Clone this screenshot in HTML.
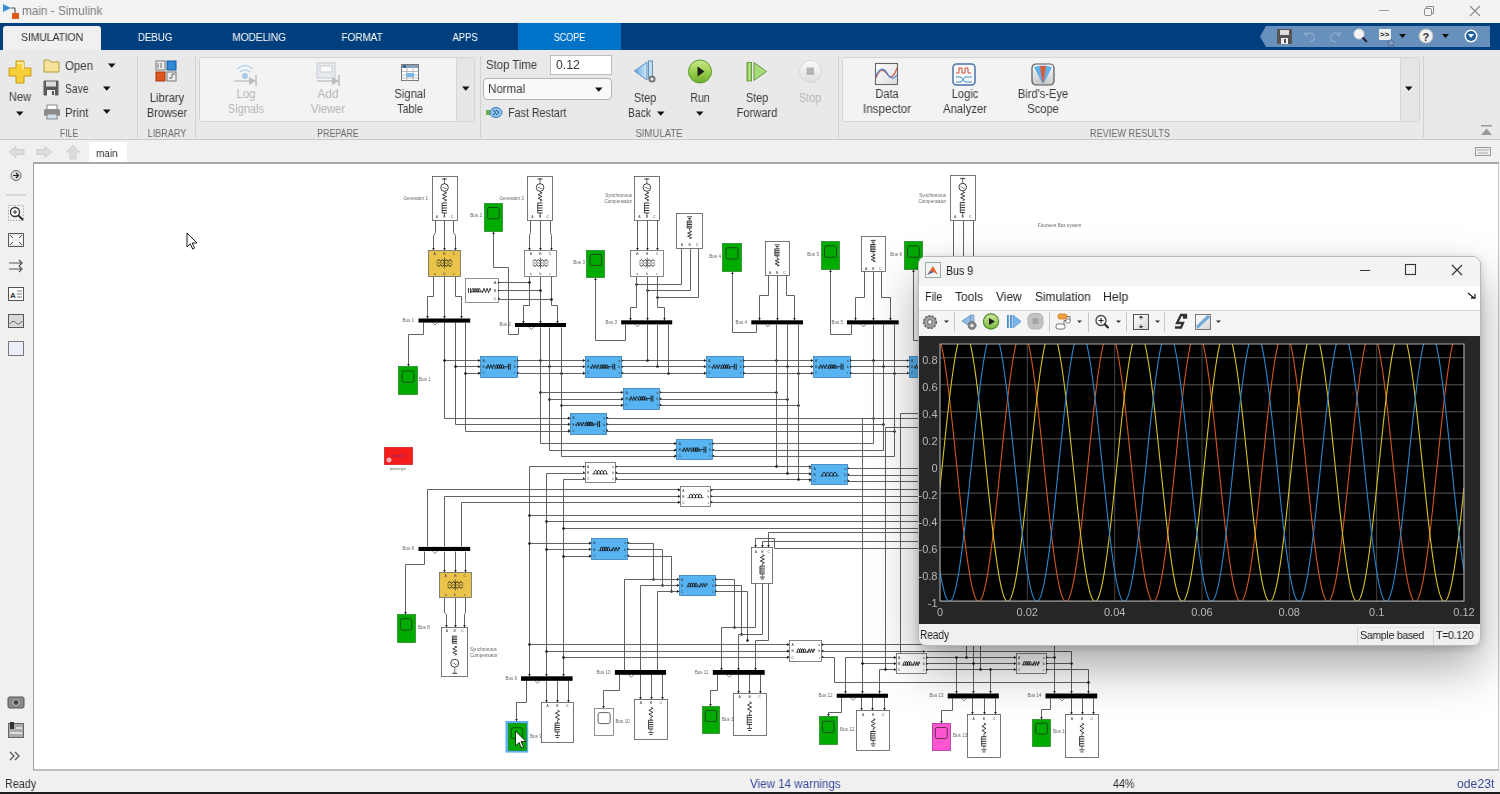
<!DOCTYPE html>
<html><head><meta charset="utf-8"><style>
*{margin:0;padding:0;box-sizing:border-box}
html,body{width:1500px;height:794px;overflow:hidden;background:#f0f0f0;font-family:"Liberation Sans", sans-serif}
.a{position:absolute}
.t{position:absolute;white-space:nowrap;font-family:"Liberation Sans", sans-serif;color:#3a3a3a;font-size:12px;line-height:14px}
.c{text-align:center}
.g{color:#6a6a6a;font-size:11px}
.dis{color:#b4b4b4}
.tab{position:absolute;top:27px;height:23px;color:#fff;font-size:11px;letter-spacing:-0.2px;line-height:20px;text-align:center}
svg{position:absolute;overflow:visible}
.t,.tab{will-change:transform}
svg.dg{will-change:transform}
</style></head><body>
<!-- title bar -->
<div class="a" style="left:0;top:0;width:1500px;height:22px;background:#f3f3f3"></div>
<svg style="left:2px;top:2px" width="18" height="18" viewBox="0 0 18 18">
<path d="M1,2 L9,6 L1,10 Z" fill="#3b8fd8"/><path d="M9,6 L13,6 L13,11" fill="none" stroke="#444" stroke-width="1"/>
<rect x="10" y="11" width="7" height="6" fill="#e05a1a"/></svg>
<div class="t" style="left:22px;top:4px;font-size:12px;color:#7a7a7a;transform:scaleX(0.980);transform-origin:left">main - Simulink</div>
<div class="a" style="left:1379px;top:10px;width:10px;height:1px;background:#9a9a9a"></div>
<svg style="left:1423px;top:5px" width="12" height="12"><rect x="1.5" y="3.5" width="7" height="7" rx="1.2" fill="none" stroke="#8a8a8a"/><path d="M3.5,3.5 V1.5 H10.5 V8.5 H8.5" fill="none" stroke="#8a8a8a"/></svg>
<svg style="left:1469px;top:5px" width="12" height="12"><path d="M1,1 L11,11 M11,1 L1,11" stroke="#8a8a8a" stroke-width="1.1"/></svg>
<!-- tab bar -->
<div class="a" style="left:0;top:23px;width:1500px;height:27px;background:#003f7e"></div>
<div class="a" style="left:3px;top:26px;width:98px;height:24px;background:#f0f0f0;border-radius:3px 3px 0 0"></div>
<div class="tab" style="left:3px;width:98px;color:#333;transform:scaleX(0.963);transform-origin:center">SIMULATION</div>
<div class="tab" style="left:120px;width:70px;transform:scaleX(0.903);transform-origin:center">DEBUG</div>
<div class="tab" style="left:222px;width:74px;transform:scaleX(0.940);transform-origin:center">MODELING</div>
<div class="tab" style="left:330px;width:64px;transform:scaleX(0.923);transform-origin:center">FORMAT</div>
<div class="tab" style="left:436px;width:58px;transform:scaleX(0.874);transform-origin:center">APPS</div>
<div class="a" style="left:518px;top:23px;width:103px;height:27px;background:#0073c8"></div>
<div class="tab" style="left:518px;width:103px;transform:scaleX(0.845);transform-origin:center">SCOPE</div>
<!-- quick access -->
<svg style="left:1261px;top:26px" width="234" height="22">
<path d="M5,0 H229 V21 H5 L-1,10.5 Z" fill="#6890bc"/>
<g transform="translate(16,3)"><rect x="0" y="0" width="15" height="15" rx="1" fill="#555"/><rect x="3" y="1" width="9" height="5" fill="#ddd"/><rect x="4" y="9" width="7" height="6" fill="#eee"/><rect x="7" y="10" width="2" height="4" fill="#555"/></g>
<path d="M44,9 q5,-4 9,0 q2,6 -5,7" fill="none" stroke="#85a8cc" stroke-width="1.5"/><path d="M42,6 L45,11 L48,7z" fill="#85a8cc"/>
<path d="M79,9 q-5,-4 -9,0 q-2,6 5,7" fill="none" stroke="#85a8cc" stroke-width="1.5"/><path d="M81,6 L78,11 L75,7z" fill="#85a8cc"/>
<circle cx="98" cy="8" r="5" fill="#f4f4f4" stroke="#d8d8d8"/><path d="M101.5,11.5 L106,16" stroke="#223" stroke-width="2"/>
<rect x="118" y="3" width="12" height="11" fill="#f0f0f0"/><text x="119" y="11" font-size="8" font-weight="bold" fill="#222" font-family='"Liberation Sans", sans-serif'>&gt;&gt;</text><path d="M130,13 l1.2,2.5 2.6,0.3 -2,1.8 0.6,2.6 -2.4,-1.4 -2.4,1.4 0.6,-2.6 -2,-1.8 2.6,-0.3z" fill="#7fa8d0" stroke="#446" stroke-width="0.5"/>
<path d="M138,8 h7 l-3.5,4z" fill="#111"/>
<circle cx="165" cy="10" r="7" fill="#f2f2f2" stroke="#bbb"/><text x="161.5" y="14.5" font-size="11" font-weight="bold" fill="#333" font-family='"Liberation Sans", sans-serif'>?</text>
<path d="M181,8 h7 l-3.5,4z" fill="#111"/>
<circle cx="210" cy="10" r="6.5" fill="#fff"/><circle cx="210" cy="10" r="5" fill="#1f5d9c"/><path d="M207,8 h6 l-3,4z" fill="#fff"/>
</svg>
<!-- ribbon -->
<div class="a" style="left:0;top:50px;width:1500px;height:90px;background:#e9e9e9"></div>
<div class="a" style="left:0;top:139px;width:1500px;height:1px;background:#c9c9c9"></div>
<div class="a" style="left:137px;top:56px;width:1px;height:82px;background:#d2d2d2"></div>
<div class="a" style="left:195px;top:56px;width:1px;height:82px;background:#d2d2d2"></div>
<div class="a" style="left:480px;top:56px;width:1px;height:82px;background:#d2d2d2"></div>
<div class="a" style="left:838px;top:56px;width:1px;height:82px;background:#d2d2d2"></div>
<div class="a" style="left:1423px;top:56px;width:1px;height:82px;background:#d2d2d2"></div>
<div class="a" style="left:199px;top:57px;width:276px;height:65px;background:#f3f3f3;border:1px solid #d4d4d4;border-radius:3px"></div>
<div class="a" style="left:456px;top:58px;width:18px;height:63px;background:#e6e6e6;border-left:1px solid #d6d6d6"></div>
<div class="a" style="left:842px;top:57px;width:578px;height:65px;background:#f3f3f3;border:1px solid #d4d4d4;border-radius:3px"></div>
<div class="a" style="left:1400px;top:58px;width:19px;height:63px;background:#e6e6e6;border-left:1px solid #d6d6d6"></div>
<svg style="left:461px;top:86px" width="10" height="6"><path d="M1,0.5 h7.5 l-3.75,4.2z" fill="#111"/></svg>
<svg style="left:1404px;top:86px" width="10" height="6"><path d="M1,0.5 h7.5 l-3.75,4.2z" fill="#111"/></svg>
<!-- FILE -->
<svg style="left:8px;top:60px" width="24" height="24"><path d="M8,1 h8 v7 h7 v8 h-7 v7 h-8 v-7 h-7 v-8 h7z" fill="#f7cf3a" stroke="#c89b1c" stroke-width="1"/><path d="M9,3 h6 v6" fill="none" stroke="#fff3b0" stroke-width="1.5"/></svg>
<div class="t c" style="left:4px;top:90px;width:32px;transform:scaleX(0.933);transform-origin:center">New</div>
<svg style="left:15px;top:111px" width="10" height="6"><path d="M1,0.5 h7.5 l-3.75,4.2z" fill="#111"/></svg>
<svg style="left:43px;top:59px" width="18" height="14"><path d="M1,1 h5 l2,2 h8 v10 h-15z" fill="#f5e29a" stroke="#b99a3a"/></svg>
<div class="t" style="left:65px;top:59px;transform:scaleX(0.952);transform-origin:left">Open</div>
<svg style="left:107px;top:63px" width="10" height="6"><path d="M1,0.5 h7.5 l-3.75,4.2z" fill="#111"/></svg>
<svg style="left:43px;top:80px" width="17" height="17"><rect x="0.5" y="0.5" width="15" height="15" rx="1" fill="#5a5a5a"/><rect x="3" y="1.5" width="10" height="5" fill="#ddd"/><rect x="4" y="10" width="8" height="6" fill="#eee"/><rect x="9" y="11" width="2" height="4" fill="#555"/></svg>
<div class="t" style="left:65px;top:82px;transform:scaleX(0.858);transform-origin:left">Save</div>
<svg style="left:102px;top:86px" width="10" height="6"><path d="M1,0.5 h7.5 l-3.75,4.2z" fill="#111"/></svg>
<svg style="left:43px;top:104px" width="18" height="16"><rect x="4" y="1" width="10" height="5" fill="#fff" stroke="#888"/><rect x="1" y="5" width="16" height="7" rx="1.5" fill="#8c8c8c"/><rect x="4" y="10" width="10" height="5" fill="#cfe0f0" stroke="#888"/></svg>
<div class="t" style="left:65px;top:105.5px;transform:scaleX(0.951);transform-origin:left">Print</div>
<svg style="left:102px;top:109px" width="10" height="6"><path d="M1,0.5 h7.5 l-3.75,4.2z" fill="#111"/></svg>
<div class="t g c" style="left:40px;top:126px;width:58px;transform:scaleX(0.784);transform-origin:center">FILE</div>
<!-- LIBRARY -->
<svg style="left:155px;top:60px" width="24" height="24"><rect x="1" y="1" width="9" height="9" fill="#eee" stroke="#777"/><rect x="12" y="1" width="9" height="9" fill="#2c8ad8" stroke="#1a5a9a"/><rect x="1" y="12" width="9" height="9" fill="#e0561c" stroke="#a33a10"/><rect x="12" y="12" width="9" height="9" fill="#eee" stroke="#777"/><path d="M3,8 V3 M6,8 V3 M14,18 h3 v-4 h3" stroke="#666" fill="none"/></svg>
<div class="t c" style="left:140px;top:91px;width:54px;transform:scaleX(0.946);transform-origin:center">Library</div>
<div class="t c" style="left:140px;top:106px;width:54px;transform:scaleX(0.916);transform-origin:center">Browser</div>
<div class="t g c" style="left:140px;top:126px;width:54px;transform:scaleX(0.829);transform-origin:center">LIBRARY</div>
<!-- PREPARE -->
<svg style="left:233px;top:62px" width="26" height="24"><path d="M4,7 q8,-7 16,0" fill="none" stroke="#b8d4ec" stroke-width="1.5"/><path d="M7,10 q5,-4 10,0" fill="none" stroke="#b8d4ec" stroke-width="1.5"/><circle cx="12" cy="14" r="3" fill="#a9c8e6"/><path d="M1,19 H20" stroke="#c4c4c4" stroke-width="1.5"/><path d="M16,15 L23,19 L16,23z" fill="#bdbdbd"/><path d="M23,13 V24" stroke="#bdbdbd" stroke-width="1.5"/></svg>
<div class="t c dis" style="left:216px;top:87px;width:60px;transform:scaleX(0.945);transform-origin:center">Log</div>
<div class="t c dis" style="left:216px;top:102px;width:60px;transform:scaleX(0.916);transform-origin:center">Signals</div>
<svg style="left:316px;top:62px" width="26" height="24"><rect x="1" y="1" width="18" height="15" fill="#e4eaf0" stroke="#c8ccd0"/><rect x="4" y="4" width="12" height="6" fill="#fafafa" stroke="#ccc"/><path d="M1,19 H20" stroke="#c4c4c4" stroke-width="1.5"/><path d="M16,15 L23,19 L16,23z" fill="#bdbdbd"/><path d="M23,13 V24" stroke="#bdbdbd" stroke-width="1.5"/></svg>
<div class="t c dis" style="left:298px;top:87px;width:60px;transform:scaleX(0.977);transform-origin:center">Add</div>
<div class="t c dis" style="left:298px;top:102px;width:60px;transform:scaleX(0.937);transform-origin:center">Viewer</div>
<svg style="left:401px;top:64px" width="19" height="18"><rect x="0.5" y="0.5" width="17" height="16" fill="#fff" stroke="#777"/><rect x="1" y="1" width="16" height="3" fill="#8aa0b8"/><rect x="2" y="1.5" width="3" height="2" fill="#1a4a8a"/><path d="M1,7.5 H17 M1,11 H17 M1,14 H17 M6,4 V17 M12,4 V17" stroke="#aaa" stroke-width="0.8"/><rect x="5" y="9" width="8" height="4" fill="#7ab8ec"/></svg>
<div class="t c" style="left:380px;top:87px;width:60px;transform:scaleX(0.937);transform-origin:center">Signal</div>
<div class="t c" style="left:380px;top:102px;width:60px;transform:scaleX(0.892);transform-origin:center">Table</div>
<div class="t g c" style="left:300px;top:126px;width:76px;transform:scaleX(0.803);transform-origin:center">PREPARE</div>
<!-- SIMULATE -->
<div class="t" style="left:486px;top:58px;font-size:12px;transform:scaleX(0.948);transform-origin:left">Stop Time</div>
<div class="a" style="left:550px;top:55px;width:62px;height:20px;background:#fff;border:1px solid #bdbdbd"></div>
<div class="t" style="left:556px;top:58px;transform:scaleX(1.021);transform-origin:left">0.12</div>
<div class="a" style="left:483px;top:78px;width:129px;height:22px;background:#fafafa;border:1px solid #b4b4b4;border-radius:4px"></div>
<div class="t" style="left:488px;top:82px;transform:scaleX(0.961);transform-origin:left">Normal</div>
<svg style="left:594px;top:87px" width="10" height="6"><path d="M1,0.5 h7.5 l-3.75,4.2z" fill="#111"/></svg>
<svg style="left:485px;top:106px" width="18" height="13"><rect x="1" y="4" width="6" height="5" fill="#6ab04c"/><ellipse cx="11" cy="6.5" rx="6" ry="5" fill="#8ec3ec" stroke="#3a7ab8"/><path d="M8,4 l3,2.5 l-3,2.5 M11,4 l3,2.5 l-3,2.5" fill="none" stroke="#1a4a8a"/></svg>
<div class="t" style="left:508px;top:106px;transform:scaleX(0.894);transform-origin:left">Fast Restart</div>
<svg style="left:633px;top:60px" width="26" height="24"><defs><linearGradient id="gb" x1="0" y1="0" x2="1" y2="0"><stop offset="0" stop-color="#6aa8dc"/><stop offset="1" stop-color="#cfe6f8"/></linearGradient></defs><path d="M1.5,11 L14,2 V20z" fill="url(#gb)" stroke="#4a86c0" stroke-width="0.9"/><rect x="15.5" y="1" width="4" height="17" fill="#c4def4" stroke="#5a8ab0" stroke-width="0.9"/><circle cx="19" cy="19" r="3.6" fill="#777"/><circle cx="19" cy="19" r="1.5" fill="#eee"/></svg>
<div class="t c" style="left:620px;top:91px;width:50px;transform:scaleX(0.903);transform-origin:center">Step</div>
<div class="t" style="left:628px;top:106px;transform:scaleX(0.858);transform-origin:left">Back</div>
<svg style="left:656px;top:111px" width="10" height="6"><path d="M1,0.5 h7.5 l-3.75,4.2z" fill="#111"/></svg>
<svg style="left:687px;top:59px" width="26" height="26"><defs><linearGradient id="gr" x1="0" y1="0" x2="0" y2="1"><stop offset="0" stop-color="#cbe98a"/><stop offset="0.5" stop-color="#9ccf4e"/><stop offset="1" stop-color="#6aae2a"/></linearGradient></defs><circle cx="13" cy="12.5" r="11.5" fill="url(#gr)" stroke="#5f9a34"/><path d="M10.5,7.5 L17.5,12.5 L10.5,17.5z" fill="#1c1c1c"/></svg>
<div class="t c" style="left:675px;top:91px;width:50px;transform:scaleX(0.873);transform-origin:center">Run</div>
<svg style="left:695px;top:111px" width="10" height="6"><path d="M1,0.5 h7.5 l-3.75,4.2z" fill="#111"/></svg>
<svg style="left:745px;top:61px" width="24" height="22"><defs><linearGradient id="gs" x1="0" y1="0" x2="1" y2="0"><stop offset="0" stop-color="#6fae3c"/><stop offset="0.5" stop-color="#bfe58f"/><stop offset="1" stop-color="#7fbf48"/></linearGradient></defs><rect x="2" y="1.5" width="4.5" height="18.5" fill="url(#gs)" stroke="#5a8f34" stroke-width="0.8"/><path d="M9,1.5 L21.5,10.5 L9,19.5z" fill="#a8dc78" stroke="#5a8f34" stroke-width="0.9"/></svg>
<div class="t c" style="left:727px;top:91px;width:60px;transform:scaleX(0.903);transform-origin:center">Step</div>
<div class="t c" style="left:727px;top:106px;width:60px;transform:scaleX(0.927);transform-origin:center">Forward</div>
<svg style="left:798px;top:59px" width="26" height="26"><defs><linearGradient id="gt" x1="0" y1="0" x2="0" y2="1"><stop offset="0" stop-color="#fbfbfb"/><stop offset="1" stop-color="#dedede"/></linearGradient></defs><circle cx="12.5" cy="12.5" r="11" fill="url(#gt)" stroke="#d6d6d6"/><rect x="8.5" y="8.5" width="7.5" height="7.5" fill="#b4b4b4"/></svg>
<div class="t c dis" style="left:785px;top:91px;width:50px;transform:scaleX(0.915);transform-origin:center">Stop</div>
<div class="t g c" style="left:620px;top:126px;width:78px;transform:scaleX(0.869);transform-origin:center">SIMULATE</div>
<!-- REVIEW -->
<svg style="left:875px;top:63px" width="24" height="23"><defs><linearGradient id="gd" x1="0" y1="0" x2="1" y2="1"><stop offset="0" stop-color="#fff"/><stop offset="1" stop-color="#dcdcdc"/></linearGradient></defs><rect x="0.5" y="0.5" width="22" height="21" fill="url(#gd)" stroke="#666" stroke-width="1.1"/><path d="M1,15 q5,-13 11,-4 q5,8 10,-6" fill="none" stroke="#d0584a" stroke-width="1.2"/><path d="M1,13 q5,-12 11,-3 q5,9 10,2" fill="none" stroke="#3d86cf" stroke-width="1.2"/></svg>
<div class="t c" style="left:852px;top:87px;width:70px;transform:scaleX(0.906);transform-origin:center">Data</div>
<div class="t c" style="left:852px;top:102px;width:70px;transform:scaleX(0.974);transform-origin:center">Inspector</div>
<svg style="left:952px;top:63px" width="25" height="23"><rect x="1" y="1" width="22" height="21" rx="3.5" fill="#f8f8f8" stroke="#4a72a8" stroke-width="1.5"/><path d="M4,10 h3 v-5 h3 v5 h3 v-5 h3 v5 h3" fill="none" stroke="#d04a3a" stroke-width="1"/><path d="M4,14 h5 l4,5 h7 M4,19 h5 l4,-5 h7" fill="none" stroke="#3a8ad0" stroke-width="1"/></svg>
<div class="t c" style="left:928px;top:87px;width:74px;transform:scaleX(0.934);transform-origin:center">Logic</div>
<div class="t c" style="left:928px;top:102px;width:74px;transform:scaleX(0.942);transform-origin:center">Analyzer</div>
<svg style="left:1031px;top:63px" width="24" height="23"><defs><linearGradient id="ge" x1="0" y1="0" x2="0" y2="1"><stop offset="0" stop-color="#fafafa"/><stop offset="1" stop-color="#c8c8c8"/></linearGradient></defs><rect x="1" y="1" width="22" height="21" rx="4" fill="url(#ge)" stroke="#555" stroke-width="1.2"/><path d="M3,4 Q12,1 21,4 L13,20 L11,20z" fill="#5fb0ea"/><path d="M9,3 L15,3 L12.6,19 L11.4,19z" fill="#d85a3a"/></svg>
<div class="t c" style="left:1003px;top:87px;width:80px;transform:scaleX(0.924);transform-origin:center">Bird's-Eye</div>
<div class="t c" style="left:1003px;top:102px;width:80px;transform:scaleX(0.926);transform-origin:center">Scope</div>
<div class="t g c" style="left:1070px;top:126px;width:120px;transform:scaleX(0.829);transform-origin:center">REVIEW RESULTS</div>
<svg style="left:1481px;top:125px" width="12" height="11"><rect x="0" y="0" width="11" height="1.5" fill="#999"/><path d="M0,10 L5.5,3.5 L11,10z" fill="#999"/></svg>
<!-- breadcrumb -->
<svg style="left:8px;top:146px" width="18" height="14"><path d="M1,6 L8,0.5 V3.5 H16 V8.5 H8 V11.5z" fill="#dcdcdc" stroke="#cfcfcf"/></svg>
<svg style="left:36px;top:146px" width="18" height="14"><path d="M16,6 L9,0.5 V3.5 H1 V8.5 H9 V11.5z" fill="#dcdcdc" stroke="#cfcfcf"/></svg>
<svg style="left:66px;top:144px" width="15" height="16"><path d="M7,1 L13.5,8 H10 V15 H4 V8 H0.5z" fill="#dcdcdc" stroke="#cfcfcf"/></svg>
<div class="a" style="left:89px;top:142px;width:38px;height:20px;background:#fff"></div>
<div class="t" style="left:96px;top:146px;font-size:11.5px;color:#333;transform:scaleX(0.867);transform-origin:left">main</div>
<svg style="left:1475px;top:147px" width="17" height="10"><rect x="0.5" y="0.5" width="15" height="8" fill="#eee" stroke="#999"/><path d="M3,2 V4 M5,2 V4 M7,2 V4 M9,2 V4 M11,2 V4 M13,2 V4 M3,6 H13" stroke="#999" stroke-width="0.8"/></svg>
<!-- canvas -->
<div class="a" style="left:33px;top:162px;width:1466px;height:609px;background:#fff;border-top:2px solid #a8a8a8;border-left:1px solid #a0a0a0;border-right:1px solid #c8c8c8;border-bottom:2px solid #c0c0c0"></div>
<!-- palette -->
<svg style="left:0;top:162px" width="33" height="608">
<circle cx="16" cy="13.5" r="5" fill="#ddd" stroke="#666"/><path d="M13,13.5 h5 M16,11 l2.5,2.5 l-2.5,2.5" fill="none" stroke="#222" stroke-width="1.2"/>
<path d="M6,33 H26" stroke="#bbb"/>
<rect x="8.5" y="43.5" width="15" height="15" fill="none" stroke="#aaa" stroke-dasharray="1.5 1.5"/><circle cx="15" cy="50" r="4.5" fill="#fff" stroke="#333" stroke-width="1.3"/><path d="M18,53 L23,58" stroke="#333" stroke-width="2"/><path d="M13,50 h4 M15,48 v4" stroke="#333"/>
<rect x="8.5" y="71.5" width="15" height="13" fill="#f4f4f4" stroke="#555"/><path d="M10,73 l3,3 M22,73 l-3,3 M10,83 l3,-3 M22,83 l-3,-3" stroke="#444"/>
<path d="M9,101 H22 M19,98 l3,3 l-3,3 M9,107 H22 M19,104 l3,3 l-3,3" fill="none" stroke="#555" stroke-width="1.2"/>
<rect x="8.5" y="125.5" width="15" height="13" fill="#fff" stroke="#555"/><text x="10" y="136" font-size="8" font-weight="bold" fill="#333" font-family='"Liberation Sans", sans-serif'>A</text><path d="M17,129 h5 M17,132 h5 M17,135 h5" stroke="#555" stroke-width="0.8"/>
<rect x="8.5" y="152.5" width="15" height="13" fill="#d8d8d8" stroke="#555"/><path d="M10,162 q3,-5 6,-1 q3,3 6,-2" fill="none" stroke="#666"/>
<rect x="8.5" y="179.5" width="15" height="14" fill="#eceef8" stroke="#777"/>
<rect x="8" y="535" width="16" height="11" rx="1.5" fill="#888" stroke="#555"/><circle cx="16" cy="540.5" r="3" fill="#444" stroke="#ccc"/>
<rect x="8.5" y="561.5" width="15" height="14" fill="#aaa" stroke="#666"/><rect x="10" y="560" width="4" height="7" fill="#333"/><path d="M16,566 h6 M10,571 h12" stroke="#eee" stroke-width="1.5"/>
<path d="M10,590 l4,4 l-4,4 M15,590 l4,4 l-4,4" fill="none" stroke="#555" stroke-width="1.3"/>
</svg>
<!-- status bar -->
<div class="a" style="left:0;top:771px;width:1500px;height:21px;background:#f0f0f0"></div>
<div class="t" style="left:5px;top:777px;font-size:12px;color:#333;transform:scaleX(0.899);transform-origin:left">Ready</div>
<div class="t" style="left:750px;top:777px;font-size:12px;color:#3a4a9a;transform:scaleX(0.966);transform-origin:left">View 14 warnings</div>
<div class="t" style="left:1113px;top:777px;font-size:12px;color:#333;transform:scaleX(0.892);transform-origin:left">44%</div>
<div class="t" style="left:1457px;top:777px;font-size:12px;color:#3a4a9a;transform:scaleX(1.019);transform-origin:left">ode23t</div>
<div class="a" style="left:0;top:792px;width:1500px;height:2px;background:#1c1c1c"></div>
<!-- diagram -->
<svg class="dg" style="left:0;top:0" width="1500" height="794" viewBox="0 0 1500 794">
<clipPath id="cv"><rect x="35" y="164" width="1462" height="605"/></clipPath>
<g clip-path="url(#cv)">
<polyline points="435.5,220.5 435.5,232.5 433.5,235.5 433.5,250.5" fill="none" stroke="#5a5a5a" stroke-width="0.95"/>
<path d="M433.5,250.5 L432.2,247.9 L434.8,247.9Z" fill="#222"/>
<polyline points="444.5,220.5 444.5,250.5" fill="none" stroke="#5a5a5a" stroke-width="0.95"/>
<path d="M444.5,250.5 L443.2,247.9 L445.8,247.9Z" fill="#222"/>
<polyline points="453.5,220.5 453.5,232.5 455.5,235.5 455.5,250.5" fill="none" stroke="#5a5a5a" stroke-width="0.95"/>
<path d="M455.5,250.5 L454.2,247.9 L456.8,247.9Z" fill="#222"/>
<polyline points="433.5,276.5 433.5,296.5 427.5,296.5 427.5,318.5" fill="none" stroke="#5a5a5a" stroke-width="0.95"/>
<path d="M427.5,318.5 L426.2,315.9 L428.8,315.9Z" fill="#222"/>
<polyline points="444.5,276.5 444.5,318.5" fill="none" stroke="#5a5a5a" stroke-width="0.95"/>
<path d="M444.5,318.5 L443.2,315.9 L445.8,315.9Z" fill="#222"/>
<polyline points="455.5,276.5 455.5,296.5 461.5,296.5 461.5,318.5" fill="none" stroke="#5a5a5a" stroke-width="0.95"/>
<path d="M461.5,318.5 L460.2,315.9 L462.8,315.9Z" fill="#222"/>
<polyline points="518.5,327.5 518.5,334.5 508.5,334.5 508.5,267.5 493.5,267.5 493.5,231.5" fill="none" stroke="#5a5a5a" stroke-width="0.95"/>
<path d="M493.5,231.5 L494.8,234.1 L492.2,234.1Z" fill="#222"/>
<polyline points="530.5,220.5 530.5,232.5 529.5,235.5 529.5,250.5" fill="none" stroke="#5a5a5a" stroke-width="0.95"/>
<path d="M529.5,250.5 L528.2,247.9 L530.8,247.9Z" fill="#222"/>
<polyline points="540.5,220.5 540.5,250.5" fill="none" stroke="#5a5a5a" stroke-width="0.95"/>
<path d="M540.5,250.5 L539.2,247.9 L541.8,247.9Z" fill="#222"/>
<polyline points="550.5,220.5 550.5,232.5 551.5,235.5 551.5,250.5" fill="none" stroke="#5a5a5a" stroke-width="0.95"/>
<path d="M551.5,250.5 L550.2,247.9 L552.8,247.9Z" fill="#222"/>
<polyline points="529.5,276.5 529.5,305.5 523.5,305.5 523.5,323.5" fill="none" stroke="#5a5a5a" stroke-width="0.95"/>
<path d="M523.5,323.5 L522.2,320.9 L524.8,320.9Z" fill="#222"/>
<polyline points="540.5,276.5 540.5,323.5" fill="none" stroke="#5a5a5a" stroke-width="0.95"/>
<path d="M540.5,323.5 L539.2,320.9 L541.8,320.9Z" fill="#222"/>
<polyline points="551.5,276.5 551.5,305.5 557.5,305.5 557.5,323.5" fill="none" stroke="#5a5a5a" stroke-width="0.95"/>
<path d="M557.5,323.5 L556.2,320.9 L558.8,320.9Z" fill="#222"/>
<polyline points="498.5,282.5 529.5,282.5" fill="none" stroke="#5a5a5a" stroke-width="0.95"/>
<circle cx="529.5" cy="282.5" r="1.3" fill="#111"/>
<polyline points="498.5,290.5 540.5,290.5" fill="none" stroke="#5a5a5a" stroke-width="0.95"/>
<circle cx="540.5" cy="290.5" r="1.3" fill="#111"/>
<polyline points="498.5,299.5 551.5,299.5" fill="none" stroke="#5a5a5a" stroke-width="0.95"/>
<circle cx="551.5" cy="299.5" r="1.3" fill="#111"/>
<polyline points="637.5,220.5 637.5,250.5" fill="none" stroke="#5a5a5a" stroke-width="0.95"/>
<path d="M637.5,250.5 L636.2,247.9 L638.8,247.9Z" fill="#222"/>
<polyline points="647.5,220.5 647.5,250.5" fill="none" stroke="#5a5a5a" stroke-width="0.95"/>
<path d="M647.5,250.5 L646.2,247.9 L648.8,247.9Z" fill="#222"/>
<polyline points="657.5,220.5 657.5,250.5" fill="none" stroke="#5a5a5a" stroke-width="0.95"/>
<path d="M657.5,250.5 L656.2,247.9 L658.8,247.9Z" fill="#222"/>
<polyline points="681.5,248.5 681.5,284.5 636.5,284.5" fill="none" stroke="#5a5a5a" stroke-width="0.95"/>
<circle cx="636.5" cy="284.5" r="1.3" fill="#111"/>
<polyline points="690.5,248.5 690.5,290.5 647.5,290.5" fill="none" stroke="#5a5a5a" stroke-width="0.95"/>
<circle cx="647.5" cy="290.5" r="1.3" fill="#111"/>
<polyline points="698.5,248.5 698.5,297.5 657.5,297.5" fill="none" stroke="#5a5a5a" stroke-width="0.95"/>
<circle cx="657.5" cy="297.5" r="1.3" fill="#111"/>
<polyline points="636.5,276.5 636.5,307.5 630.5,307.5 630.5,320.5" fill="none" stroke="#5a5a5a" stroke-width="0.95"/>
<path d="M630.5,320.5 L629.2,317.9 L631.8,317.9Z" fill="#222"/>
<polyline points="647.5,276.5 647.5,320.5" fill="none" stroke="#5a5a5a" stroke-width="0.95"/>
<path d="M647.5,320.5 L646.2,317.9 L648.8,317.9Z" fill="#222"/>
<polyline points="657.5,276.5 657.5,307.5 664.5,307.5 664.5,320.5" fill="none" stroke="#5a5a5a" stroke-width="0.95"/>
<path d="M664.5,320.5 L663.2,317.9 L665.8,317.9Z" fill="#222"/>
<polyline points="625.5,324.5 625.5,340.5 595.5,340.5 595.5,277.5" fill="none" stroke="#5a5a5a" stroke-width="0.95"/>
<path d="M595.5,277.5 L596.8,280.1 L594.2,280.1Z" fill="#222"/>
<polyline points="756.5,324.5 756.5,332.5 732.5,332.5 732.5,271.5" fill="none" stroke="#5a5a5a" stroke-width="0.95"/>
<path d="M732.5,271.5 L733.8,274.1 L731.2,274.1Z" fill="#222"/>
<polyline points="768.5,275.5 768.5,295.5 759.5,295.5 759.5,320.5" fill="none" stroke="#5a5a5a" stroke-width="0.95"/>
<path d="M759.5,320.5 L758.2,317.9 L760.8,317.9Z" fill="#222"/>
<polyline points="777.5,275.5 777.5,320.5" fill="none" stroke="#5a5a5a" stroke-width="0.95"/>
<path d="M777.5,320.5 L776.2,317.9 L778.8,317.9Z" fill="#222"/>
<polyline points="786.5,275.5 786.5,295.5 794.5,295.5 794.5,320.5" fill="none" stroke="#5a5a5a" stroke-width="0.95"/>
<path d="M794.5,320.5 L793.2,317.9 L795.8,317.9Z" fill="#222"/>
<polyline points="851.5,324.5 851.5,334.5 830.5,334.5 830.5,269.5" fill="none" stroke="#5a5a5a" stroke-width="0.95"/>
<path d="M830.5,269.5 L831.8,272.1 L829.2,272.1Z" fill="#222"/>
<polyline points="864.5,271.5 864.5,297.5 855.5,297.5 855.5,320.5" fill="none" stroke="#5a5a5a" stroke-width="0.95"/>
<path d="M855.5,320.5 L854.2,317.9 L856.8,317.9Z" fill="#222"/>
<polyline points="873.5,271.5 873.5,320.5" fill="none" stroke="#5a5a5a" stroke-width="0.95"/>
<path d="M873.5,320.5 L872.2,317.9 L874.8,317.9Z" fill="#222"/>
<polyline points="881.5,271.5 881.5,297.5 890.5,297.5 890.5,320.5" fill="none" stroke="#5a5a5a" stroke-width="0.95"/>
<path d="M890.5,320.5 L889.2,317.9 L891.8,317.9Z" fill="#222"/>
<polyline points="925.5,340.5 913.5,340.5 913.5,269.5" fill="none" stroke="#5a5a5a" stroke-width="0.95"/>
<path d="M913.5,269.5 L914.8,272.1 L912.2,272.1Z" fill="#222"/>
<polyline points="953.5,220.5 953.5,258.5" fill="none" stroke="#5a5a5a" stroke-width="0.95"/>
<path d="M953.5,258.5 L952.2,255.9 L954.8,255.9Z" fill="#222"/>
<polyline points="963.5,220.5 963.5,258.5" fill="none" stroke="#5a5a5a" stroke-width="0.95"/>
<path d="M963.5,258.5 L962.2,255.9 L964.8,255.9Z" fill="#222"/>
<polyline points="973.5,220.5 973.5,258.5" fill="none" stroke="#5a5a5a" stroke-width="0.95"/>
<path d="M973.5,258.5 L972.2,255.9 L974.8,255.9Z" fill="#222"/>
<polyline points="423.5,322.5 423.5,334.5 408.5,334.5 408.5,366.5" fill="none" stroke="#5a5a5a" stroke-width="0.95"/>
<path d="M408.5,366.5 L407.2,363.9 L409.8,363.9Z" fill="#222"/>
<polyline points="444.5,322.5 444.5,418.5 570.5,418.5" fill="none" stroke="#5a5a5a" stroke-width="0.95"/>
<path d="M570.5,418.5 L567.9,419.8 L567.9,417.2Z" fill="#222"/>
<polyline points="444.5,360.5 480.5,360.5" fill="none" stroke="#5a5a5a" stroke-width="0.95"/>
<path d="M480.5,360.5 L477.9,361.8 L477.9,359.2Z" fill="#222"/>
<circle cx="444.5" cy="360.5" r="1.3" fill="#111"/>
<polyline points="455.5,322.5 455.5,424.5 570.5,424.5" fill="none" stroke="#5a5a5a" stroke-width="0.95"/>
<path d="M570.5,424.5 L567.9,425.8 L567.9,423.2Z" fill="#222"/>
<polyline points="455.5,366.5 480.5,366.5" fill="none" stroke="#5a5a5a" stroke-width="0.95"/>
<path d="M480.5,366.5 L477.9,367.8 L477.9,365.2Z" fill="#222"/>
<circle cx="455.5" cy="366.5" r="1.3" fill="#111"/>
<polyline points="465.5,322.5 465.5,431.5 570.5,431.5" fill="none" stroke="#5a5a5a" stroke-width="0.95"/>
<path d="M570.5,431.5 L567.9,432.8 L567.9,430.2Z" fill="#222"/>
<polyline points="465.5,373.5 480.5,373.5" fill="none" stroke="#5a5a5a" stroke-width="0.95"/>
<path d="M480.5,373.5 L477.9,374.8 L477.9,372.2Z" fill="#222"/>
<circle cx="465.5" cy="373.5" r="1.3" fill="#111"/>
<polyline points="517.5,360.5 585.5,360.5" fill="none" stroke="#5a5a5a" stroke-width="0.95"/>
<path d="M585.5,360.5 L582.9,361.8 L582.9,359.2Z" fill="#222"/>
<circle cx="540.5" cy="360.5" r="1.3" fill="#111"/>
<polyline points="621.5,360.5 706.5,360.5" fill="none" stroke="#5a5a5a" stroke-width="0.95"/>
<path d="M706.5,360.5 L703.9,361.8 L703.9,359.2Z" fill="#222"/>
<circle cx="647.5" cy="360.5" r="1.3" fill="#111"/>
<polyline points="743.5,360.5 813.5,360.5" fill="none" stroke="#5a5a5a" stroke-width="0.95"/>
<path d="M813.5,360.5 L810.9,361.8 L810.9,359.2Z" fill="#222"/>
<circle cx="776.5" cy="360.5" r="1.3" fill="#111"/>
<polyline points="850.5,360.5 925.5,360.5" fill="none" stroke="#5a5a5a" stroke-width="0.95"/>
<path d="M925.5,360.5 L922.9,361.8 L922.9,359.2Z" fill="#222"/>
<circle cx="873.5" cy="360.5" r="1.3" fill="#111"/>
<polyline points="517.5,366.5 585.5,366.5" fill="none" stroke="#5a5a5a" stroke-width="0.95"/>
<path d="M585.5,366.5 L582.9,367.8 L582.9,365.2Z" fill="#222"/>
<circle cx="549.5" cy="366.5" r="1.3" fill="#111"/>
<polyline points="621.5,366.5 706.5,366.5" fill="none" stroke="#5a5a5a" stroke-width="0.95"/>
<path d="M706.5,366.5 L703.9,367.8 L703.9,365.2Z" fill="#222"/>
<circle cx="657.5" cy="366.5" r="1.3" fill="#111"/>
<polyline points="743.5,366.5 813.5,366.5" fill="none" stroke="#5a5a5a" stroke-width="0.95"/>
<path d="M813.5,366.5 L810.9,367.8 L810.9,365.2Z" fill="#222"/>
<circle cx="787.5" cy="366.5" r="1.3" fill="#111"/>
<polyline points="850.5,366.5 925.5,366.5" fill="none" stroke="#5a5a5a" stroke-width="0.95"/>
<path d="M925.5,366.5 L922.9,367.8 L922.9,365.2Z" fill="#222"/>
<circle cx="883.5" cy="366.5" r="1.3" fill="#111"/>
<polyline points="517.5,373.5 585.5,373.5" fill="none" stroke="#5a5a5a" stroke-width="0.95"/>
<path d="M585.5,373.5 L582.9,374.8 L582.9,372.2Z" fill="#222"/>
<circle cx="561.5" cy="373.5" r="1.3" fill="#111"/>
<polyline points="621.5,373.5 706.5,373.5" fill="none" stroke="#5a5a5a" stroke-width="0.95"/>
<path d="M706.5,373.5 L703.9,374.8 L703.9,372.2Z" fill="#222"/>
<circle cx="668.5" cy="373.5" r="1.3" fill="#111"/>
<polyline points="743.5,373.5 813.5,373.5" fill="none" stroke="#5a5a5a" stroke-width="0.95"/>
<path d="M813.5,373.5 L810.9,374.8 L810.9,372.2Z" fill="#222"/>
<circle cx="798.5" cy="373.5" r="1.3" fill="#111"/>
<polyline points="850.5,373.5 925.5,373.5" fill="none" stroke="#5a5a5a" stroke-width="0.95"/>
<path d="M925.5,373.5 L922.9,374.8 L922.9,372.2Z" fill="#222"/>
<circle cx="894.5" cy="373.5" r="1.3" fill="#111"/>
<polyline points="540.5,327.5 540.5,443.5 676.5,443.5" fill="none" stroke="#5a5a5a" stroke-width="0.95"/>
<path d="M676.5,443.5 L673.9,444.8 L673.9,442.2Z" fill="#222"/>
<circle cx="540.5" cy="392.5" r="1.3" fill="#111"/>
<polyline points="540.5,392.5 623.5,392.5" fill="none" stroke="#5a5a5a" stroke-width="0.95"/>
<path d="M623.5,392.5 L620.9,393.8 L620.9,391.2Z" fill="#222"/>
<polyline points="647.5,324.5 647.5,360.5" fill="none" stroke="#5a5a5a" stroke-width="0.95"/>
<polyline points="659.5,392.5 776.5,392.5" fill="none" stroke="#5a5a5a" stroke-width="0.95"/>
<circle cx="776.5" cy="392.5" r="1.3" fill="#111"/>
<polyline points="776.5,324.5 776.5,466.5 811.5,466.5" fill="none" stroke="#5a5a5a" stroke-width="0.95"/>
<path d="M811.5,466.5 L808.9,467.8 L808.9,465.2Z" fill="#222"/>
<polyline points="606.5,418.5 873.5,418.5" fill="none" stroke="#5a5a5a" stroke-width="0.95"/>
<circle cx="873.5" cy="418.5" r="1.3" fill="#111"/>
<polyline points="873.5,324.5 873.5,443.5 712.5,443.5" fill="none" stroke="#5a5a5a" stroke-width="0.95"/>
<polyline points="615.5,466.5 776.5,466.5" fill="none" stroke="#5a5a5a" stroke-width="0.95"/>
<circle cx="776.5" cy="466.5" r="1.3" fill="#111"/>
<polyline points="847.5,468.5 925.5,468.5" fill="none" stroke="#5a5a5a" stroke-width="0.95"/>
<path d="M925.5,468.5 L922.9,469.8 L922.9,467.2Z" fill="#222"/>
<polyline points="549.5,327.5 549.5,450.5 676.5,450.5" fill="none" stroke="#5a5a5a" stroke-width="0.95"/>
<path d="M676.5,450.5 L673.9,451.8 L673.9,449.2Z" fill="#222"/>
<circle cx="549.5" cy="399.5" r="1.3" fill="#111"/>
<polyline points="549.5,399.5 623.5,399.5" fill="none" stroke="#5a5a5a" stroke-width="0.95"/>
<path d="M623.5,399.5 L620.9,400.8 L620.9,398.2Z" fill="#222"/>
<polyline points="657.5,324.5 657.5,366.5" fill="none" stroke="#5a5a5a" stroke-width="0.95"/>
<polyline points="659.5,399.5 787.5,399.5" fill="none" stroke="#5a5a5a" stroke-width="0.95"/>
<circle cx="787.5" cy="399.5" r="1.3" fill="#111"/>
<polyline points="787.5,324.5 787.5,473.5 811.5,473.5" fill="none" stroke="#5a5a5a" stroke-width="0.95"/>
<path d="M811.5,473.5 L808.9,474.8 L808.9,472.2Z" fill="#222"/>
<polyline points="606.5,424.5 883.5,424.5" fill="none" stroke="#5a5a5a" stroke-width="0.95"/>
<circle cx="883.5" cy="424.5" r="1.3" fill="#111"/>
<polyline points="883.5,324.5 883.5,450.5 712.5,450.5" fill="none" stroke="#5a5a5a" stroke-width="0.95"/>
<polyline points="615.5,473.5 787.5,473.5" fill="none" stroke="#5a5a5a" stroke-width="0.95"/>
<circle cx="787.5" cy="473.5" r="1.3" fill="#111"/>
<polyline points="847.5,475.5 925.5,475.5" fill="none" stroke="#5a5a5a" stroke-width="0.95"/>
<path d="M925.5,475.5 L922.9,476.8 L922.9,474.2Z" fill="#222"/>
<polyline points="561.5,327.5 561.5,456.5 676.5,456.5" fill="none" stroke="#5a5a5a" stroke-width="0.95"/>
<path d="M676.5,456.5 L673.9,457.8 L673.9,455.2Z" fill="#222"/>
<circle cx="561.5" cy="405.5" r="1.3" fill="#111"/>
<polyline points="561.5,405.5 623.5,405.5" fill="none" stroke="#5a5a5a" stroke-width="0.95"/>
<path d="M623.5,405.5 L620.9,406.8 L620.9,404.2Z" fill="#222"/>
<polyline points="668.5,324.5 668.5,373.5" fill="none" stroke="#5a5a5a" stroke-width="0.95"/>
<polyline points="659.5,405.5 798.5,405.5" fill="none" stroke="#5a5a5a" stroke-width="0.95"/>
<circle cx="798.5" cy="405.5" r="1.3" fill="#111"/>
<polyline points="798.5,324.5 798.5,479.5 811.5,479.5" fill="none" stroke="#5a5a5a" stroke-width="0.95"/>
<path d="M811.5,479.5 L808.9,480.8 L808.9,478.2Z" fill="#222"/>
<polyline points="606.5,431.5 894.5,431.5" fill="none" stroke="#5a5a5a" stroke-width="0.95"/>
<circle cx="894.5" cy="431.5" r="1.3" fill="#111"/>
<polyline points="894.5,324.5 894.5,456.5 712.5,456.5" fill="none" stroke="#5a5a5a" stroke-width="0.95"/>
<polyline points="615.5,479.5 798.5,479.5" fill="none" stroke="#5a5a5a" stroke-width="0.95"/>
<circle cx="798.5" cy="479.5" r="1.3" fill="#111"/>
<polyline points="847.5,481.5 925.5,481.5" fill="none" stroke="#5a5a5a" stroke-width="0.95"/>
<path d="M925.5,481.5 L922.9,482.8 L922.9,480.2Z" fill="#222"/>
<polyline points="585.5,466.5 529.5,466.5 529.5,676.5" fill="none" stroke="#5a5a5a" stroke-width="0.95"/>
<path d="M529.5,676.5 L528.2,673.9 L530.8,673.9Z" fill="#222"/>
<polyline points="585.5,473.5 546.5,473.5 546.5,676.5" fill="none" stroke="#5a5a5a" stroke-width="0.95"/>
<path d="M546.5,676.5 L545.2,673.9 L547.8,673.9Z" fill="#222"/>
<polyline points="585.5,479.5 563.5,479.5 563.5,676.5" fill="none" stroke="#5a5a5a" stroke-width="0.95"/>
<path d="M563.5,676.5 L562.2,673.9 L564.8,673.9Z" fill="#222"/>
<polyline points="427.5,546.5 427.5,489.5 680.5,489.5" fill="none" stroke="#5a5a5a" stroke-width="0.95"/>
<path d="M680.5,489.5 L677.9,490.8 L677.9,488.2Z" fill="#222"/>
<polyline points="710.5,489.5 925.5,489.5" fill="none" stroke="#5a5a5a" stroke-width="0.95"/>
<path d="M925.5,489.5 L922.9,490.8 L922.9,488.2Z" fill="#222"/>
<polyline points="444.5,546.5 444.5,496.5 680.5,496.5" fill="none" stroke="#5a5a5a" stroke-width="0.95"/>
<path d="M680.5,496.5 L677.9,497.8 L677.9,495.2Z" fill="#222"/>
<polyline points="710.5,496.5 925.5,496.5" fill="none" stroke="#5a5a5a" stroke-width="0.95"/>
<path d="M925.5,496.5 L922.9,497.8 L922.9,495.2Z" fill="#222"/>
<polyline points="461.5,546.5 461.5,502.5 680.5,502.5" fill="none" stroke="#5a5a5a" stroke-width="0.95"/>
<path d="M680.5,502.5 L677.9,503.8 L677.9,501.2Z" fill="#222"/>
<polyline points="710.5,502.5 925.5,502.5" fill="none" stroke="#5a5a5a" stroke-width="0.95"/>
<path d="M925.5,502.5 L922.9,503.8 L922.9,501.2Z" fill="#222"/>
<polyline points="529.5,515.5 925.5,515.5" fill="none" stroke="#5a5a5a" stroke-width="0.95"/>
<path d="M925.5,515.5 L922.9,516.8 L922.9,514.2Z" fill="#222"/>
<circle cx="529.5" cy="515.5" r="1.3" fill="#111"/>
<polyline points="546.5,521.5 925.5,521.5" fill="none" stroke="#5a5a5a" stroke-width="0.95"/>
<path d="M925.5,521.5 L922.9,522.8 L922.9,520.2Z" fill="#222"/>
<circle cx="546.5" cy="521.5" r="1.3" fill="#111"/>
<polyline points="563.5,528.5 925.5,528.5" fill="none" stroke="#5a5a5a" stroke-width="0.95"/>
<path d="M925.5,528.5 L922.9,529.8 L922.9,527.2Z" fill="#222"/>
<circle cx="563.5" cy="528.5" r="1.3" fill="#111"/>
<polyline points="529.5,543.5 591.5,543.5" fill="none" stroke="#5a5a5a" stroke-width="0.95"/>
<path d="M591.5,543.5 L588.9,544.8 L588.9,542.2Z" fill="#222"/>
<circle cx="529.5" cy="543.5" r="1.3" fill="#111"/>
<polyline points="546.5,549.5 591.5,549.5" fill="none" stroke="#5a5a5a" stroke-width="0.95"/>
<path d="M591.5,549.5 L588.9,550.8 L588.9,548.2Z" fill="#222"/>
<circle cx="546.5" cy="549.5" r="1.3" fill="#111"/>
<polyline points="563.5,556.5 591.5,556.5" fill="none" stroke="#5a5a5a" stroke-width="0.95"/>
<path d="M591.5,556.5 L588.9,557.8 L588.9,555.2Z" fill="#222"/>
<circle cx="563.5" cy="556.5" r="1.3" fill="#111"/>
<polyline points="627.5,543.5 653.5,543.5 653.5,579.5" fill="none" stroke="#5a5a5a" stroke-width="0.95"/>
<circle cx="653.5" cy="579.5" r="1.3" fill="#111"/>
<polyline points="627.5,549.5 662.5,549.5 662.5,585.5" fill="none" stroke="#5a5a5a" stroke-width="0.95"/>
<circle cx="662.5" cy="585.5" r="1.3" fill="#111"/>
<polyline points="627.5,556.5 671.5,556.5 671.5,591.5" fill="none" stroke="#5a5a5a" stroke-width="0.95"/>
<circle cx="671.5" cy="591.5" r="1.3" fill="#111"/>
<polyline points="624.5,670.5 624.5,579.5 679.5,579.5" fill="none" stroke="#5a5a5a" stroke-width="0.95"/>
<path d="M679.5,579.5 L676.9,580.8 L676.9,578.2Z" fill="#222"/>
<polyline points="640.5,670.5 640.5,585.5 679.5,585.5" fill="none" stroke="#5a5a5a" stroke-width="0.95"/>
<path d="M679.5,585.5 L676.9,586.8 L676.9,584.2Z" fill="#222"/>
<polyline points="657.5,670.5 657.5,591.5 679.5,591.5" fill="none" stroke="#5a5a5a" stroke-width="0.95"/>
<path d="M679.5,591.5 L676.9,592.8 L676.9,590.2Z" fill="#222"/>
<polyline points="715.5,579.5 734.5,579.5 734.5,627.5" fill="none" stroke="#5a5a5a" stroke-width="0.95"/>
<circle cx="734.5" cy="627.5" r="1.3" fill="#111"/>
<polyline points="755.5,583.5 755.5,627.5 721.5,627.5 721.5,670.5" fill="none" stroke="#5a5a5a" stroke-width="0.95"/>
<path d="M721.5,670.5 L720.2,667.9 L722.8,667.9Z" fill="#222"/>
<polyline points="715.5,585.5 741.5,585.5 741.5,634.5" fill="none" stroke="#5a5a5a" stroke-width="0.95"/>
<circle cx="741.5" cy="634.5" r="1.3" fill="#111"/>
<polyline points="762.5,583.5 762.5,634.5 738.5,634.5 738.5,670.5" fill="none" stroke="#5a5a5a" stroke-width="0.95"/>
<path d="M738.5,670.5 L737.2,667.9 L739.8,667.9Z" fill="#222"/>
<polyline points="715.5,591.5 747.5,591.5 747.5,640.5" fill="none" stroke="#5a5a5a" stroke-width="0.95"/>
<circle cx="747.5" cy="640.5" r="1.3" fill="#111"/>
<polyline points="768.5,583.5 768.5,640.5 755.5,640.5 755.5,670.5" fill="none" stroke="#5a5a5a" stroke-width="0.95"/>
<path d="M755.5,670.5 L754.2,667.9 L756.8,667.9Z" fill="#222"/>
<polyline points="925.5,548.5 774.5,548.5 774.5,538.5 755.5,538.5 755.5,547.5" fill="none" stroke="#5a5a5a" stroke-width="0.95"/>
<path d="M755.5,547.5 L754.2,544.9 L756.8,544.9Z" fill="#222"/>
<polyline points="925.5,541.5 762.5,541.5 762.5,547.5" fill="none" stroke="#5a5a5a" stroke-width="0.95"/>
<path d="M762.5,547.5 L761.2,544.9 L763.8,544.9Z" fill="#222"/>
<polyline points="925.5,532.5 768.5,532.5 768.5,547.5" fill="none" stroke="#5a5a5a" stroke-width="0.95"/>
<path d="M768.5,547.5 L767.2,544.9 L769.8,544.9Z" fill="#222"/>
<polyline points="925.5,418.5 862.5,418.5 862.5,693.5" fill="none" stroke="#5a5a5a" stroke-width="0.95"/>
<path d="M862.5,693.5 L861.2,690.9 L863.8,690.9Z" fill="#222"/>
<polyline points="925.5,427.5 885.5,427.5 885.5,669.5" fill="none" stroke="#5a5a5a" stroke-width="0.95"/>
<polyline points="879.5,669.5 896.5,669.5" fill="none" stroke="#5a5a5a" stroke-width="0.95"/>
<path d="M896.5,669.5 L893.9,670.8 L893.9,668.2Z" fill="#222"/>
<polyline points="925.5,413.5 900.5,413.5 900.5,657.5" fill="none" stroke="#5a5a5a" stroke-width="0.95"/>
<polyline points="529.5,644.5 789.5,644.5" fill="none" stroke="#5a5a5a" stroke-width="0.95"/>
<path d="M789.5,644.5 L786.9,645.8 L786.9,643.2Z" fill="#222"/>
<circle cx="529.5" cy="644.5" r="1.3" fill="#111"/>
<polyline points="546.5,651.5 789.5,651.5" fill="none" stroke="#5a5a5a" stroke-width="0.95"/>
<path d="M789.5,651.5 L786.9,652.8 L786.9,650.2Z" fill="#222"/>
<circle cx="546.5" cy="651.5" r="1.3" fill="#111"/>
<polyline points="563.5,657.5 789.5,657.5" fill="none" stroke="#5a5a5a" stroke-width="0.95"/>
<path d="M789.5,657.5 L786.9,658.8 L786.9,656.2Z" fill="#222"/>
<circle cx="563.5" cy="657.5" r="1.3" fill="#111"/>
<polyline points="821.5,644.5 925.5,644.5" fill="none" stroke="#5a5a5a" stroke-width="0.95"/>
<path d="M925.5,644.5 L922.9,645.8 L922.9,643.2Z" fill="#222"/>
<polyline points="821.5,651.5 925.5,651.5" fill="none" stroke="#5a5a5a" stroke-width="0.95"/>
<path d="M925.5,651.5 L922.9,652.8 L922.9,650.2Z" fill="#222"/>
<polyline points="821.5,657.5 834.5,657.5 834.5,682.5 1088.5,682.5 1088.5,693.5" fill="none" stroke="#5a5a5a" stroke-width="0.95"/>
<path d="M1088.5,693.5 L1087.2,690.9 L1089.8,690.9Z" fill="#222"/>
<polyline points="845.5,657.5 896.5,657.5" fill="none" stroke="#5a5a5a" stroke-width="0.95"/>
<path d="M896.5,657.5 L893.9,658.8 L893.9,656.2Z" fill="#222"/>
<polyline points="862.5,663.5 896.5,663.5" fill="none" stroke="#5a5a5a" stroke-width="0.95"/>
<path d="M896.5,663.5 L893.9,664.8 L893.9,662.2Z" fill="#222"/>
<polyline points="845.5,657.5 845.5,693.5" fill="none" stroke="#5a5a5a" stroke-width="0.95"/>
<path d="M845.5,693.5 L844.2,690.9 L846.8,690.9Z" fill="#222"/>
<polyline points="879.5,669.5 879.5,693.5" fill="none" stroke="#5a5a5a" stroke-width="0.95"/>
<path d="M879.5,693.5 L878.2,690.9 L880.8,690.9Z" fill="#222"/>
<circle cx="862.5" cy="663.5" r="1.3" fill="#111"/>
<circle cx="885.5" cy="669.5" r="1.3" fill="#111"/>
<polyline points="900.5,657.5 896.5,657.5" fill="none" stroke="#5a5a5a" stroke-width="0.95"/>
<path d="M896.5,657.5 L899.1,656.2 L899.1,658.8Z" fill="#222"/>
<polyline points="841.5,697.5 841.5,712.5 828.5,712.5 828.5,716.5" fill="none" stroke="#5a5a5a" stroke-width="0.95"/>
<path d="M828.5,716.5 L827.2,713.9 L829.8,713.9Z" fill="#222"/>
<polyline points="861.5,697.5 861.5,710.5" fill="none" stroke="#5a5a5a" stroke-width="0.95"/>
<path d="M861.5,710.5 L860.2,707.9 L862.8,707.9Z" fill="#222"/>
<polyline points="872.5,697.5 872.5,710.5" fill="none" stroke="#5a5a5a" stroke-width="0.95"/>
<path d="M872.5,710.5 L871.2,707.9 L873.8,707.9Z" fill="#222"/>
<polyline points="884.5,697.5 884.5,710.5" fill="none" stroke="#5a5a5a" stroke-width="0.95"/>
<path d="M884.5,710.5 L883.2,707.9 L885.8,707.9Z" fill="#222"/>
<polyline points="619.5,674.5 619.5,690.5 603.5,690.5 603.5,708.5" fill="none" stroke="#5a5a5a" stroke-width="0.95"/>
<path d="M603.5,708.5 L602.2,705.9 L604.8,705.9Z" fill="#222"/>
<polyline points="640.5,674.5 640.5,699.5" fill="none" stroke="#5a5a5a" stroke-width="0.95"/>
<path d="M640.5,699.5 L639.2,696.9 L641.8,696.9Z" fill="#222"/>
<polyline points="651.5,674.5 651.5,699.5" fill="none" stroke="#5a5a5a" stroke-width="0.95"/>
<path d="M651.5,699.5 L650.2,696.9 L652.8,696.9Z" fill="#222"/>
<polyline points="662.5,674.5 662.5,699.5" fill="none" stroke="#5a5a5a" stroke-width="0.95"/>
<path d="M662.5,699.5 L661.2,696.9 L663.8,696.9Z" fill="#222"/>
<polyline points="717.5,674.5 717.5,690.5 710.5,690.5 710.5,706.5" fill="none" stroke="#5a5a5a" stroke-width="0.95"/>
<path d="M710.5,706.5 L709.2,703.9 L711.8,703.9Z" fill="#222"/>
<polyline points="738.5,674.5 738.5,693.5" fill="none" stroke="#5a5a5a" stroke-width="0.95"/>
<path d="M738.5,693.5 L737.2,690.9 L739.8,690.9Z" fill="#222"/>
<polyline points="749.5,674.5 749.5,693.5" fill="none" stroke="#5a5a5a" stroke-width="0.95"/>
<path d="M749.5,693.5 L748.2,690.9 L750.8,690.9Z" fill="#222"/>
<polyline points="760.5,674.5 760.5,693.5" fill="none" stroke="#5a5a5a" stroke-width="0.95"/>
<path d="M760.5,693.5 L759.2,690.9 L761.8,690.9Z" fill="#222"/>
<polyline points="526.5,680.5 526.5,702.5 516.5,702.5 516.5,721.5" fill="none" stroke="#5a5a5a" stroke-width="0.95"/>
<path d="M516.5,721.5 L515.2,718.9 L517.8,718.9Z" fill="#222"/>
<polyline points="546.5,680.5 546.5,702.5" fill="none" stroke="#5a5a5a" stroke-width="0.95"/>
<path d="M546.5,702.5 L545.2,699.9 L547.8,699.9Z" fill="#222"/>
<polyline points="557.5,680.5 557.5,702.5" fill="none" stroke="#5a5a5a" stroke-width="0.95"/>
<path d="M557.5,702.5 L556.2,699.9 L558.8,699.9Z" fill="#222"/>
<polyline points="568.5,680.5 568.5,702.5" fill="none" stroke="#5a5a5a" stroke-width="0.95"/>
<path d="M568.5,702.5 L567.2,699.9 L569.8,699.9Z" fill="#222"/>
<polyline points="424.5,551.5 424.5,564.5 405.5,564.5 405.5,614.5" fill="none" stroke="#5a5a5a" stroke-width="0.95"/>
<path d="M405.5,614.5 L404.2,611.9 L406.8,611.9Z" fill="#222"/>
<polyline points="444.5,551.5 444.5,572.5" fill="none" stroke="#5a5a5a" stroke-width="0.95"/>
<path d="M444.5,572.5 L443.2,569.9 L445.8,569.9Z" fill="#222"/>
<polyline points="455.5,551.5 455.5,572.5" fill="none" stroke="#5a5a5a" stroke-width="0.95"/>
<path d="M455.5,572.5 L454.2,569.9 L456.8,569.9Z" fill="#222"/>
<polyline points="465.5,551.5 465.5,572.5" fill="none" stroke="#5a5a5a" stroke-width="0.95"/>
<path d="M465.5,572.5 L464.2,569.9 L466.8,569.9Z" fill="#222"/>
<polyline points="444.5,597.5 444.5,612.5 446.5,614.5 446.5,627.5" fill="none" stroke="#5a5a5a" stroke-width="0.95"/>
<path d="M446.5,627.5 L445.2,624.9 L447.8,624.9Z" fill="#222"/>
<polyline points="455.5,597.5 455.5,627.5" fill="none" stroke="#5a5a5a" stroke-width="0.95"/>
<path d="M455.5,627.5 L454.2,624.9 L456.8,624.9Z" fill="#222"/>
<polyline points="465.5,597.5 465.5,612.5 464.5,614.5 464.5,627.5" fill="none" stroke="#5a5a5a" stroke-width="0.95"/>
<path d="M464.5,627.5 L463.2,624.9 L465.8,624.9Z" fill="#222"/>
<polyline points="926.5,651.5 1071.5,651.5 1071.5,693.5" fill="none" stroke="#5a5a5a" stroke-width="0.95"/>
<path d="M1071.5,693.5 L1070.2,690.9 L1072.8,690.9Z" fill="#222"/>
<polyline points="926.5,657.5 1016.5,657.5" fill="none" stroke="#5a5a5a" stroke-width="0.95"/>
<path d="M1016.5,657.5 L1013.9,658.8 L1013.9,656.2Z" fill="#222"/>
<polyline points="926.5,663.5 1016.5,663.5" fill="none" stroke="#5a5a5a" stroke-width="0.95"/>
<path d="M1016.5,663.5 L1013.9,664.8 L1013.9,662.2Z" fill="#222"/>
<polyline points="926.5,669.5 1016.5,669.5" fill="none" stroke="#5a5a5a" stroke-width="0.95"/>
<path d="M1016.5,669.5 L1013.9,670.8 L1013.9,668.2Z" fill="#222"/>
<polyline points="956.5,657.5 956.5,693.5" fill="none" stroke="#5a5a5a" stroke-width="0.95"/>
<path d="M956.5,693.5 L955.2,690.9 L957.8,690.9Z" fill="#222"/>
<circle cx="956.5" cy="657.5" r="1.3" fill="#111"/>
<polyline points="973.5,645.5 973.5,693.5" fill="none" stroke="#5a5a5a" stroke-width="0.95"/>
<path d="M973.5,693.5 L972.2,690.9 L974.8,690.9Z" fill="#222"/>
<circle cx="973.5" cy="663.5" r="1.3" fill="#111"/>
<polyline points="990.5,669.5 990.5,693.5" fill="none" stroke="#5a5a5a" stroke-width="0.95"/>
<path d="M990.5,693.5 L989.2,690.9 L991.8,690.9Z" fill="#222"/>
<circle cx="990.5" cy="669.5" r="1.3" fill="#111"/>
<polyline points="966.5,645.5 966.5,657.5" fill="none" stroke="#5a5a5a" stroke-width="0.95"/>
<circle cx="966.5" cy="657.5" r="1.3" fill="#111"/>
<polyline points="980.5,645.5 980.5,669.5" fill="none" stroke="#5a5a5a" stroke-width="0.95"/>
<circle cx="980.5" cy="669.5" r="1.3" fill="#111"/>
<polyline points="1046.5,657.5 1054.5,657.5" fill="none" stroke="#5a5a5a" stroke-width="0.95"/>
<polyline points="1046.5,663.5 1071.5,663.5" fill="none" stroke="#5a5a5a" stroke-width="0.95"/>
<polyline points="1046.5,669.5 1088.5,669.5 1088.5,682.5" fill="none" stroke="#5a5a5a" stroke-width="0.95"/>
<polyline points="1054.5,645.5 1054.5,693.5" fill="none" stroke="#5a5a5a" stroke-width="0.95"/>
<path d="M1054.5,693.5 L1053.2,690.9 L1055.8,690.9Z" fill="#222"/>
<circle cx="1054.5" cy="657.5" r="1.3" fill="#111"/>
<circle cx="1071.5" cy="663.5" r="1.3" fill="#111"/>
<circle cx="1088.5" cy="682.5" r="1.3" fill="#111"/>
<polyline points="952.5,698.5 952.5,710.5 941.5,710.5 941.5,723.5" fill="none" stroke="#5a5a5a" stroke-width="0.95"/>
<path d="M941.5,723.5 L940.2,720.9 L942.8,720.9Z" fill="#222"/>
<polyline points="972.5,698.5 972.5,714.5" fill="none" stroke="#5a5a5a" stroke-width="0.95"/>
<path d="M972.5,714.5 L971.2,711.9 L973.8,711.9Z" fill="#222"/>
<polyline points="984.5,698.5 984.5,714.5" fill="none" stroke="#5a5a5a" stroke-width="0.95"/>
<path d="M984.5,714.5 L983.2,711.9 L985.8,711.9Z" fill="#222"/>
<polyline points="995.5,698.5 995.5,714.5" fill="none" stroke="#5a5a5a" stroke-width="0.95"/>
<path d="M995.5,714.5 L994.2,711.9 L996.8,711.9Z" fill="#222"/>
<polyline points="1050.5,698.5 1050.5,709.5 1041.5,709.5 1041.5,719.5" fill="none" stroke="#5a5a5a" stroke-width="0.95"/>
<path d="M1041.5,719.5 L1040.2,716.9 L1042.8,716.9Z" fill="#222"/>
<polyline points="1071.5,698.5 1071.5,714.5" fill="none" stroke="#5a5a5a" stroke-width="0.95"/>
<path d="M1071.5,714.5 L1070.2,711.9 L1072.8,711.9Z" fill="#222"/>
<polyline points="1082.5,698.5 1082.5,714.5" fill="none" stroke="#5a5a5a" stroke-width="0.95"/>
<path d="M1082.5,714.5 L1081.2,711.9 L1083.8,711.9Z" fill="#222"/>
<polyline points="1093.5,698.5 1093.5,714.5" fill="none" stroke="#5a5a5a" stroke-width="0.95"/>
<path d="M1093.5,714.5 L1092.2,711.9 L1094.8,711.9Z" fill="#222"/>
<rect x="432.5" y="176.5" width="25.0" height="44.0" fill="#fff" stroke="#555" stroke-width="0.8"/>
<line x1="442.0" y1="179" x2="447.0" y2="179" stroke="#111" stroke-width="0.8"/>
<polyline points="444.5,178 444.5,184" fill="none" stroke="#111" stroke-width="0.6"/>
<circle cx="444.5" cy="187.5" r="3.8" fill="none" stroke="#111" stroke-width="0.8"/>
<path d="M442.5,188 q1,-2 2,0 q1,2 2,0" fill="none" stroke="#111" stroke-width="0.6"/>
<polyline points="444.5,192 446.5,192.9 442.5,194.7 446.5,196.5 442.5,198.3 446.5,200.1 444.5,201" fill="none" stroke="#111" stroke-width="0.8"/>
<line x1="442.1" y1="203.0" x2="446.9" y2="203.0" stroke="#111" stroke-width="0.85"/>
<line x1="442.1" y1="205.5" x2="446.9" y2="205.5" stroke="#111" stroke-width="0.85"/>
<line x1="442.1" y1="208.0" x2="446.9" y2="208.0" stroke="#111" stroke-width="0.85"/>
<line x1="442.1" y1="210.5" x2="446.9" y2="210.5" stroke="#111" stroke-width="0.85"/>
<line x1="442.1" y1="213.0" x2="446.9" y2="213.0" stroke="#111" stroke-width="0.85"/>
<line x1="442.1" y1="203.0" x2="442.1" y2="213.0" stroke="#111" stroke-width="0.7"/>
<polyline points="444.5,213 444.5,216" fill="none" stroke="#111" stroke-width="0.6"/>
<text x="437.0" y="218" font-size="3.5" text-anchor="middle" fill="#444" font-family='"Liberation Sans", sans-serif'>A</text>
<text x="444.5" y="218" font-size="3.5" text-anchor="middle" fill="#444" font-family='"Liberation Sans", sans-serif'>B</text>
<text x="452.0" y="218" font-size="3.5" text-anchor="middle" fill="#444" font-family='"Liberation Sans", sans-serif'>C</text>
<text x="428" y="200" font-size="4.6" text-anchor="end" fill="#666" font-family='"Liberation Sans", sans-serif'>Generator 1</text>
<rect x="428.5" y="250.5" width="32.0" height="26.0" fill="#e9c34a" stroke="#6a6a6a" stroke-width="0.8"/>
<text x="434.74" y="254.5" font-size="3.5" text-anchor="middle" fill="#444" font-family='"Liberation Sans", sans-serif'>A</text>
<text x="444.4" y="254.5" font-size="3.5" text-anchor="middle" fill="#444" font-family='"Liberation Sans", sans-serif'>B</text>
<text x="454.06" y="254.5" font-size="3.5" text-anchor="middle" fill="#444" font-family='"Liberation Sans", sans-serif'>C</text>
<text x="434.74" y="274.5" font-size="3.5" text-anchor="middle" fill="#444" font-family='"Liberation Sans", sans-serif'>a</text>
<text x="444.4" y="274.5" font-size="3.5" text-anchor="middle" fill="#444" font-family='"Liberation Sans", sans-serif'>b</text>
<text x="454.06" y="274.5" font-size="3.5" text-anchor="middle" fill="#444" font-family='"Liberation Sans", sans-serif'>c</text>
<path d="M436.9,261.5 q1.9,-3.5 3.75,0 q1.9,-3.5 3.75,0 q1.9,-3.5 3.75,0 q1.9,-3.5 3.75,0" fill="none" stroke="#111" stroke-width="0.8"/>
<path d="M436.9,264.5 q1.9,3.5 3.75,0 q1.9,3.5 3.75,0 q1.9,3.5 3.75,0 q1.9,3.5 3.75,0" fill="none" stroke="#111" stroke-width="0.8"/>
<line x1="436.4" y1="263.0" x2="452.4" y2="263.0" stroke="#111" stroke-width="0.5"/>
<line x1="444.4" y1="257.5" x2="444.4" y2="268.5" stroke="#111" stroke-width="0.6"/>
<rect x="418.5" y="318.5" width="51.7" height="4.1" fill="#000"/>
<path d="M432.544,322.6 L435.044,325.1 L437.544,322.6" fill="none" stroke="#333" stroke-width="0.6"/>
<text x="414" y="322" font-size="4.5" text-anchor="end" fill="#666" font-family='"Liberation Sans", sans-serif'>Bus 1</text>
<rect x="484.5" y="203.5" width="18.0" height="28.0" fill="#00ab00" stroke="#2a8a2a" stroke-width="0.8"/>
<rect x="487.6" y="207.5" width="11.6" height="11.3" rx="1.8" fill="none" stroke="#222" stroke-width="0.7"/>
<text x="482" y="217" font-size="4.6" text-anchor="end" fill="#666" font-family='"Liberation Sans", sans-serif'>Bus 2</text>
<rect x="527.5" y="176.5" width="25.0" height="44.0" fill="#fff" stroke="#555" stroke-width="0.8"/>
<line x1="537.5999999999999" y1="179" x2="542.5999999999999" y2="179" stroke="#111" stroke-width="0.8"/>
<polyline points="540.0999999999999,178 540.0999999999999,184" fill="none" stroke="#111" stroke-width="0.6"/>
<circle cx="540.0999999999999" cy="187.5" r="3.8" fill="none" stroke="#111" stroke-width="0.8"/>
<path d="M538.0999999999999,188 q1,-2 2,0 q1,2 2,0" fill="none" stroke="#111" stroke-width="0.6"/>
<polyline points="540.0999999999999,192 542.0999999999999,192.9 538.0999999999999,194.7 542.0999999999999,196.5 538.0999999999999,198.3 542.0999999999999,200.1 540.0999999999999,201" fill="none" stroke="#111" stroke-width="0.8"/>
<line x1="537.6999999999999" y1="203.0" x2="542.4999999999999" y2="203.0" stroke="#111" stroke-width="0.85"/>
<line x1="537.6999999999999" y1="205.5" x2="542.4999999999999" y2="205.5" stroke="#111" stroke-width="0.85"/>
<line x1="537.6999999999999" y1="208.0" x2="542.4999999999999" y2="208.0" stroke="#111" stroke-width="0.85"/>
<line x1="537.6999999999999" y1="210.5" x2="542.4999999999999" y2="210.5" stroke="#111" stroke-width="0.85"/>
<line x1="537.6999999999999" y1="213.0" x2="542.4999999999999" y2="213.0" stroke="#111" stroke-width="0.85"/>
<line x1="537.6999999999999" y1="203.0" x2="537.6999999999999" y2="213.0" stroke="#111" stroke-width="0.7"/>
<polyline points="540.0999999999999,213 540.0999999999999,216" fill="none" stroke="#111" stroke-width="0.6"/>
<text x="532.48" y="218" font-size="3.5" text-anchor="middle" fill="#444" font-family='"Liberation Sans", sans-serif'>A</text>
<text x="540.0999999999999" y="218" font-size="3.5" text-anchor="middle" fill="#444" font-family='"Liberation Sans", sans-serif'>B</text>
<text x="547.7199999999999" y="218" font-size="3.5" text-anchor="middle" fill="#444" font-family='"Liberation Sans", sans-serif'>C</text>
<text x="524" y="200" font-size="4.6" text-anchor="end" fill="#666" font-family='"Liberation Sans", sans-serif'>Generator 2</text>
<rect x="524.5" y="250.5" width="32.0" height="26.0" fill="#fff" stroke="#6a6a6a" stroke-width="0.8"/>
<text x="530.8" y="254.5" font-size="3.5" text-anchor="middle" fill="#444" font-family='"Liberation Sans", sans-serif'>A</text>
<text x="540.4" y="254.5" font-size="3.5" text-anchor="middle" fill="#444" font-family='"Liberation Sans", sans-serif'>B</text>
<text x="550.0" y="254.5" font-size="3.5" text-anchor="middle" fill="#444" font-family='"Liberation Sans", sans-serif'>C</text>
<text x="530.8" y="274.5" font-size="3.5" text-anchor="middle" fill="#444" font-family='"Liberation Sans", sans-serif'>a</text>
<text x="540.4" y="274.5" font-size="3.5" text-anchor="middle" fill="#444" font-family='"Liberation Sans", sans-serif'>b</text>
<text x="550.0" y="274.5" font-size="3.5" text-anchor="middle" fill="#444" font-family='"Liberation Sans", sans-serif'>c</text>
<path d="M532.9,261.5 q1.9,-3.5 3.75,0 q1.9,-3.5 3.75,0 q1.9,-3.5 3.75,0 q1.9,-3.5 3.75,0" fill="none" stroke="#111" stroke-width="0.8"/>
<path d="M532.9,264.5 q1.9,3.5 3.75,0 q1.9,3.5 3.75,0 q1.9,3.5 3.75,0 q1.9,3.5 3.75,0" fill="none" stroke="#111" stroke-width="0.8"/>
<line x1="532.4" y1="263.0" x2="548.4" y2="263.0" stroke="#111" stroke-width="0.5"/>
<line x1="540.4" y1="257.5" x2="540.4" y2="268.5" stroke="#111" stroke-width="0.6"/>
<rect x="465.5" y="278.5" width="33.0" height="24.0" fill="#fff" stroke="#888" stroke-width="0.9"/>
<line x1="468.5" y1="288.0" x2="468.5" y2="293.0" stroke="#111" stroke-width="0.8"/>
<line x1="470.5" y1="288.0" x2="470.5" y2="293.0" stroke="#111" stroke-width="0.8"/>
<path d="M472.0,292.0 C471.4,287.3 474.6,287.3 474.0,292.0 C473.4,287.3 476.7,287.3 476.1,292.0 C475.5,287.3 478.7,287.3 478.1,292.0 C477.5,287.3 480.7,287.3 480.1,292.0" fill="none" stroke="#111" stroke-width="0.9"/>
<line x1="470.0" y1="292.0" x2="482.1" y2="292.0" stroke="#111" stroke-width="0.6"/>
<polyline points="481.75,290.5 482.5083333333333,292.7 484.025,288.3 485.5416666666667,292.7 487.05833333333334,288.3 488.57500000000005,292.7 490.0916666666667,288.3 490.85,290.5" fill="none" stroke="#111" stroke-width="0.8"/>
<text x="496.5" y="284.014" font-size="4" text-anchor="end" fill="#333" font-family='"Liberation Sans", sans-serif'>A</text>
<path d="M498,281.2 L500,282.5 L498,283.8Z" fill="#222"/>
<text x="496.5" y="292.0" font-size="4" text-anchor="end" fill="#333" font-family='"Liberation Sans", sans-serif'>B</text>
<path d="M498,289.2 L500,290.5 L498,291.8Z" fill="#222"/>
<text x="496.5" y="299.986" font-size="4" text-anchor="end" fill="#333" font-family='"Liberation Sans", sans-serif'>C</text>
<path d="M498,297.2 L500,298.5 L498,299.8Z" fill="#222"/>
<rect x="515" y="323" width="51.0" height="4.0" fill="#000"/>
<path d="M528.82,327 L531.32,329.5 L533.82,327" fill="none" stroke="#333" stroke-width="0.6"/>
<text x="511" y="326" font-size="4.5" text-anchor="end" fill="#666" font-family='"Liberation Sans", sans-serif'>Bus 2</text>
<rect x="634.5" y="176.5" width="25.0" height="44.0" fill="#fff" stroke="#555" stroke-width="0.8"/>
<line x1="644.3499999999999" y1="179" x2="649.3499999999999" y2="179" stroke="#111" stroke-width="0.8"/>
<polyline points="646.8499999999999,178 646.8499999999999,184" fill="none" stroke="#111" stroke-width="0.6"/>
<circle cx="646.8499999999999" cy="187.5" r="3.8" fill="none" stroke="#111" stroke-width="0.8"/>
<path d="M644.8499999999999,188 q1,-2 2,0 q1,2 2,0" fill="none" stroke="#111" stroke-width="0.6"/>
<polyline points="646.8499999999999,192 648.8499999999999,192.9 644.8499999999999,194.7 648.8499999999999,196.5 644.8499999999999,198.3 648.8499999999999,200.1 646.8499999999999,201" fill="none" stroke="#111" stroke-width="0.8"/>
<line x1="644.4499999999999" y1="203.0" x2="649.2499999999999" y2="203.0" stroke="#111" stroke-width="0.85"/>
<line x1="644.4499999999999" y1="205.5" x2="649.2499999999999" y2="205.5" stroke="#111" stroke-width="0.85"/>
<line x1="644.4499999999999" y1="208.0" x2="649.2499999999999" y2="208.0" stroke="#111" stroke-width="0.85"/>
<line x1="644.4499999999999" y1="210.5" x2="649.2499999999999" y2="210.5" stroke="#111" stroke-width="0.85"/>
<line x1="644.4499999999999" y1="213.0" x2="649.2499999999999" y2="213.0" stroke="#111" stroke-width="0.85"/>
<line x1="644.4499999999999" y1="203.0" x2="644.4499999999999" y2="213.0" stroke="#111" stroke-width="0.7"/>
<polyline points="646.8499999999999,213 646.8499999999999,216" fill="none" stroke="#111" stroke-width="0.6"/>
<text x="639.38" y="218" font-size="3.5" text-anchor="middle" fill="#444" font-family='"Liberation Sans", sans-serif'>A</text>
<text x="646.8499999999999" y="218" font-size="3.5" text-anchor="middle" fill="#444" font-family='"Liberation Sans", sans-serif'>B</text>
<text x="654.3199999999999" y="218" font-size="3.5" text-anchor="middle" fill="#444" font-family='"Liberation Sans", sans-serif'>C</text>
<text x="632" y="197" font-size="4.6" text-anchor="end" fill="#666" font-family='"Liberation Sans", sans-serif'>Synchronous</text>
<text x="632" y="202.5" font-size="4.6" text-anchor="end" fill="#666" font-family='"Liberation Sans", sans-serif'>Compensator</text>
<rect x="676.5" y="213.5" width="26.0" height="35.0" fill="#fff" stroke="#555" stroke-width="0.8"/>
<line x1="687.0999999999999" y1="216.8" x2="692.0999999999999" y2="216.8" stroke="#111" stroke-width="0.8"/>
<line x1="688.0999999999999" y1="218.6" x2="691.0999999999999" y2="218.6" stroke="#111" stroke-width="0.8"/>
<polyline points="689.5999999999999,218.565 689.5999999999999,221.02200000000002" fill="none" stroke="#111" stroke-width="0.6"/>
<line x1="687.1999999999999" y1="221.0" x2="691.9999999999999" y2="221.0" stroke="#111" stroke-width="0.85"/>
<line x1="687.1999999999999" y1="222.8" x2="691.9999999999999" y2="222.8" stroke="#111" stroke-width="0.85"/>
<line x1="687.1999999999999" y1="224.5" x2="691.9999999999999" y2="224.5" stroke="#111" stroke-width="0.85"/>
<line x1="687.1999999999999" y1="226.3" x2="691.9999999999999" y2="226.3" stroke="#111" stroke-width="0.85"/>
<line x1="687.1999999999999" y1="228.0" x2="691.9999999999999" y2="228.0" stroke="#111" stroke-width="0.85"/>
<line x1="687.1999999999999" y1="221.0" x2="687.1999999999999" y2="228.0" stroke="#111" stroke-width="0.7"/>
<polyline points="689.5999999999999,228.042 689.5999999999999,230.85000000000002" fill="none" stroke="#111" stroke-width="0.6"/>
<polyline points="689.5999999999999,230.85000000000002 691.5999999999999,231.62220000000002 687.5999999999999,233.16660000000002 691.5999999999999,234.711 687.5999999999999,236.2554 691.5999999999999,237.7998 689.5999999999999,238.572" fill="none" stroke="#111" stroke-width="0.8"/>
<text x="681.92" y="246.4" font-size="3.5" text-anchor="middle" fill="#444" font-family='"Liberation Sans", sans-serif'>A</text>
<text x="689.5999999999999" y="246.4" font-size="3.5" text-anchor="middle" fill="#444" font-family='"Liberation Sans", sans-serif'>B</text>
<text x="697.28" y="246.4" font-size="3.5" text-anchor="middle" fill="#444" font-family='"Liberation Sans", sans-serif'>C</text>
<rect x="630.5" y="250.5" width="33.0" height="26.0" fill="#fff" stroke="#6a6a6a" stroke-width="0.8"/>
<text x="637.2800000000001" y="254.5" font-size="3.5" text-anchor="middle" fill="#444" font-family='"Liberation Sans", sans-serif'>A</text>
<text x="647.1500000000001" y="254.5" font-size="3.5" text-anchor="middle" fill="#444" font-family='"Liberation Sans", sans-serif'>B</text>
<text x="657.02" y="254.5" font-size="3.5" text-anchor="middle" fill="#444" font-family='"Liberation Sans", sans-serif'>C</text>
<text x="637.2800000000001" y="274.5" font-size="3.5" text-anchor="middle" fill="#444" font-family='"Liberation Sans", sans-serif'>a</text>
<text x="647.1500000000001" y="274.5" font-size="3.5" text-anchor="middle" fill="#444" font-family='"Liberation Sans", sans-serif'>b</text>
<text x="657.02" y="274.5" font-size="3.5" text-anchor="middle" fill="#444" font-family='"Liberation Sans", sans-serif'>c</text>
<path d="M639.7,261.5 q1.9,-3.5 3.75,0 q1.9,-3.5 3.75,0 q1.9,-3.5 3.75,0 q1.9,-3.5 3.75,0" fill="none" stroke="#111" stroke-width="0.8"/>
<path d="M639.7,264.5 q1.9,3.5 3.75,0 q1.9,3.5 3.75,0 q1.9,3.5 3.75,0 q1.9,3.5 3.75,0" fill="none" stroke="#111" stroke-width="0.8"/>
<line x1="639.1500000000001" y1="263.0" x2="655.1500000000001" y2="263.0" stroke="#111" stroke-width="0.5"/>
<line x1="647.1500000000001" y1="257.5" x2="647.1500000000001" y2="268.5" stroke="#111" stroke-width="0.6"/>
<rect x="586.5" y="250.5" width="18.0" height="27.0" fill="#00ab00" stroke="#2a8a2a" stroke-width="0.8"/>
<rect x="590.1" y="254.4" width="11.6" height="11.1" rx="1.8" fill="none" stroke="#222" stroke-width="0.7"/>
<text x="585" y="264" font-size="4.6" text-anchor="end" fill="#666" font-family='"Liberation Sans", sans-serif'>Bus 3</text>
<rect x="621.2" y="320.3" width="51.0" height="4.1" fill="#000"/>
<path d="M635.0200000000001,324.4 L637.5200000000001,326.9 L640.0200000000001,324.4" fill="none" stroke="#333" stroke-width="0.6"/>
<text x="617" y="323.5" font-size="4.5" text-anchor="end" fill="#666" font-family='"Liberation Sans", sans-serif'>Bus 3</text>
<rect x="722.5" y="243.5" width="19.0" height="28.0" fill="#00ab00" stroke="#2a8a2a" stroke-width="0.8"/>
<rect x="726.1" y="247.7" width="11.9" height="11.4" rx="1.8" fill="none" stroke="#222" stroke-width="0.7"/>
<text x="721" y="258" font-size="4.6" text-anchor="end" fill="#666" font-family='"Liberation Sans", sans-serif'>Bus 4</text>
<rect x="765.5" y="241.5" width="24.0" height="34.0" fill="#fff" stroke="#555" stroke-width="0.8"/>
<line x1="774.7" y1="244.8" x2="779.7" y2="244.8" stroke="#111" stroke-width="0.8"/>
<line x1="775.7" y1="246.5" x2="778.7" y2="246.5" stroke="#111" stroke-width="0.8"/>
<polyline points="777.2,246.54500000000002 777.2,248.946" fill="none" stroke="#111" stroke-width="0.6"/>
<line x1="774.8000000000001" y1="248.9" x2="779.6" y2="248.9" stroke="#111" stroke-width="0.85"/>
<line x1="774.8000000000001" y1="250.7" x2="779.6" y2="250.7" stroke="#111" stroke-width="0.85"/>
<line x1="774.8000000000001" y1="252.4" x2="779.6" y2="252.4" stroke="#111" stroke-width="0.85"/>
<line x1="774.8000000000001" y1="254.1" x2="779.6" y2="254.1" stroke="#111" stroke-width="0.85"/>
<line x1="774.8000000000001" y1="255.8" x2="779.6" y2="255.8" stroke="#111" stroke-width="0.85"/>
<line x1="774.8000000000001" y1="248.9" x2="774.8000000000001" y2="255.8" stroke="#111" stroke-width="0.7"/>
<polyline points="777.2,255.80599999999998 777.2,258.55" fill="none" stroke="#111" stroke-width="0.6"/>
<polyline points="777.2,258.55 779.2,259.3046 775.2,260.8138 779.2,262.323 775.2,263.8322 779.2,265.3414 777.2,266.096" fill="none" stroke="#111" stroke-width="0.8"/>
<text x="769.88" y="273.7" font-size="3.5" text-anchor="middle" fill="#444" font-family='"Liberation Sans", sans-serif'>A</text>
<text x="777.2" y="273.7" font-size="3.5" text-anchor="middle" fill="#444" font-family='"Liberation Sans", sans-serif'>B</text>
<text x="784.52" y="273.7" font-size="3.5" text-anchor="middle" fill="#444" font-family='"Liberation Sans", sans-serif'>C</text>
<rect x="751.3" y="320.3" width="51.7" height="4.1" fill="#000"/>
<path d="M765.3439999999999,324.4 L767.8439999999999,326.9 L770.3439999999999,324.4" fill="none" stroke="#333" stroke-width="0.6"/>
<text x="747" y="323.5" font-size="4.5" text-anchor="end" fill="#666" font-family='"Liberation Sans", sans-serif'>Bus 4</text>
<rect x="821.5" y="241.5" width="18.0" height="28.0" fill="#00ab00" stroke="#2a8a2a" stroke-width="0.8"/>
<rect x="824.5" y="245.9" width="11.9" height="11.4" rx="1.8" fill="none" stroke="#222" stroke-width="0.7"/>
<text x="819" y="256" font-size="4.6" text-anchor="end" fill="#666" font-family='"Liberation Sans", sans-serif'>Bus 5</text>
<rect x="861.5" y="236.5" width="24.0" height="35.0" fill="#fff" stroke="#555" stroke-width="0.8"/>
<line x1="870.7" y1="240.4" x2="875.7" y2="240.4" stroke="#111" stroke-width="0.8"/>
<line x1="871.7" y1="242.1" x2="874.7" y2="242.1" stroke="#111" stroke-width="0.8"/>
<polyline points="873.2,242.10500000000002 873.2,244.53400000000002" fill="none" stroke="#111" stroke-width="0.6"/>
<line x1="870.8000000000001" y1="244.5" x2="875.6" y2="244.5" stroke="#111" stroke-width="0.85"/>
<line x1="870.8000000000001" y1="246.3" x2="875.6" y2="246.3" stroke="#111" stroke-width="0.85"/>
<line x1="870.8000000000001" y1="248.0" x2="875.6" y2="248.0" stroke="#111" stroke-width="0.85"/>
<line x1="870.8000000000001" y1="249.7" x2="875.6" y2="249.7" stroke="#111" stroke-width="0.85"/>
<line x1="870.8000000000001" y1="251.5" x2="875.6" y2="251.5" stroke="#111" stroke-width="0.85"/>
<line x1="870.8000000000001" y1="244.5" x2="870.8000000000001" y2="251.5" stroke="#111" stroke-width="0.7"/>
<polyline points="873.2,251.47400000000002 873.2,254.25" fill="none" stroke="#111" stroke-width="0.6"/>
<polyline points="873.2,254.25 875.2,255.0134 871.2,256.5402 875.2,258.067 871.2,259.5938 875.2,261.1206 873.2,261.884" fill="none" stroke="#111" stroke-width="0.8"/>
<text x="866.06" y="269.6" font-size="3.5" text-anchor="middle" fill="#444" font-family='"Liberation Sans", sans-serif'>A</text>
<text x="873.2" y="269.6" font-size="3.5" text-anchor="middle" fill="#444" font-family='"Liberation Sans", sans-serif'>B</text>
<text x="880.34" y="269.6" font-size="3.5" text-anchor="middle" fill="#444" font-family='"Liberation Sans", sans-serif'>C</text>
<rect x="847" y="320.3" width="51.7" height="4.1" fill="#000"/>
<path d="M861.044,324.4 L863.544,326.9 L866.044,324.4" fill="none" stroke="#333" stroke-width="0.6"/>
<text x="843" y="323.5" font-size="4.5" text-anchor="end" fill="#666" font-family='"Liberation Sans", sans-serif'>Bus 5</text>
<rect x="904.5" y="241.5" width="18.0" height="28.0" fill="#00ab00" stroke="#2a8a2a" stroke-width="0.8"/>
<rect x="907.7" y="245.9" width="11.6" height="11.4" rx="1.8" fill="none" stroke="#222" stroke-width="0.7"/>
<text x="902" y="256" font-size="4.6" text-anchor="end" fill="#666" font-family='"Liberation Sans", sans-serif'>Bus 6</text>
<rect x="950.5" y="175.5" width="25.0" height="45.0" fill="#fff" stroke="#555" stroke-width="0.8"/>
<line x1="960.2" y1="178.6" x2="965.2" y2="178.6" stroke="#111" stroke-width="0.8"/>
<polyline points="962.7,177.6 962.7,183.6" fill="none" stroke="#111" stroke-width="0.6"/>
<circle cx="962.7" cy="187.1" r="3.8" fill="none" stroke="#111" stroke-width="0.8"/>
<path d="M960.7,187.6 q1,-2 2,0 q1,2 2,0" fill="none" stroke="#111" stroke-width="0.6"/>
<polyline points="962.7,191.6 964.7,192.5 960.7,194.29999999999998 964.7,196.1 960.7,197.9 964.7,199.7 962.7,200.6" fill="none" stroke="#111" stroke-width="0.8"/>
<line x1="960.3000000000001" y1="202.6" x2="965.1" y2="202.6" stroke="#111" stroke-width="0.85"/>
<line x1="960.3000000000001" y1="205.1" x2="965.1" y2="205.1" stroke="#111" stroke-width="0.85"/>
<line x1="960.3000000000001" y1="207.6" x2="965.1" y2="207.6" stroke="#111" stroke-width="0.85"/>
<line x1="960.3000000000001" y1="210.1" x2="965.1" y2="210.1" stroke="#111" stroke-width="0.85"/>
<line x1="960.3000000000001" y1="212.6" x2="965.1" y2="212.6" stroke="#111" stroke-width="0.85"/>
<line x1="960.3000000000001" y1="202.6" x2="960.3000000000001" y2="212.6" stroke="#111" stroke-width="0.7"/>
<polyline points="962.7,212.6 962.7,216.4" fill="none" stroke="#111" stroke-width="0.6"/>
<text x="955.14" y="218.4" font-size="3.5" text-anchor="middle" fill="#444" font-family='"Liberation Sans", sans-serif'>A</text>
<text x="962.7" y="218.4" font-size="3.5" text-anchor="middle" fill="#444" font-family='"Liberation Sans", sans-serif'>B</text>
<text x="970.26" y="218.4" font-size="3.5" text-anchor="middle" fill="#444" font-family='"Liberation Sans", sans-serif'>C</text>
<text x="946" y="197" font-size="4.6" text-anchor="end" fill="#666" font-family='"Liberation Sans", sans-serif'>Synchronous</text>
<text x="946" y="202.5" font-size="4.6" text-anchor="end" fill="#666" font-family='"Liberation Sans", sans-serif'>Compensator</text>
<text x="1038" y="227" font-size="4.6" text-anchor="start" fill="#666" font-family='"Liberation Sans", sans-serif'>Fourteen Bus system</text>
<rect x="398.5" y="366.5" width="19.0" height="28.0" fill="#00ab00" stroke="#2a8a2a" stroke-width="0.8"/>
<rect x="402.1" y="371.0" width="11.9" height="11.2" rx="1.8" fill="none" stroke="#222" stroke-width="0.7"/>
<text x="419" y="381" font-size="4.6" text-anchor="start" fill="#666" font-family='"Liberation Sans", sans-serif'>Bus 1</text>
<rect x="480.5" y="356.5" width="37.0" height="21.0" fill="#58b4f0" stroke="#3a7fb8" stroke-width="0.8"/>
<polyline points="486.005,366.70000000000005 486.70841666666666,368.70000000000005 488.11525,364.70000000000005 489.52208333333334,368.70000000000005 490.9289166666667,364.70000000000005 492.33575,368.70000000000005 493.74258333333336,364.70000000000005 494.446,366.70000000000005" fill="none" stroke="#111" stroke-width="0.8"/>
<path d="M495.9,368.20000000000005 C495.3,363.50000000000006 498.3,363.50000000000006 497.7,368.20000000000005 C497.1,363.50000000000006 500.2,363.50000000000006 499.6,368.20000000000005 C499.0,363.50000000000006 502.0,363.50000000000006 501.4,368.20000000000005 C500.8,363.50000000000006 503.9,363.50000000000006 503.3,368.20000000000005" fill="none" stroke="#111" stroke-width="0.9"/>
<line x1="493.9" y1="368.20000000000005" x2="505.3" y2="368.20000000000005" stroke="#111" stroke-width="0.6"/>
<polyline points="503.254,366.70000000000005 508.02500000000003,366.70000000000005" fill="none" stroke="#111" stroke-width="0.8"/>
<line x1="508.4" y1="363.70000000000005" x2="508.4" y2="369.70000000000005" stroke="#111" stroke-width="0.9"/>
<line x1="510.2" y1="363.70000000000005" x2="510.2" y2="369.70000000000005" stroke="#111" stroke-width="0.9"/>
<text x="482.5" y="361.96000000000004" font-size="3.3" text-anchor="start" fill="#333" font-family='"Liberation Sans", sans-serif'>A</text>
<text x="515.7" y="361.96000000000004" font-size="3.3" text-anchor="end" fill="#333" font-family='"Liberation Sans", sans-serif'>a</text>
<path d="M478.5,359.2 L480.5,360.5 L478.5,361.8Z" fill="#222"/>
<path d="M517.2,359.2 L519.2,360.5 L517.2,361.8Z" fill="#222"/>
<text x="482.5" y="368.20000000000005" font-size="3.3" text-anchor="start" fill="#333" font-family='"Liberation Sans", sans-serif'>B</text>
<text x="515.7" y="368.20000000000005" font-size="3.3" text-anchor="end" fill="#333" font-family='"Liberation Sans", sans-serif'>b</text>
<path d="M478.5,365.4 L480.5,366.7 L478.5,368.0Z" fill="#222"/>
<path d="M517.2,365.4 L519.2,366.7 L517.2,368.0Z" fill="#222"/>
<text x="482.5" y="374.44" font-size="3.3" text-anchor="start" fill="#333" font-family='"Liberation Sans", sans-serif'>C</text>
<text x="515.7" y="374.44" font-size="3.3" text-anchor="end" fill="#333" font-family='"Liberation Sans", sans-serif'>c</text>
<path d="M478.5,371.6 L480.5,372.9 L478.5,374.2Z" fill="#222"/>
<path d="M517.2,371.6 L519.2,372.9 L517.2,374.2Z" fill="#222"/>
<rect x="585.5" y="356.5" width="36.0" height="21.0" fill="#58b4f0" stroke="#3a7fb8" stroke-width="0.8"/>
<polyline points="590.505,366.70000000000005 591.2084166666666,368.70000000000005 592.6152500000001,364.70000000000005 594.0220833333333,368.70000000000005 595.4289166666667,364.70000000000005 596.83575,368.70000000000005 598.2425833333334,364.70000000000005 598.946,366.70000000000005" fill="none" stroke="#111" stroke-width="0.8"/>
<path d="M600.4,368.20000000000005 C599.8,363.50000000000006 602.8,363.50000000000006 602.2,368.20000000000005 C601.6,363.50000000000006 604.7,363.50000000000006 604.1,368.20000000000005 C603.5,363.50000000000006 606.5,363.50000000000006 605.9,368.20000000000005 C605.3,363.50000000000006 608.4,363.50000000000006 607.8,368.20000000000005" fill="none" stroke="#111" stroke-width="0.9"/>
<line x1="598.4" y1="368.20000000000005" x2="609.8" y2="368.20000000000005" stroke="#111" stroke-width="0.6"/>
<polyline points="607.754,366.70000000000005 612.5250000000001,366.70000000000005" fill="none" stroke="#111" stroke-width="0.8"/>
<line x1="612.9" y1="363.70000000000005" x2="612.9" y2="369.70000000000005" stroke="#111" stroke-width="0.9"/>
<line x1="614.7" y1="363.70000000000005" x2="614.7" y2="369.70000000000005" stroke="#111" stroke-width="0.9"/>
<text x="587" y="361.96000000000004" font-size="3.3" text-anchor="start" fill="#333" font-family='"Liberation Sans", sans-serif'>A</text>
<text x="620.2" y="361.96000000000004" font-size="3.3" text-anchor="end" fill="#333" font-family='"Liberation Sans", sans-serif'>a</text>
<path d="M583,359.2 L585,360.5 L583,361.8Z" fill="#222"/>
<path d="M621.7,359.2 L623.7,360.5 L621.7,361.8Z" fill="#222"/>
<text x="587" y="368.20000000000005" font-size="3.3" text-anchor="start" fill="#333" font-family='"Liberation Sans", sans-serif'>B</text>
<text x="620.2" y="368.20000000000005" font-size="3.3" text-anchor="end" fill="#333" font-family='"Liberation Sans", sans-serif'>b</text>
<path d="M583,365.4 L585,366.7 L583,368.0Z" fill="#222"/>
<path d="M621.7,365.4 L623.7,366.7 L621.7,368.0Z" fill="#222"/>
<text x="587" y="374.44" font-size="3.3" text-anchor="start" fill="#333" font-family='"Liberation Sans", sans-serif'>C</text>
<text x="620.2" y="374.44" font-size="3.3" text-anchor="end" fill="#333" font-family='"Liberation Sans", sans-serif'>c</text>
<path d="M583,371.6 L585,372.9 L583,374.2Z" fill="#222"/>
<path d="M621.7,371.6 L623.7,372.9 L621.7,374.2Z" fill="#222"/>
<rect x="706.5" y="356.5" width="37.0" height="21.0" fill="#58b4f0" stroke="#3a7fb8" stroke-width="0.8"/>
<polyline points="711.8349999999999,366.70000000000005 712.54225,368.70000000000005 713.9567499999999,364.70000000000005 715.3712499999999,368.70000000000005 716.78575,364.70000000000005 718.20025,368.70000000000005 719.61475,364.70000000000005 720.322,366.70000000000005" fill="none" stroke="#111" stroke-width="0.8"/>
<path d="M721.8,368.20000000000005 C721.2,363.50000000000006 724.2,363.50000000000006 723.6,368.20000000000005 C723.0,363.50000000000006 726.1,363.50000000000006 725.5,368.20000000000005 C724.9,363.50000000000006 727.9,363.50000000000006 727.3,368.20000000000005 C726.7,363.50000000000006 729.8,363.50000000000006 729.2,368.20000000000005" fill="none" stroke="#111" stroke-width="0.9"/>
<line x1="719.8" y1="368.20000000000005" x2="731.2" y2="368.20000000000005" stroke="#111" stroke-width="0.6"/>
<polyline points="729.178,366.70000000000005 733.975,366.70000000000005" fill="none" stroke="#111" stroke-width="0.8"/>
<line x1="734.3" y1="363.70000000000005" x2="734.3" y2="369.70000000000005" stroke="#111" stroke-width="0.9"/>
<line x1="736.2" y1="363.70000000000005" x2="736.2" y2="369.70000000000005" stroke="#111" stroke-width="0.9"/>
<text x="708.3" y="361.96000000000004" font-size="3.3" text-anchor="start" fill="#333" font-family='"Liberation Sans", sans-serif'>A</text>
<text x="741.7" y="361.96000000000004" font-size="3.3" text-anchor="end" fill="#333" font-family='"Liberation Sans", sans-serif'>a</text>
<path d="M704.3,359.2 L706.3,360.5 L704.3,361.8Z" fill="#222"/>
<path d="M743.2,359.2 L745.2,360.5 L743.2,361.8Z" fill="#222"/>
<text x="708.3" y="368.20000000000005" font-size="3.3" text-anchor="start" fill="#333" font-family='"Liberation Sans", sans-serif'>B</text>
<text x="741.7" y="368.20000000000005" font-size="3.3" text-anchor="end" fill="#333" font-family='"Liberation Sans", sans-serif'>b</text>
<path d="M704.3,365.4 L706.3,366.7 L704.3,368.0Z" fill="#222"/>
<path d="M743.2,365.4 L745.2,366.7 L743.2,368.0Z" fill="#222"/>
<text x="708.3" y="374.44" font-size="3.3" text-anchor="start" fill="#333" font-family='"Liberation Sans", sans-serif'>C</text>
<text x="741.7" y="374.44" font-size="3.3" text-anchor="end" fill="#333" font-family='"Liberation Sans", sans-serif'>c</text>
<path d="M704.3,371.6 L706.3,372.9 L704.3,374.2Z" fill="#222"/>
<path d="M743.2,371.6 L745.2,372.9 L743.2,374.2Z" fill="#222"/>
<rect x="813.5" y="356.5" width="37.0" height="21.0" fill="#58b4f0" stroke="#3a7fb8" stroke-width="0.8"/>
<polyline points="818.55,366.70000000000005 819.2591666666666,368.70000000000005 820.6775,364.70000000000005 822.0958333333333,368.70000000000005 823.5141666666666,364.70000000000005 824.9324999999999,368.70000000000005 826.3508333333333,364.70000000000005 827.06,366.70000000000005" fill="none" stroke="#111" stroke-width="0.8"/>
<path d="M828.5,368.20000000000005 C827.9,363.50000000000006 831.0,363.50000000000006 830.4,368.20000000000005 C829.8,363.50000000000006 832.8,363.50000000000006 832.2,368.20000000000005 C831.6,363.50000000000006 834.7,363.50000000000006 834.1,368.20000000000005 C833.5,363.50000000000006 836.5,363.50000000000006 835.9,368.20000000000005" fill="none" stroke="#111" stroke-width="0.9"/>
<line x1="826.5" y1="368.20000000000005" x2="837.9" y2="368.20000000000005" stroke="#111" stroke-width="0.6"/>
<polyline points="835.94,366.70000000000005 840.75,366.70000000000005" fill="none" stroke="#111" stroke-width="0.8"/>
<line x1="841.1" y1="363.70000000000005" x2="841.1" y2="369.70000000000005" stroke="#111" stroke-width="0.9"/>
<line x1="843.0" y1="363.70000000000005" x2="843.0" y2="369.70000000000005" stroke="#111" stroke-width="0.9"/>
<text x="815" y="361.96000000000004" font-size="3.3" text-anchor="start" fill="#333" font-family='"Liberation Sans", sans-serif'>A</text>
<text x="848.5" y="361.96000000000004" font-size="3.3" text-anchor="end" fill="#333" font-family='"Liberation Sans", sans-serif'>a</text>
<path d="M811,359.2 L813,360.5 L811,361.8Z" fill="#222"/>
<path d="M850,359.2 L852,360.5 L850,361.8Z" fill="#222"/>
<text x="815" y="368.20000000000005" font-size="3.3" text-anchor="start" fill="#333" font-family='"Liberation Sans", sans-serif'>B</text>
<text x="848.5" y="368.20000000000005" font-size="3.3" text-anchor="end" fill="#333" font-family='"Liberation Sans", sans-serif'>b</text>
<path d="M811,365.4 L813,366.7 L811,368.0Z" fill="#222"/>
<path d="M850,365.4 L852,366.7 L850,368.0Z" fill="#222"/>
<text x="815" y="374.44" font-size="3.3" text-anchor="start" fill="#333" font-family='"Liberation Sans", sans-serif'>C</text>
<text x="848.5" y="374.44" font-size="3.3" text-anchor="end" fill="#333" font-family='"Liberation Sans", sans-serif'>c</text>
<path d="M811,371.6 L813,372.9 L811,374.2Z" fill="#222"/>
<path d="M850,371.6 L852,372.9 L850,374.2Z" fill="#222"/>
<rect x="909.5" y="356.5" width="36.0" height="21.0" fill="#58b4f0" stroke="#3a7fb8" stroke-width="0.8"/>
<polyline points="914.4,366.70000000000005 915.0899999999999,368.70000000000005 916.47,364.70000000000005 917.8499999999999,368.70000000000005 919.23,364.70000000000005 920.6099999999999,368.70000000000005 921.99,364.70000000000005 922.68,366.70000000000005" fill="none" stroke="#111" stroke-width="0.8"/>
<path d="M924.1,368.20000000000005 C923.5,363.50000000000006 926.5,363.50000000000006 925.9,368.20000000000005 C925.3,363.50000000000006 928.3,363.50000000000006 927.7,368.20000000000005 C927.1,363.50000000000006 930.1,363.50000000000006 929.5,368.20000000000005 C928.9,363.50000000000006 931.9,363.50000000000006 931.3,368.20000000000005" fill="none" stroke="#111" stroke-width="0.9"/>
<line x1="922.1" y1="368.20000000000005" x2="933.3" y2="368.20000000000005" stroke="#111" stroke-width="0.6"/>
<polyline points="931.32,366.70000000000005 936.0,366.70000000000005" fill="none" stroke="#111" stroke-width="0.8"/>
<line x1="936.4" y1="363.70000000000005" x2="936.4" y2="369.70000000000005" stroke="#111" stroke-width="0.9"/>
<line x1="938.2" y1="363.70000000000005" x2="938.2" y2="369.70000000000005" stroke="#111" stroke-width="0.9"/>
<text x="911" y="361.96000000000004" font-size="3.3" text-anchor="start" fill="#333" font-family='"Liberation Sans", sans-serif'>A</text>
<text x="943.5" y="361.96000000000004" font-size="3.3" text-anchor="end" fill="#333" font-family='"Liberation Sans", sans-serif'>a</text>
<path d="M907,359.2 L909,360.5 L907,361.8Z" fill="#222"/>
<path d="M945,359.2 L947,360.5 L945,361.8Z" fill="#222"/>
<text x="911" y="368.20000000000005" font-size="3.3" text-anchor="start" fill="#333" font-family='"Liberation Sans", sans-serif'>B</text>
<text x="943.5" y="368.20000000000005" font-size="3.3" text-anchor="end" fill="#333" font-family='"Liberation Sans", sans-serif'>b</text>
<path d="M907,365.4 L909,366.7 L907,368.0Z" fill="#222"/>
<path d="M945,365.4 L947,366.7 L945,368.0Z" fill="#222"/>
<text x="911" y="374.44" font-size="3.3" text-anchor="start" fill="#333" font-family='"Liberation Sans", sans-serif'>C</text>
<text x="943.5" y="374.44" font-size="3.3" text-anchor="end" fill="#333" font-family='"Liberation Sans", sans-serif'>c</text>
<path d="M907,371.6 L909,372.9 L907,374.2Z" fill="#222"/>
<path d="M945,371.6 L947,372.9 L945,374.2Z" fill="#222"/>
<rect x="623.5" y="388.5" width="36.0" height="21.0" fill="#58b4f0" stroke="#3a7fb8" stroke-width="0.8"/>
<polyline points="628.9449999999999,398.55 629.6407499999999,400.55 631.03225,396.55 632.4237499999999,400.55 633.81525,396.55 635.2067499999999,400.55 636.59825,396.55 637.294,398.55" fill="none" stroke="#111" stroke-width="0.8"/>
<path d="M638.7,400.05 C638.1,395.35 641.2,395.35 640.6,400.05 C640.0,395.35 643.0,395.35 642.4,400.05 C641.8,395.35 644.8,395.35 644.2,400.05 C643.6,395.35 646.6,395.35 646.0,400.05" fill="none" stroke="#111" stroke-width="0.9"/>
<line x1="636.7" y1="400.05" x2="648.0" y2="400.05" stroke="#111" stroke-width="0.6"/>
<polyline points="646.006,398.55 650.7249999999999,398.55" fill="none" stroke="#111" stroke-width="0.8"/>
<line x1="651.1" y1="395.55" x2="651.1" y2="401.55" stroke="#111" stroke-width="0.9"/>
<line x1="652.9" y1="395.55" x2="652.9" y2="401.55" stroke="#111" stroke-width="0.9"/>
<text x="625.5" y="393.72" font-size="3.3" text-anchor="start" fill="#333" font-family='"Liberation Sans", sans-serif'>A</text>
<text x="658.3" y="393.72" font-size="3.3" text-anchor="end" fill="#333" font-family='"Liberation Sans", sans-serif'>a</text>
<path d="M621.5,390.9 L623.5,392.2 L621.5,393.5Z" fill="#222"/>
<path d="M659.8,390.9 L661.8,392.2 L659.8,393.5Z" fill="#222"/>
<text x="625.5" y="400.05" font-size="3.3" text-anchor="start" fill="#333" font-family='"Liberation Sans", sans-serif'>B</text>
<text x="658.3" y="400.05" font-size="3.3" text-anchor="end" fill="#333" font-family='"Liberation Sans", sans-serif'>b</text>
<path d="M621.5,397.2 L623.5,398.6 L621.5,399.9Z" fill="#222"/>
<path d="M659.8,397.2 L661.8,398.6 L659.8,399.9Z" fill="#222"/>
<text x="625.5" y="406.38" font-size="3.3" text-anchor="start" fill="#333" font-family='"Liberation Sans", sans-serif'>C</text>
<text x="658.3" y="406.38" font-size="3.3" text-anchor="end" fill="#333" font-family='"Liberation Sans", sans-serif'>c</text>
<path d="M621.5,403.6 L623.5,404.9 L621.5,406.2Z" fill="#222"/>
<path d="M659.8,403.6 L661.8,404.9 L659.8,406.2Z" fill="#222"/>
<rect x="570.5" y="413.5" width="36.0" height="21.0" fill="#58b4f0" stroke="#3a7fb8" stroke-width="0.8"/>
<polyline points="575.645,424.1 576.34075,426.1 577.73225,422.1 579.12375,426.1 580.51525,422.1 581.90675,426.1 583.29825,422.1 583.994,424.1" fill="none" stroke="#111" stroke-width="0.8"/>
<path d="M585.4,425.6 C584.8,420.90000000000003 587.9,420.90000000000003 587.3,425.6 C586.7,420.90000000000003 589.7,420.90000000000003 589.1,425.6 C588.5,420.90000000000003 591.5,420.90000000000003 590.9,425.6 C590.3,420.90000000000003 593.3,420.90000000000003 592.7,425.6" fill="none" stroke="#111" stroke-width="0.9"/>
<line x1="583.4" y1="425.6" x2="594.7" y2="425.6" stroke="#111" stroke-width="0.6"/>
<polyline points="592.706,424.1 597.425,424.1" fill="none" stroke="#111" stroke-width="0.8"/>
<line x1="597.8" y1="421.1" x2="597.8" y2="427.1" stroke="#111" stroke-width="0.9"/>
<line x1="599.6" y1="421.1" x2="599.6" y2="427.1" stroke="#111" stroke-width="0.9"/>
<text x="572.2" y="419.36" font-size="3.3" text-anchor="start" fill="#333" font-family='"Liberation Sans", sans-serif'>A</text>
<text x="605.0" y="419.36" font-size="3.3" text-anchor="end" fill="#333" font-family='"Liberation Sans", sans-serif'>a</text>
<path d="M568.2,416.6 L570.2,417.9 L568.2,419.2Z" fill="#222"/>
<path d="M606.5,416.6 L608.5,417.9 L606.5,419.2Z" fill="#222"/>
<text x="572.2" y="425.6" font-size="3.3" text-anchor="start" fill="#333" font-family='"Liberation Sans", sans-serif'>B</text>
<text x="605.0" y="425.6" font-size="3.3" text-anchor="end" fill="#333" font-family='"Liberation Sans", sans-serif'>b</text>
<path d="M568.2,422.8 L570.2,424.1 L568.2,425.4Z" fill="#222"/>
<path d="M606.5,422.8 L608.5,424.1 L606.5,425.4Z" fill="#222"/>
<text x="572.2" y="431.84" font-size="3.3" text-anchor="start" fill="#333" font-family='"Liberation Sans", sans-serif'>C</text>
<text x="605.0" y="431.84" font-size="3.3" text-anchor="end" fill="#333" font-family='"Liberation Sans", sans-serif'>c</text>
<path d="M568.2,429.0 L570.2,430.3 L568.2,431.6Z" fill="#222"/>
<path d="M606.5,429.0 L608.5,430.3 L606.5,431.6Z" fill="#222"/>
<rect x="676.5" y="439.5" width="36.0" height="20.0" fill="#58b4f0" stroke="#3a7fb8" stroke-width="0.8"/>
<polyline points="682.17,449.7 682.8561666666666,451.7 684.2284999999999,447.7 685.6008333333333,451.7 686.9731666666667,447.7 688.3455,451.7 689.7178333333334,447.7 690.404,449.7" fill="none" stroke="#111" stroke-width="0.8"/>
<path d="M691.8,451.2 C691.2,446.5 694.2,446.5 693.6,451.2 C693.0,446.5 696.0,446.5 695.4,451.2 C694.8,446.5 697.8,446.5 697.2,451.2 C696.6,446.5 699.6,446.5 699.0,451.2" fill="none" stroke="#111" stroke-width="0.9"/>
<line x1="689.8" y1="451.2" x2="701.0" y2="451.2" stroke="#111" stroke-width="0.6"/>
<polyline points="698.996,449.7 703.65,449.7" fill="none" stroke="#111" stroke-width="0.8"/>
<line x1="704.0" y1="446.7" x2="704.0" y2="452.7" stroke="#111" stroke-width="0.9"/>
<line x1="705.8" y1="446.7" x2="705.8" y2="452.7" stroke="#111" stroke-width="0.9"/>
<text x="678.8" y="445.08" font-size="3.3" text-anchor="start" fill="#333" font-family='"Liberation Sans", sans-serif'>A</text>
<text x="711.1" y="445.08" font-size="3.3" text-anchor="end" fill="#333" font-family='"Liberation Sans", sans-serif'>a</text>
<path d="M674.8,442.3 L676.8,443.6 L674.8,444.9Z" fill="#222"/>
<path d="M712.6,442.3 L714.6,443.6 L712.6,444.9Z" fill="#222"/>
<text x="678.8" y="451.2" font-size="3.3" text-anchor="start" fill="#333" font-family='"Liberation Sans", sans-serif'>B</text>
<text x="711.1" y="451.2" font-size="3.3" text-anchor="end" fill="#333" font-family='"Liberation Sans", sans-serif'>b</text>
<path d="M674.8,448.4 L676.8,449.7 L674.8,451.0Z" fill="#222"/>
<path d="M712.6,448.4 L714.6,449.7 L712.6,451.0Z" fill="#222"/>
<text x="678.8" y="457.32" font-size="3.3" text-anchor="start" fill="#333" font-family='"Liberation Sans", sans-serif'>C</text>
<text x="711.1" y="457.32" font-size="3.3" text-anchor="end" fill="#333" font-family='"Liberation Sans", sans-serif'>c</text>
<path d="M674.8,454.5 L676.8,455.8 L674.8,457.1Z" fill="#222"/>
<path d="M712.6,454.5 L714.6,455.8 L712.6,457.1Z" fill="#222"/>
<rect x="811.5" y="464.5" width="36.0" height="20.0" fill="#58b4f0" stroke="#3a7fb8" stroke-width="0.8"/>
<path d="M822.3,475.95 C821.7,471.25 826.5,471.25 825.9,475.95 C825.3,471.25 830.1,471.25 829.5,475.95 C828.9,471.25 833.8,471.25 833.2,475.95 C832.6,471.25 837.4,471.25 836.8,475.95" fill="none" stroke="#111" stroke-width="0.9"/>
<line x1="820.3" y1="475.95" x2="838.8" y2="475.95" stroke="#111" stroke-width="0.6"/>
<text x="813.4" y="469.68" font-size="3.3" text-anchor="start" fill="#333" font-family='"Liberation Sans", sans-serif'>A</text>
<text x="846.2" y="469.68" font-size="3.3" text-anchor="end" fill="#333" font-family='"Liberation Sans", sans-serif'>a</text>
<path d="M809.4,466.9 L811.4,468.2 L809.4,469.5Z" fill="#222"/>
<path d="M847.7,466.9 L849.7,468.2 L847.7,469.5Z" fill="#222"/>
<text x="813.4" y="475.95" font-size="3.3" text-anchor="start" fill="#333" font-family='"Liberation Sans", sans-serif'>B</text>
<text x="846.2" y="475.95" font-size="3.3" text-anchor="end" fill="#333" font-family='"Liberation Sans", sans-serif'>b</text>
<path d="M809.4,473.1 L811.4,474.4 L809.4,475.8Z" fill="#222"/>
<path d="M847.7,473.1 L849.7,474.4 L847.7,475.8Z" fill="#222"/>
<text x="813.4" y="482.21999999999997" font-size="3.3" text-anchor="start" fill="#333" font-family='"Liberation Sans", sans-serif'>C</text>
<text x="846.2" y="482.21999999999997" font-size="3.3" text-anchor="end" fill="#333" font-family='"Liberation Sans", sans-serif'>c</text>
<path d="M809.4,479.4 L811.4,480.7 L809.4,482.0Z" fill="#222"/>
<path d="M847.7,479.4 L849.7,480.7 L847.7,482.0Z" fill="#222"/>
<rect x="585.5" y="462.5" width="30.0" height="20.0" fill="#fff" stroke="#666" stroke-width="0.8"/>
<path d="M594.2,474.0 C593.6,469.3 597.8,469.3 597.2,474.0 C596.6,469.3 600.9,469.3 600.3,474.0 C599.7,469.3 604.0,469.3 603.4,474.0 C602.8,469.3 607.0,469.3 606.4,474.0" fill="none" stroke="#111" stroke-width="0.9"/>
<line x1="592.2" y1="474.0" x2="608.4" y2="474.0" stroke="#111" stroke-width="0.6"/>
<text x="587" y="468.24" font-size="3.3" text-anchor="start" fill="#333" font-family='"Liberation Sans", sans-serif'>A</text>
<text x="614.1" y="468.24" font-size="3.3" text-anchor="end" fill="#333" font-family='"Liberation Sans", sans-serif'>a</text>
<path d="M583,465.4 L585,466.7 L583,468.0Z" fill="#222"/>
<path d="M615.6,465.4 L617.6,466.7 L615.6,468.0Z" fill="#222"/>
<text x="587" y="474.0" font-size="3.3" text-anchor="start" fill="#333" font-family='"Liberation Sans", sans-serif'>B</text>
<text x="614.1" y="474.0" font-size="3.3" text-anchor="end" fill="#333" font-family='"Liberation Sans", sans-serif'>b</text>
<path d="M583,471.2 L585,472.5 L583,473.8Z" fill="#222"/>
<path d="M615.6,471.2 L617.6,472.5 L615.6,473.8Z" fill="#222"/>
<text x="587" y="479.76" font-size="3.3" text-anchor="start" fill="#333" font-family='"Liberation Sans", sans-serif'>C</text>
<text x="614.1" y="479.76" font-size="3.3" text-anchor="end" fill="#333" font-family='"Liberation Sans", sans-serif'>c</text>
<path d="M583,477.0 L585,478.3 L583,479.6Z" fill="#222"/>
<path d="M615.6,477.0 L617.6,478.3 L615.6,479.6Z" fill="#222"/>
<rect x="680.5" y="486.5" width="30.0" height="20.0" fill="#fff" stroke="#666" stroke-width="0.8"/>
<path d="M689.4,497.70000000000005 C688.8,493.00000000000006 693.0,493.00000000000006 692.4,497.70000000000005 C691.8,493.00000000000006 696.1,493.00000000000006 695.5,497.70000000000005 C694.9,493.00000000000006 699.2,493.00000000000006 698.6,497.70000000000005 C698.0,493.00000000000006 702.2,493.00000000000006 701.6,497.70000000000005" fill="none" stroke="#111" stroke-width="0.9"/>
<line x1="687.4" y1="497.70000000000005" x2="703.6" y2="497.70000000000005" stroke="#111" stroke-width="0.6"/>
<text x="682.2" y="491.76" font-size="3.3" text-anchor="start" fill="#333" font-family='"Liberation Sans", sans-serif'>A</text>
<text x="709.3" y="491.76" font-size="3.3" text-anchor="end" fill="#333" font-family='"Liberation Sans", sans-serif'>a</text>
<path d="M678.2,489.0 L680.2,490.3 L678.2,491.6Z" fill="#222"/>
<path d="M710.8,489.0 L712.8,490.3 L710.8,491.6Z" fill="#222"/>
<text x="682.2" y="497.70000000000005" font-size="3.3" text-anchor="start" fill="#333" font-family='"Liberation Sans", sans-serif'>B</text>
<text x="709.3" y="497.70000000000005" font-size="3.3" text-anchor="end" fill="#333" font-family='"Liberation Sans", sans-serif'>b</text>
<path d="M678.2,494.9 L680.2,496.2 L678.2,497.5Z" fill="#222"/>
<path d="M710.8,494.9 L712.8,496.2 L710.8,497.5Z" fill="#222"/>
<text x="682.2" y="503.64000000000004" font-size="3.3" text-anchor="start" fill="#333" font-family='"Liberation Sans", sans-serif'>C</text>
<text x="709.3" y="503.64000000000004" font-size="3.3" text-anchor="end" fill="#333" font-family='"Liberation Sans", sans-serif'>c</text>
<path d="M678.2,500.8 L680.2,502.1 L678.2,503.4Z" fill="#222"/>
<path d="M710.8,500.8 L712.8,502.1 L710.8,503.4Z" fill="#222"/>
<rect x="384.5" y="447.5" width="28.0" height="17.0" fill="#f51c1c" stroke="#c22" stroke-width="0.8"/>
<circle cx="389" cy="460" r="2.5" fill="#f4b0b0"/>
<text x="391" y="457" font-size="3.2" text-anchor="start" fill="#7a2a8a" font-family='"Liberation Sans", sans-serif'>Simulation</text>
<text x="530" y="737.5" font-size="4.6" text-anchor="start" fill="#666" font-family='"Liberation Sans", sans-serif'>Bus 9</text>
<text x="398" y="469.5" font-size="4" text-anchor="middle" fill="#666" font-family='"Liberation Sans", sans-serif'>powergui</text>
<rect x="418.5" y="546.9" width="51.7" height="4.1" fill="#000"/>
<path d="M432.544,551 L435.044,553.5 L437.544,551" fill="none" stroke="#333" stroke-width="0.6"/>
<text x="414" y="550" font-size="4.5" text-anchor="end" fill="#666" font-family='"Liberation Sans", sans-serif'>Bus 8</text>
<rect x="397.5" y="614.5" width="18.0" height="28.0" fill="#00ab00" stroke="#2a8a2a" stroke-width="0.8"/>
<rect x="400.3" y="618.7" width="11.6" height="11.4" rx="1.8" fill="none" stroke="#222" stroke-width="0.7"/>
<text x="418" y="629" font-size="4.6" text-anchor="start" fill="#666" font-family='"Liberation Sans", sans-serif'>Bus 8</text>
<rect x="439.5" y="572.5" width="32.0" height="25.0" fill="#e9c34a" stroke="#6a6a6a" stroke-width="0.8"/>
<text x="445.76" y="577.0" font-size="3.5" text-anchor="middle" fill="#444" font-family='"Liberation Sans", sans-serif'>A</text>
<text x="455.29999999999995" y="577.0" font-size="3.5" text-anchor="middle" fill="#444" font-family='"Liberation Sans", sans-serif'>B</text>
<text x="464.84" y="577.0" font-size="3.5" text-anchor="middle" fill="#444" font-family='"Liberation Sans", sans-serif'>C</text>
<text x="445.76" y="596.0" font-size="3.5" text-anchor="middle" fill="#444" font-family='"Liberation Sans", sans-serif'>a</text>
<text x="455.29999999999995" y="596.0" font-size="3.5" text-anchor="middle" fill="#444" font-family='"Liberation Sans", sans-serif'>b</text>
<text x="464.84" y="596.0" font-size="3.5" text-anchor="middle" fill="#444" font-family='"Liberation Sans", sans-serif'>c</text>
<path d="M447.8,583.5 q1.9,-3.5 3.75,0 q1.9,-3.5 3.75,0 q1.9,-3.5 3.75,0 q1.9,-3.5 3.75,0" fill="none" stroke="#111" stroke-width="0.8"/>
<path d="M447.8,586.5 q1.9,3.5 3.75,0 q1.9,3.5 3.75,0 q1.9,3.5 3.75,0 q1.9,3.5 3.75,0" fill="none" stroke="#111" stroke-width="0.8"/>
<line x1="447.29999999999995" y1="585.0" x2="463.29999999999995" y2="585.0" stroke="#111" stroke-width="0.5"/>
<line x1="455.29999999999995" y1="579.5" x2="455.29999999999995" y2="590.5" stroke="#111" stroke-width="0.6"/>
<rect x="441.5" y="627.5" width="26.0" height="49.0" fill="#fff" stroke="#555" stroke-width="0.8"/>
<text x="446.92" y="632.2" font-size="3.5" text-anchor="middle" fill="#444" font-family='"Liberation Sans", sans-serif'>A</text>
<text x="454.75" y="632.2" font-size="3.5" text-anchor="middle" fill="#444" font-family='"Liberation Sans", sans-serif'>B</text>
<text x="462.58" y="632.2" font-size="3.5" text-anchor="middle" fill="#444" font-family='"Liberation Sans", sans-serif'>C</text>
<line x1="452.35" y1="636.2" x2="457.15" y2="636.2" stroke="#111" stroke-width="0.85"/>
<line x1="452.35" y1="638.0" x2="457.15" y2="638.0" stroke="#111" stroke-width="0.85"/>
<line x1="452.35" y1="639.7" x2="457.15" y2="639.7" stroke="#111" stroke-width="0.85"/>
<line x1="452.35" y1="641.5" x2="457.15" y2="641.5" stroke="#111" stroke-width="0.85"/>
<line x1="452.35" y1="643.2" x2="457.15" y2="643.2" stroke="#111" stroke-width="0.85"/>
<line x1="452.35" y1="636.2" x2="452.35" y2="643.2" stroke="#111" stroke-width="0.7"/>
<polyline points="454.75,646.2 456.75,647.1 452.75,648.9000000000001 456.75,650.7 452.75,652.5 456.75,654.3000000000001 454.75,655.2" fill="none" stroke="#111" stroke-width="0.8"/>
<circle cx="454.75" cy="663.2" r="4" fill="none" stroke="#111" stroke-width="0.8"/>
<path d="M452.75,663.7 q1,-2 2,0 q1,2 2,0" fill="none" stroke="#111" stroke-width="0.6"/>
<polyline points="454.75,667.2 454.75,673.3" fill="none" stroke="#111" stroke-width="0.6"/>
<line x1="452.25" y1="673.3" x2="457.25" y2="673.3" stroke="#111" stroke-width="0.8"/>
<text x="470" y="651" font-size="4.6" text-anchor="start" fill="#666" font-family='"Liberation Sans", sans-serif'>Synchronous</text>
<text x="470" y="656.5" font-size="4.6" text-anchor="start" fill="#666" font-family='"Liberation Sans", sans-serif'>Compensator</text>
<rect x="591.5" y="538.5" width="36.0" height="21.0" fill="#58b4f0" stroke="#3a7fb8" stroke-width="0.8"/>
<path d="M600.4,550.65 C599.8,545.9499999999999 603.2,545.9499999999999 602.6,550.65 C602.0,545.9499999999999 605.5,545.9499999999999 604.9,550.65 C604.3,545.9499999999999 607.8,545.9499999999999 607.2,550.65 C606.6,545.9499999999999 610.1,545.9499999999999 609.5,550.65" fill="none" stroke="#111" stroke-width="0.9"/>
<line x1="598.4" y1="550.65" x2="611.5" y2="550.65" stroke="#111" stroke-width="0.6"/>
<polyline points="611.265,549.15 611.96075,551.15 613.35225,547.15 614.74375,551.15 616.13525,547.15 617.52675,551.15 618.9182500000001,547.15 619.614,549.15" fill="none" stroke="#111" stroke-width="0.8"/>
<text x="593.3" y="544.26" font-size="3.3" text-anchor="start" fill="#333" font-family='"Liberation Sans", sans-serif'>A</text>
<text x="626.1" y="544.26" font-size="3.3" text-anchor="end" fill="#333" font-family='"Liberation Sans", sans-serif'>a</text>
<path d="M589.3,541.5 L591.3,542.8 L589.3,544.1Z" fill="#222"/>
<path d="M627.6,541.5 L629.6,542.8 L627.6,544.1Z" fill="#222"/>
<text x="593.3" y="550.65" font-size="3.3" text-anchor="start" fill="#333" font-family='"Liberation Sans", sans-serif'>B</text>
<text x="626.1" y="550.65" font-size="3.3" text-anchor="end" fill="#333" font-family='"Liberation Sans", sans-serif'>b</text>
<path d="M589.3,547.9 L591.3,549.1 L589.3,550.4Z" fill="#222"/>
<path d="M627.6,547.9 L629.6,549.1 L627.6,550.4Z" fill="#222"/>
<text x="593.3" y="557.04" font-size="3.3" text-anchor="start" fill="#333" font-family='"Liberation Sans", sans-serif'>C</text>
<text x="626.1" y="557.04" font-size="3.3" text-anchor="end" fill="#333" font-family='"Liberation Sans", sans-serif'>c</text>
<path d="M589.3,554.2 L591.3,555.5 L589.3,556.8Z" fill="#222"/>
<path d="M627.6,554.2 L629.6,555.5 L627.6,556.8Z" fill="#222"/>
<rect x="679.5" y="575.5" width="36.0" height="20.0" fill="#58b4f0" stroke="#3a7fb8" stroke-width="0.8"/>
<path d="M688.1,586.7 C687.5,582.0 690.9,582.0 690.3,586.7 C689.7,582.0 693.2,582.0 692.6,586.7 C692.0,582.0 695.5,582.0 694.9,586.7 C694.3,582.0 697.8,582.0 697.1,586.7" fill="none" stroke="#111" stroke-width="0.9"/>
<line x1="686.1" y1="586.7" x2="699.1" y2="586.7" stroke="#111" stroke-width="0.6"/>
<polyline points="698.9649999999999,585.2 699.6607499999999,587.2 701.05225,583.2 702.4437499999999,587.2 703.83525,583.2 705.2267499999999,587.2 706.61825,583.2 707.314,585.2" fill="none" stroke="#111" stroke-width="0.8"/>
<text x="681" y="580.7" font-size="3.3" text-anchor="start" fill="#333" font-family='"Liberation Sans", sans-serif'>A</text>
<text x="713.8" y="580.7" font-size="3.3" text-anchor="end" fill="#333" font-family='"Liberation Sans", sans-serif'>a</text>
<path d="M677,577.9 L679,579.2 L677,580.5Z" fill="#222"/>
<path d="M715.3,577.9 L717.3,579.2 L715.3,580.5Z" fill="#222"/>
<text x="681" y="586.7" font-size="3.3" text-anchor="start" fill="#333" font-family='"Liberation Sans", sans-serif'>B</text>
<text x="713.8" y="586.7" font-size="3.3" text-anchor="end" fill="#333" font-family='"Liberation Sans", sans-serif'>b</text>
<path d="M677,583.9 L679,585.2 L677,586.5Z" fill="#222"/>
<path d="M715.3,583.9 L717.3,585.2 L715.3,586.5Z" fill="#222"/>
<text x="681" y="592.7" font-size="3.3" text-anchor="start" fill="#333" font-family='"Liberation Sans", sans-serif'>C</text>
<text x="713.8" y="592.7" font-size="3.3" text-anchor="end" fill="#333" font-family='"Liberation Sans", sans-serif'>c</text>
<path d="M677,589.9 L679,591.2 L677,592.5Z" fill="#222"/>
<path d="M715.3,589.9 L717.3,591.2 L715.3,592.5Z" fill="#222"/>
<rect x="751.5" y="547.5" width="21.0" height="36.0" fill="#fff" stroke="#555" stroke-width="0.8"/>
<text x="756.02" y="552.6" font-size="3.5" text-anchor="middle" fill="#444" font-family='"Liberation Sans", sans-serif'>A</text>
<text x="762.3499999999999" y="552.6" font-size="3.5" text-anchor="middle" fill="#444" font-family='"Liberation Sans", sans-serif'>B</text>
<text x="768.68" y="552.6" font-size="3.5" text-anchor="middle" fill="#444" font-family='"Liberation Sans", sans-serif'>C</text>
<polyline points="762.3499999999999,554.72 764.3499999999999,555.61 760.3499999999999,557.39 764.3499999999999,559.1700000000001 760.3499999999999,560.95 764.3499999999999,562.73 762.3499999999999,563.62" fill="none" stroke="#111" stroke-width="0.8"/>
<polyline points="762.3499999999999,563.62 762.3499999999999,566.1120000000001" fill="none" stroke="#111" stroke-width="0.6"/>
<line x1="759.9499999999999" y1="566.1" x2="764.7499999999999" y2="566.1" stroke="#111" stroke-width="0.85"/>
<line x1="759.9499999999999" y1="568.1" x2="764.7499999999999" y2="568.1" stroke="#111" stroke-width="0.85"/>
<line x1="759.9499999999999" y1="570.0" x2="764.7499999999999" y2="570.0" stroke="#111" stroke-width="0.85"/>
<line x1="759.9499999999999" y1="572.0" x2="764.7499999999999" y2="572.0" stroke="#111" stroke-width="0.85"/>
<line x1="759.9499999999999" y1="573.9" x2="764.7499999999999" y2="573.9" stroke="#111" stroke-width="0.85"/>
<line x1="759.9499999999999" y1="566.1" x2="759.9499999999999" y2="573.9" stroke="#111" stroke-width="0.7"/>
<polyline points="762.3499999999999,573.9440000000001 762.3499999999999,576.792" fill="none" stroke="#111" stroke-width="0.6"/>
<line x1="759.8499999999999" y1="577.1" x2="764.8499999999999" y2="577.1" stroke="#111" stroke-width="0.8"/>
<line x1="760.8499999999999" y1="578.9" x2="763.8499999999999" y2="578.9" stroke="#111" stroke-width="0.8"/>
<rect x="521" y="676.3" width="51.6" height="4.5" fill="#000"/>
<path d="M535.0120000000001,680.8 L537.5120000000001,683.3 L540.0120000000001,680.8" fill="none" stroke="#333" stroke-width="0.6"/>
<text x="517" y="680" font-size="4.5" text-anchor="end" fill="#666" font-family='"Liberation Sans", sans-serif'>Bus 9</text>
<rect x="505.5" y="721" width="22.7" height="31.6" fill="#5ab0f0"/>
<rect x="508.5" y="723.5" width="18.0" height="27.0" fill="#00ab00" stroke="#2a8a2a" stroke-width="0.8"/>
<rect x="511.2" y="727.8" width="11.5" height="10.7" rx="1.8" fill="none" stroke="#222" stroke-width="0.7"/>
<rect x="541.5" y="702.5" width="32.0" height="40.0" fill="#fff" stroke="#555" stroke-width="0.8"/>
<text x="547.58" y="707.2" font-size="3.5" text-anchor="middle" fill="#444" font-family='"Liberation Sans", sans-serif'>A</text>
<text x="557.45" y="707.2" font-size="3.5" text-anchor="middle" fill="#444" font-family='"Liberation Sans", sans-serif'>B</text>
<text x="567.3199999999999" y="707.2" font-size="3.5" text-anchor="middle" fill="#444" font-family='"Liberation Sans", sans-serif'>C</text>
<polyline points="557.45,710.24 559.45,711.245 555.45,713.255 559.45,715.265 555.45,717.275 559.45,719.285 557.45,720.29" fill="none" stroke="#111" stroke-width="0.8"/>
<polyline points="557.45,720.29 557.45,723.104" fill="none" stroke="#111" stroke-width="0.6"/>
<line x1="555.0500000000001" y1="723.1" x2="559.85" y2="723.1" stroke="#111" stroke-width="0.85"/>
<line x1="555.0500000000001" y1="725.3" x2="559.85" y2="725.3" stroke="#111" stroke-width="0.85"/>
<line x1="555.0500000000001" y1="727.5" x2="559.85" y2="727.5" stroke="#111" stroke-width="0.85"/>
<line x1="555.0500000000001" y1="729.7" x2="559.85" y2="729.7" stroke="#111" stroke-width="0.85"/>
<line x1="555.0500000000001" y1="731.9" x2="559.85" y2="731.9" stroke="#111" stroke-width="0.85"/>
<line x1="555.0500000000001" y1="723.1" x2="555.0500000000001" y2="731.9" stroke="#111" stroke-width="0.7"/>
<polyline points="557.45,731.948 557.45,735.164" fill="none" stroke="#111" stroke-width="0.6"/>
<line x1="554.95" y1="735.6" x2="559.95" y2="735.6" stroke="#111" stroke-width="0.8"/>
<line x1="555.95" y1="737.6" x2="558.95" y2="737.6" stroke="#111" stroke-width="0.8"/>
<rect x="614.9" y="670" width="51.2" height="4.8" fill="#000"/>
<path d="M628.784,674.8 L631.284,677.3 L633.784,674.8" fill="none" stroke="#333" stroke-width="0.6"/>
<text x="610.5" y="674" font-size="4.5" text-anchor="end" fill="#666" font-family='"Liberation Sans", sans-serif'>Bus 10</text>
<rect x="594.5" y="708.5" width="19.0" height="27.0" fill="#fff" stroke="#777" stroke-width="0.8"/>
<rect x="598.1" y="712.6" width="12.1" height="11.0" rx="1.8" fill="none" stroke="#222" stroke-width="0.7"/>
<text x="615.5" y="722.5" font-size="4.6" text-anchor="start" fill="#666" font-family='"Liberation Sans", sans-serif'>Bus 10</text>
<rect x="634.5" y="699.5" width="33.0" height="40.0" fill="#fff" stroke="#555" stroke-width="0.8"/>
<text x="641.0" y="704.3" font-size="3.5" text-anchor="middle" fill="#444" font-family='"Liberation Sans", sans-serif'>A</text>
<text x="650.9" y="704.3" font-size="3.5" text-anchor="middle" fill="#444" font-family='"Liberation Sans", sans-serif'>B</text>
<text x="660.8" y="704.3" font-size="3.5" text-anchor="middle" fill="#444" font-family='"Liberation Sans", sans-serif'>C</text>
<polyline points="650.9,707.3199999999999 652.9,708.3225 648.9,710.3274999999999 652.9,712.3325 648.9,714.3374999999999 652.9,716.3425 650.9,717.3449999999999" fill="none" stroke="#111" stroke-width="0.8"/>
<polyline points="650.9,717.3449999999999 650.9,720.1519999999999" fill="none" stroke="#111" stroke-width="0.6"/>
<line x1="648.5" y1="720.2" x2="653.3" y2="720.2" stroke="#111" stroke-width="0.85"/>
<line x1="648.5" y1="722.4" x2="653.3" y2="722.4" stroke="#111" stroke-width="0.85"/>
<line x1="648.5" y1="724.6" x2="653.3" y2="724.6" stroke="#111" stroke-width="0.85"/>
<line x1="648.5" y1="726.8" x2="653.3" y2="726.8" stroke="#111" stroke-width="0.85"/>
<line x1="648.5" y1="729.0" x2="653.3" y2="729.0" stroke="#111" stroke-width="0.85"/>
<line x1="648.5" y1="720.2" x2="648.5" y2="729.0" stroke="#111" stroke-width="0.7"/>
<polyline points="650.9,728.9739999999999 650.9,732.182" fill="none" stroke="#111" stroke-width="0.6"/>
<line x1="648.4" y1="732.6" x2="653.4" y2="732.6" stroke="#111" stroke-width="0.8"/>
<line x1="649.4" y1="734.6" x2="652.4" y2="734.6" stroke="#111" stroke-width="0.8"/>
<rect x="712.8" y="670" width="51.9" height="4.8" fill="#000"/>
<path d="M726.908,674.8 L729.408,677.3 L731.908,674.8" fill="none" stroke="#333" stroke-width="0.6"/>
<text x="708.5" y="674" font-size="4.5" text-anchor="end" fill="#666" font-family='"Liberation Sans", sans-serif'>Bus 11</text>
<rect x="702.5" y="706.5" width="17.0" height="27.0" fill="#00ab00" stroke="#2a8a2a" stroke-width="0.8"/>
<rect x="705.2" y="710.4" width="11.5" height="11.1" rx="1.8" fill="none" stroke="#222" stroke-width="0.7"/>
<text x="722" y="720.5" font-size="4.6" text-anchor="start" fill="#666" font-family='"Liberation Sans", sans-serif'>Bus 11</text>
<rect x="733.5" y="693.5" width="33.0" height="42.0" fill="#fff" stroke="#555" stroke-width="0.8"/>
<text x="739.76" y="698.3" font-size="3.5" text-anchor="middle" fill="#444" font-family='"Liberation Sans", sans-serif'>A</text>
<text x="749.6" y="698.3" font-size="3.5" text-anchor="middle" fill="#444" font-family='"Liberation Sans", sans-serif'>B</text>
<text x="759.44" y="698.3" font-size="3.5" text-anchor="middle" fill="#444" font-family='"Liberation Sans", sans-serif'>C</text>
<polyline points="749.6,701.76 751.6,702.8175 747.6,704.9325 751.6,707.0475 747.6,709.1625 751.6,711.2775 749.6,712.335" fill="none" stroke="#111" stroke-width="0.8"/>
<polyline points="749.6,712.335 749.6,715.296" fill="none" stroke="#111" stroke-width="0.6"/>
<line x1="747.2" y1="715.3" x2="752.0" y2="715.3" stroke="#111" stroke-width="0.85"/>
<line x1="747.2" y1="717.6" x2="752.0" y2="717.6" stroke="#111" stroke-width="0.85"/>
<line x1="747.2" y1="719.9" x2="752.0" y2="719.9" stroke="#111" stroke-width="0.85"/>
<line x1="747.2" y1="722.3" x2="752.0" y2="722.3" stroke="#111" stroke-width="0.85"/>
<line x1="747.2" y1="724.6" x2="752.0" y2="724.6" stroke="#111" stroke-width="0.85"/>
<line x1="747.2" y1="715.3" x2="747.2" y2="724.6" stroke="#111" stroke-width="0.7"/>
<polyline points="749.6,724.602 749.6,727.986" fill="none" stroke="#111" stroke-width="0.6"/>
<line x1="747.1" y1="728.4" x2="752.1" y2="728.4" stroke="#111" stroke-width="0.8"/>
<line x1="748.1" y1="730.5" x2="751.1" y2="730.5" stroke="#111" stroke-width="0.8"/>
<rect x="789.5" y="640.5" width="32.0" height="21.0" fill="#fff" stroke="#666" stroke-width="0.8"/>
<path d="M797.5,652.3 C796.9,647.5999999999999 800.2,647.5999999999999 799.6,652.3 C799.0,647.5999999999999 802.2,647.5999999999999 801.6,652.3 C801.0,647.5999999999999 804.2,647.5999999999999 803.6,652.3 C803.0,647.5999999999999 806.2,647.5999999999999 805.6,652.3" fill="none" stroke="#111" stroke-width="0.9"/>
<line x1="795.5" y1="652.3" x2="807.6" y2="652.3" stroke="#111" stroke-width="0.6"/>
<polyline points="807.275,650.8 807.8979166666667,652.8 809.14375,648.8 810.3895833333333,652.8 811.6354166666666,648.8 812.88125,652.8 814.1270833333333,648.8 814.75,650.8" fill="none" stroke="#111" stroke-width="0.8"/>
<text x="791.4" y="646.06" font-size="3.3" text-anchor="start" fill="#333" font-family='"Liberation Sans", sans-serif'>A</text>
<text x="820.4" y="646.06" font-size="3.3" text-anchor="end" fill="#333" font-family='"Liberation Sans", sans-serif'>a</text>
<path d="M787.4,643.3 L789.4,644.6 L787.4,645.9Z" fill="#222"/>
<path d="M821.9,643.3 L823.9,644.6 L821.9,645.9Z" fill="#222"/>
<text x="791.4" y="652.3" font-size="3.3" text-anchor="start" fill="#333" font-family='"Liberation Sans", sans-serif'>B</text>
<text x="820.4" y="652.3" font-size="3.3" text-anchor="end" fill="#333" font-family='"Liberation Sans", sans-serif'>b</text>
<path d="M787.4,649.5 L789.4,650.8 L787.4,652.1Z" fill="#222"/>
<path d="M821.9,649.5 L823.9,650.8 L821.9,652.1Z" fill="#222"/>
<text x="791.4" y="658.5400000000001" font-size="3.3" text-anchor="start" fill="#333" font-family='"Liberation Sans", sans-serif'>C</text>
<text x="820.4" y="658.5400000000001" font-size="3.3" text-anchor="end" fill="#333" font-family='"Liberation Sans", sans-serif'>c</text>
<path d="M787.4,655.7 L789.4,657.0 L787.4,658.3Z" fill="#222"/>
<path d="M821.9,655.7 L823.9,657.0 L821.9,658.3Z" fill="#222"/>
<rect x="896.5" y="653.5" width="30.0" height="20.0" fill="#fff" stroke="#666" stroke-width="0.8"/>
<path d="M903.7,665.2 C903.1,660.5 906.2,660.5 905.6,665.2 C905.0,660.5 908.1,660.5 907.5,665.2 C906.9,660.5 910.0,660.5 909.4,665.2 C908.8,660.5 911.9,660.5 911.2,665.2" fill="none" stroke="#111" stroke-width="0.9"/>
<line x1="901.7" y1="665.2" x2="913.2" y2="665.2" stroke="#111" stroke-width="0.6"/>
<polyline points="912.765,663.7 913.34575,665.7 914.50725,661.7 915.66875,665.7 916.83025,661.7 917.99175,665.7 919.1532500000001,661.7 919.734,663.7" fill="none" stroke="#111" stroke-width="0.8"/>
<text x="898.1" y="659.14" font-size="3.3" text-anchor="start" fill="#333" font-family='"Liberation Sans", sans-serif'>A</text>
<text x="924.9" y="659.14" font-size="3.3" text-anchor="end" fill="#333" font-family='"Liberation Sans", sans-serif'>a</text>
<path d="M894.1,656.3 L896.1,657.6 L894.1,658.9Z" fill="#222"/>
<path d="M926.4,656.3 L928.4,657.6 L926.4,658.9Z" fill="#222"/>
<text x="898.1" y="665.2" font-size="3.3" text-anchor="start" fill="#333" font-family='"Liberation Sans", sans-serif'>B</text>
<text x="924.9" y="665.2" font-size="3.3" text-anchor="end" fill="#333" font-family='"Liberation Sans", sans-serif'>b</text>
<path d="M894.1,662.4 L896.1,663.7 L894.1,665.0Z" fill="#222"/>
<path d="M926.4,662.4 L928.4,663.7 L926.4,665.0Z" fill="#222"/>
<text x="898.1" y="671.26" font-size="3.3" text-anchor="start" fill="#333" font-family='"Liberation Sans", sans-serif'>C</text>
<text x="924.9" y="671.26" font-size="3.3" text-anchor="end" fill="#333" font-family='"Liberation Sans", sans-serif'>c</text>
<path d="M894.1,668.5 L896.1,669.8 L894.1,671.1Z" fill="#222"/>
<path d="M926.4,668.5 L928.4,669.8 L926.4,671.1Z" fill="#222"/>
<rect x="836.7" y="693.7" width="51.3" height="4.1" fill="#000"/>
<path d="M850.616,697.8 L853.116,700.3 L855.616,697.8" fill="none" stroke="#333" stroke-width="0.6"/>
<text x="832.5" y="697" font-size="4.5" text-anchor="end" fill="#666" font-family='"Liberation Sans", sans-serif'>Bus 12</text>
<rect x="819.5" y="716.5" width="18.0" height="28.0" fill="#00ab00" stroke="#2a8a2a" stroke-width="0.8"/>
<rect x="822.4" y="721.3" width="11.6" height="11.1" rx="1.8" fill="none" stroke="#222" stroke-width="0.7"/>
<text x="840" y="731" font-size="4.6" text-anchor="start" fill="#666" font-family='"Liberation Sans", sans-serif'>Bus 12</text>
<rect x="856.5" y="710.5" width="33.0" height="40.0" fill="#fff" stroke="#555" stroke-width="0.8"/>
<text x="863.18" y="715.6" font-size="3.5" text-anchor="middle" fill="#444" font-family='"Liberation Sans", sans-serif'>A</text>
<text x="873.2" y="715.6" font-size="3.5" text-anchor="middle" fill="#444" font-family='"Liberation Sans", sans-serif'>B</text>
<text x="883.22" y="715.6" font-size="3.5" text-anchor="middle" fill="#444" font-family='"Liberation Sans", sans-serif'>C</text>
<polyline points="873.2,718.62 875.2,719.6225 871.2,721.6275 875.2,723.6324999999999 871.2,725.6375 875.2,727.6424999999999 873.2,728.645" fill="none" stroke="#111" stroke-width="0.8"/>
<polyline points="873.2,728.645 873.2,731.452" fill="none" stroke="#111" stroke-width="0.6"/>
<line x1="870.8000000000001" y1="731.5" x2="875.6" y2="731.5" stroke="#111" stroke-width="0.85"/>
<line x1="870.8000000000001" y1="733.7" x2="875.6" y2="733.7" stroke="#111" stroke-width="0.85"/>
<line x1="870.8000000000001" y1="735.9" x2="875.6" y2="735.9" stroke="#111" stroke-width="0.85"/>
<line x1="870.8000000000001" y1="738.1" x2="875.6" y2="738.1" stroke="#111" stroke-width="0.85"/>
<line x1="870.8000000000001" y1="740.3" x2="875.6" y2="740.3" stroke="#111" stroke-width="0.85"/>
<line x1="870.8000000000001" y1="731.5" x2="870.8000000000001" y2="740.3" stroke="#111" stroke-width="0.7"/>
<polyline points="873.2,740.274 873.2,743.4820000000001" fill="none" stroke="#111" stroke-width="0.6"/>
<line x1="870.7" y1="743.9" x2="875.7" y2="743.9" stroke="#111" stroke-width="0.8"/>
<line x1="871.7" y1="745.9" x2="874.7" y2="745.9" stroke="#111" stroke-width="0.8"/>
<rect x="947.7" y="693.5" width="51.1" height="4.9" fill="#000"/>
<path d="M961.552,698.4 L964.052,700.9 L966.552,698.4" fill="none" stroke="#333" stroke-width="0.6"/>
<text x="943.5" y="697" font-size="4.5" text-anchor="end" fill="#666" font-family='"Liberation Sans", sans-serif'>Bus 13</text>
<rect x="932.5" y="723.5" width="18.0" height="27.0" fill="#ff55d0" stroke="#b0309a" stroke-width="0.8"/>
<rect x="935.4" y="727.5" width="11.8" height="11.1" rx="1.8" fill="none" stroke="#222" stroke-width="0.7"/>
<text x="953" y="737" font-size="4.6" text-anchor="start" fill="#666" font-family='"Liberation Sans", sans-serif'>Bus 13</text>
<rect x="967.5" y="714.5" width="33.0" height="43.0" fill="#fff" stroke="#555" stroke-width="0.8"/>
<text x="973.78" y="719.7" font-size="3.5" text-anchor="middle" fill="#444" font-family='"Liberation Sans", sans-serif'>A</text>
<text x="983.95" y="719.7" font-size="3.5" text-anchor="middle" fill="#444" font-family='"Liberation Sans", sans-serif'>B</text>
<text x="994.12" y="719.7" font-size="3.5" text-anchor="middle" fill="#444" font-family='"Liberation Sans", sans-serif'>C</text>
<polyline points="983.95,723.1600000000001 985.95,724.2175000000001 981.95,726.3325000000001 985.95,728.4475 981.95,730.5625 985.95,732.6775 983.95,733.735" fill="none" stroke="#111" stroke-width="0.8"/>
<polyline points="983.95,733.735 983.95,736.696" fill="none" stroke="#111" stroke-width="0.6"/>
<line x1="981.5500000000001" y1="736.7" x2="986.35" y2="736.7" stroke="#111" stroke-width="0.85"/>
<line x1="981.5500000000001" y1="739.0" x2="986.35" y2="739.0" stroke="#111" stroke-width="0.85"/>
<line x1="981.5500000000001" y1="741.3" x2="986.35" y2="741.3" stroke="#111" stroke-width="0.85"/>
<line x1="981.5500000000001" y1="743.7" x2="986.35" y2="743.7" stroke="#111" stroke-width="0.85"/>
<line x1="981.5500000000001" y1="746.0" x2="986.35" y2="746.0" stroke="#111" stroke-width="0.85"/>
<line x1="981.5500000000001" y1="736.7" x2="981.5500000000001" y2="746.0" stroke="#111" stroke-width="0.7"/>
<polyline points="983.95,746.0020000000001 983.95,749.386" fill="none" stroke="#111" stroke-width="0.6"/>
<line x1="981.45" y1="749.8" x2="986.45" y2="749.8" stroke="#111" stroke-width="0.8"/>
<line x1="982.45" y1="751.9" x2="985.45" y2="751.9" stroke="#111" stroke-width="0.8"/>
<rect x="1016.5" y="653.5" width="30.0" height="20.0" fill="#fff" stroke="#666" stroke-width="0.8"/>
<path d="M1023.5,665.0 C1022.9,660.3 1026.0,660.3 1025.4,665.0 C1024.8,660.3 1027.8,660.3 1027.2,665.0 C1026.7,660.3 1029.7,660.3 1029.1,665.0 C1028.5,660.3 1031.6,660.3 1031.0,665.0" fill="none" stroke="#111" stroke-width="0.9"/>
<line x1="1021.5" y1="665.0" x2="1033.0" y2="665.0" stroke="#111" stroke-width="0.6"/>
<polyline points="1032.5,663.5 1033.075,665.5 1034.225,661.5 1035.375,665.5 1036.525,661.5 1037.6750000000002,665.5 1038.825,661.5 1039.4,663.5" fill="none" stroke="#111" stroke-width="0.8"/>
<text x="1018" y="658.88" font-size="3.3" text-anchor="start" fill="#333" font-family='"Liberation Sans", sans-serif'>A</text>
<text x="1044.5" y="658.88" font-size="3.3" text-anchor="end" fill="#333" font-family='"Liberation Sans", sans-serif'>a</text>
<path d="M1014,656.1 L1016,657.4 L1014,658.7Z" fill="#222"/>
<path d="M1046,656.1 L1048,657.4 L1046,658.7Z" fill="#222"/>
<text x="1018" y="665.0" font-size="3.3" text-anchor="start" fill="#333" font-family='"Liberation Sans", sans-serif'>B</text>
<text x="1044.5" y="665.0" font-size="3.3" text-anchor="end" fill="#333" font-family='"Liberation Sans", sans-serif'>b</text>
<path d="M1014,662.2 L1016,663.5 L1014,664.8Z" fill="#222"/>
<path d="M1046,662.2 L1048,663.5 L1046,664.8Z" fill="#222"/>
<text x="1018" y="671.12" font-size="3.3" text-anchor="start" fill="#333" font-family='"Liberation Sans", sans-serif'>C</text>
<text x="1044.5" y="671.12" font-size="3.3" text-anchor="end" fill="#333" font-family='"Liberation Sans", sans-serif'>c</text>
<path d="M1014,668.3 L1016,669.6 L1014,670.9Z" fill="#222"/>
<path d="M1046,668.3 L1048,669.6 L1046,670.9Z" fill="#222"/>
<rect x="1045.5" y="693.5" width="51.7" height="4.9" fill="#000"/>
<path d="M1059.544,698.4 L1062.044,700.9 L1064.544,698.4" fill="none" stroke="#333" stroke-width="0.6"/>
<text x="1041.5" y="697" font-size="4.5" text-anchor="end" fill="#666" font-family='"Liberation Sans", sans-serif'>Bus 14</text>
<rect x="1032.5" y="719.5" width="18.0" height="27.0" fill="#00ab00" stroke="#2a8a2a" stroke-width="0.8"/>
<rect x="1035.6" y="723.3" width="11.8" height="10.8" rx="1.8" fill="none" stroke="#222" stroke-width="0.7"/>
<text x="1053" y="733" font-size="4.6" text-anchor="start" fill="#666" font-family='"Liberation Sans", sans-serif'>Bus 14</text>
<rect x="1065.5" y="714.5" width="33.0" height="43.0" fill="#fff" stroke="#555" stroke-width="0.8"/>
<text x="1072.0" y="719.7" font-size="3.5" text-anchor="middle" fill="#444" font-family='"Liberation Sans", sans-serif'>A</text>
<text x="1081.9" y="719.7" font-size="3.5" text-anchor="middle" fill="#444" font-family='"Liberation Sans", sans-serif'>B</text>
<text x="1091.8000000000002" y="719.7" font-size="3.5" text-anchor="middle" fill="#444" font-family='"Liberation Sans", sans-serif'>C</text>
<polyline points="1081.9,723.1600000000001 1083.9,724.2175000000001 1079.9,726.3325000000001 1083.9,728.4475 1079.9,730.5625 1083.9,732.6775 1081.9,733.735" fill="none" stroke="#111" stroke-width="0.8"/>
<polyline points="1081.9,733.735 1081.9,736.696" fill="none" stroke="#111" stroke-width="0.6"/>
<line x1="1079.5" y1="736.7" x2="1084.3000000000002" y2="736.7" stroke="#111" stroke-width="0.85"/>
<line x1="1079.5" y1="739.0" x2="1084.3000000000002" y2="739.0" stroke="#111" stroke-width="0.85"/>
<line x1="1079.5" y1="741.3" x2="1084.3000000000002" y2="741.3" stroke="#111" stroke-width="0.85"/>
<line x1="1079.5" y1="743.7" x2="1084.3000000000002" y2="743.7" stroke="#111" stroke-width="0.85"/>
<line x1="1079.5" y1="746.0" x2="1084.3000000000002" y2="746.0" stroke="#111" stroke-width="0.85"/>
<line x1="1079.5" y1="736.7" x2="1079.5" y2="746.0" stroke="#111" stroke-width="0.7"/>
<polyline points="1081.9,746.0020000000001 1081.9,749.386" fill="none" stroke="#111" stroke-width="0.6"/>
<line x1="1079.4" y1="749.8" x2="1084.4" y2="749.8" stroke="#111" stroke-width="0.8"/>
<line x1="1080.4" y1="751.9" x2="1083.4" y2="751.9" stroke="#111" stroke-width="0.8"/>
<path d="M515.5,731 L515.5,746 L519,742.5 L521.5,748 L523.5,747 L521,741.5 L526,741.5 Z" fill="#fff" stroke="#000" stroke-width="0.8"/>
<path d="M187,233 L187,247 L190.3,243.8 L192.6,249 L194.5,248.1 L192.3,243 L197,243 Z" fill="#fff" stroke="#000" stroke-width="0.9"/>
</g></svg>
<!-- scope window shadow -->
<div class="a" style="left:918px;top:256px;width:563px;height:390px;border-radius:8px;box-shadow:0 22px 48px rgba(0,0,0,0.34), 0 2px 8px rgba(0,0,0,0.18)"></div>
<div class="a" style="left:918px;top:256px;width:563px;height:390px;border-radius:8px;overflow:hidden;background:#f0f0f0;border:1px solid #b8b8b8">
 <div class="a" style="left:0;top:0;width:563px;height:29px;background:#f3f3f3"></div>
 <div class="a" style="left:0;top:29px;width:563px;height:24px;background:#fff"></div>
 <div class="a" style="left:0;top:53px;width:563px;height:26px;background:#f5f5f5;border-top:1px solid #d8d8d8"></div>
 <div class="a" style="left:0;top:79px;width:563px;height:288px;background:#262626"></div>
</div>
<svg style="left:925px;top:262px" width="17" height="17"><rect x="0.5" y="0.5" width="15" height="15" fill="#f4f4f4" stroke="#9aa"/><path d="M2,13 L8,4 L13,13 L9,10z" fill="#e8642a"/><path d="M2,13 L6,9 L9,10z" fill="#3a7ac8"/></svg>
<div class="t" style="left:946px;top:264px;font-size:12.5px;color:#222;transform:scaleX(0.850);transform-origin:left">Bus 9</div>
<div class="a" style="left:1360px;top:270px;width:10px;height:1px;background:#333"></div>
<svg style="left:1405px;top:264px" width="12" height="12"><rect x="0.5" y="0.5" width="10" height="10" fill="none" stroke="#333" stroke-width="1.1"/></svg>
<svg style="left:1451px;top:264px" width="12" height="12"><path d="M1,1 L11,11 M11,1 L1,11" stroke="#333" stroke-width="1.2"/></svg>
<div class="t" style="left:925px;top:290px;font-size:12.5px;color:#222;transform:scaleX(0.856);transform-origin:left">File</div>
<div class="t" style="left:955px;top:290px;font-size:12.5px;color:#222;transform:scaleX(0.959);transform-origin:left">Tools</div>
<div class="t" style="left:996px;top:290px;font-size:12.5px;color:#222;transform:scaleX(0.955);transform-origin:left">View</div>
<div class="t" style="left:1035px;top:290px;font-size:12.5px;color:#222;transform:scaleX(0.954);transform-origin:left">Simulation</div>
<div class="t" style="left:1103px;top:290px;font-size:12.5px;color:#222;transform:scaleX(0.981);transform-origin:left">Help</div>
<svg style="left:1467px;top:292px" width="10" height="8"><path d="M1,1 L7,6 M4,6 H8 V2" fill="none" stroke="#222" stroke-width="1.3"/></svg>
<svg style="left:919px;top:310px" width="320" height="24">
<defs><linearGradient id="sr" x1="0" y1="0" x2="0" y2="1"><stop offset="0" stop-color="#d2eb9c"/><stop offset="1" stop-color="#79b83e"/></linearGradient></defs>
<circle cx="11" cy="12" r="6.3" fill="#9a9a9a" stroke="#666" stroke-width="1.6" stroke-dasharray="2.2 1.2"/><circle cx="11" cy="12" r="4.2" fill="#a8a8a8"/><circle cx="11" cy="12" r="2.4" fill="#f4f4f4" stroke="#555" stroke-width="0.9"/>
<path d="M25,10.5 h5 l-2.5,2.5z" fill="#333"/><path d="M35.5,2 V22" stroke="#c8c8c8"/>
<path d="M43,11 L52,5 V17z" fill="#8fbde6" stroke="#5a8ab8" stroke-width="0.8"/><rect x="52" y="5" width="3" height="9" fill="#9cc4e8" stroke="#6a8ab0" stroke-width="0.6"/><circle cx="53" cy="15.5" r="4" fill="#888" stroke="#666" stroke-dasharray="1.5 0.8"/><circle cx="53" cy="15.5" r="1.6" fill="#eee"/>
<circle cx="72" cy="11.5" r="7.6" fill="url(#sr)" stroke="#4f8a2a" stroke-width="1.2"/><path d="M70,8 L76,11.5 L70,15z" fill="#1c1c1c"/>
<rect x="88" y="5" width="1.8" height="13" fill="#4a8ad0"/><rect x="91" y="5" width="1.8" height="13" fill="#4a8ad0"/><path d="M94,5 L102,11.5 L94,18z" fill="#78b6ee" stroke="#4a86c8" stroke-width="0.7"/>
<rect x="109" y="3.5" width="15" height="15.5" rx="5" fill="#c2c2c2" stroke="#b4b4b4"/><rect x="113.5" y="8" width="6" height="6" fill="#a6a6a6"/>
<path d="M130.5,2 V22" stroke="#c8c8c8"/>
<rect x="139" y="4" width="9" height="5" rx="2" fill="#f3a040" stroke="#d07018" stroke-width="0.8"/><rect x="137" y="14" width="9" height="5" rx="2" fill="#fff" stroke="#555" stroke-width="0.8"/><path d="M148,6.5 h3 v4 h-6 v4" fill="none" stroke="#555" stroke-width="0.8"/><rect x="147" y="9" width="4" height="4" rx="1" fill="#fff" stroke="#555" stroke-width="0.7"/>
<path d="M158,10.5 h5 l-2.5,2.5z" fill="#333"/><path d="M169.5,2 V22" stroke="#c8c8c8"/>
<circle cx="182" cy="10.5" r="5" fill="#fafafa" stroke="#444" stroke-width="1.3"/><path d="M185.5,14 L189.5,18" stroke="#222" stroke-width="2.2"/><path d="M179.5,10.5 h5 M182,8 v5" stroke="#222" stroke-width="1.1"/>
<path d="M197,10.5 h5 l-2.5,2.5z" fill="#333"/><path d="M207.5,2 V22" stroke="#c8c8c8"/>
<defs><linearGradient id="sa" x1="0" y1="0" x2="1" y2="1"><stop offset="0" stop-color="#fff"/><stop offset="1" stop-color="#d8d8d8"/></linearGradient></defs>
<rect x="214.5" y="4.5" width="15" height="15" fill="url(#sa)" stroke="#555"/><path d="M222,5.5 l-2.5,2.5 h5z M222,18.5 l-2.5,-2.5 h5z" fill="#444"/><path d="M222,8 v2 M222,14 v2" stroke="#888"/>
<path d="M236,10.5 h5 l-2.5,2.5z" fill="#333"/><path d="M245.5,2 V22" stroke="#c8c8c8"/>
<path d="M256,17.5 H262 L264,13 L258,13 L262,5 H267 V7.5 H264" fill="none" stroke="#333" stroke-width="2.3"/>
<defs><linearGradient id="sm" x1="0" y1="0" x2="1" y2="1"><stop offset="0" stop-color="#fff"/><stop offset="1" stop-color="#d4d4d4"/></linearGradient></defs>
<rect x="276.5" y="4.5" width="15" height="15" fill="url(#sm)" stroke="#777"/><path d="M278,17.5 L290,6" stroke="#7aaed8" stroke-width="3.2"/><path d="M278,17.5 L290,6" stroke="#4a7aa8" stroke-width="0.6" stroke-dasharray="1 1.2"/>
<path d="M297,10.5 h5 l-2.5,2.5z" fill="#333"/>
</svg>
<svg class="dg" style="left:0;top:0" width="1500" height="794" viewBox="0 0 1500 794">
<rect x="940.0" y="344.0" width="524.0" height="257.0" fill="#000"/>
<line x1="940.0" y1="344.0" x2="940.0" y2="601.0" stroke="#444" stroke-width="1"/>
<line x1="1027.3" y1="344.0" x2="1027.3" y2="601.0" stroke="#444" stroke-width="1"/>
<line x1="1114.7" y1="344.0" x2="1114.7" y2="601.0" stroke="#444" stroke-width="1"/>
<line x1="1202.0" y1="344.0" x2="1202.0" y2="601.0" stroke="#444" stroke-width="1"/>
<line x1="1289.3" y1="344.0" x2="1289.3" y2="601.0" stroke="#444" stroke-width="1"/>
<line x1="1376.7" y1="344.0" x2="1376.7" y2="601.0" stroke="#444" stroke-width="1"/>
<line x1="1464.0" y1="344.0" x2="1464.0" y2="601.0" stroke="#444" stroke-width="1"/>
<line x1="940.0" y1="601.4" x2="1464.0" y2="601.4" stroke="#585858" stroke-width="1"/>
<line x1="940.0" y1="574.3" x2="1464.0" y2="574.3" stroke="#585858" stroke-width="1"/>
<line x1="940.0" y1="547.2" x2="1464.0" y2="547.2" stroke="#585858" stroke-width="1"/>
<line x1="940.0" y1="520.2" x2="1464.0" y2="520.2" stroke="#585858" stroke-width="1"/>
<line x1="940.0" y1="493.1" x2="1464.0" y2="493.1" stroke="#585858" stroke-width="1"/>
<line x1="940.0" y1="466.0" x2="1464.0" y2="466.0" stroke="#585858" stroke-width="1"/>
<line x1="940.0" y1="438.9" x2="1464.0" y2="438.9" stroke="#585858" stroke-width="1"/>
<line x1="940.0" y1="411.8" x2="1464.0" y2="411.8" stroke="#585858" stroke-width="1"/>
<line x1="940.0" y1="384.8" x2="1464.0" y2="384.8" stroke="#585858" stroke-width="1"/>
<line x1="940.0" y1="357.7" x2="1464.0" y2="357.7" stroke="#585858" stroke-width="1"/>
<clipPath id="ax"><rect x="940" y="344" width="524" height="257"/></clipPath>
<g clip-path="url(#ax)"><polyline points="940.00,339.49 940.44,341.07 940.87,342.77 941.31,344.59 941.75,346.54 942.18,348.60 942.62,350.78 943.06,353.07 943.49,355.47 943.93,357.98 944.37,360.60 944.80,363.32 945.24,366.14 945.68,369.06 946.11,372.08 946.55,375.19 946.99,378.39 947.42,381.67 947.86,385.04 948.30,388.49 948.73,392.02 949.17,395.62 949.61,399.28 950.04,403.02 950.48,406.81 950.92,410.67 951.35,414.58 951.79,418.54 952.23,422.54 952.66,426.59 953.10,430.68 953.54,434.81 953.97,438.96 954.41,443.14 954.85,447.34 955.28,451.56 955.72,455.80 956.16,460.05 956.59,464.30 957.03,468.55 957.47,472.80 957.90,477.05 958.34,481.28 958.78,485.50 959.21,489.70 959.65,493.87 960.09,498.02 960.52,502.14 960.96,506.22 961.40,510.26 961.83,514.26 962.27,518.21 962.71,522.11 963.14,525.95 963.58,529.73 964.02,533.45 964.45,537.11 964.89,540.69 965.33,544.20 965.76,547.64 966.20,550.99 966.64,554.26 967.07,557.44 967.51,560.53 967.95,563.53 968.38,566.43 968.82,569.23 969.26,571.94 969.69,574.53 970.13,577.02 970.57,579.40 971.00,581.67 971.44,583.82 971.88,585.86 972.31,587.78 972.75,589.58 973.19,591.26 973.62,592.81 974.06,594.24 974.50,595.54 974.93,596.71 975.37,597.76 975.81,598.67 976.24,599.46 976.68,600.11 977.12,600.63 977.55,601.02 977.99,601.27 978.43,601.39 978.86,601.38 979.30,601.23 979.74,600.95 980.17,600.53 980.61,599.99 981.05,599.31 981.48,598.50 981.92,597.56 982.36,596.49 982.79,595.29 983.23,593.96 983.67,592.51 984.10,590.93 984.54,589.23 984.98,587.41 985.41,585.46 985.85,583.40 986.29,581.22 986.72,578.93 987.16,576.53 987.60,574.02 988.03,571.40 988.47,568.68 988.91,565.86 989.34,562.94 989.78,559.92 990.22,556.81 990.65,553.61 991.09,550.33 991.53,546.96 991.96,543.51 992.40,539.98 992.84,536.38 993.27,532.72 993.71,528.98 994.15,525.19 994.58,521.33 995.02,517.42 995.46,513.46 995.89,509.46 996.33,505.41 996.77,501.32 997.20,497.19 997.64,493.04 998.08,488.86 998.51,484.66 998.95,480.44 999.39,476.20 999.82,471.95 1000.26,467.70 1000.70,463.45 1001.13,459.20 1001.57,454.95 1002.01,450.72 1002.44,446.50 1002.88,442.30 1003.32,438.13 1003.75,433.98 1004.19,429.86 1004.63,425.78 1005.06,421.74 1005.50,417.74 1005.94,413.79 1006.37,409.89 1006.81,406.05 1007.25,402.27 1007.68,398.55 1008.12,394.89 1008.56,391.31 1008.99,387.80 1009.43,384.36 1009.87,381.01 1010.30,377.74 1010.74,374.56 1011.18,371.47 1011.61,368.47 1012.05,365.57 1012.49,362.77 1012.92,360.06 1013.36,357.47 1013.80,354.98 1014.23,352.60 1014.67,350.33 1015.11,348.18 1015.54,346.14 1015.98,344.22 1016.42,342.42 1016.85,340.74 1017.29,339.19 1017.73,337.76 1018.16,336.46 1018.60,335.29 1019.04,334.24 1019.47,333.33 1019.91,332.54 1020.35,331.89 1020.78,331.37 1021.22,330.98 1021.66,330.73 1022.09,330.61 1022.53,330.62 1022.97,330.77 1023.40,331.05 1023.84,331.47 1024.28,332.01 1024.71,332.69 1025.15,333.50 1025.59,334.44 1026.02,335.51 1026.46,336.71 1026.90,338.04 1027.33,339.49 1027.77,341.07 1028.21,342.77 1028.64,344.59 1029.08,346.54 1029.52,348.60 1029.95,350.78 1030.39,353.07 1030.83,355.47 1031.26,357.98 1031.70,360.60 1032.14,363.32 1032.57,366.14 1033.01,369.06 1033.45,372.08 1033.88,375.19 1034.32,378.39 1034.76,381.67 1035.19,385.04 1035.63,388.49 1036.07,392.02 1036.50,395.62 1036.94,399.28 1037.38,403.02 1037.81,406.81 1038.25,410.67 1038.69,414.58 1039.12,418.54 1039.56,422.54 1040.00,426.59 1040.43,430.68 1040.87,434.81 1041.31,438.96 1041.74,443.14 1042.18,447.34 1042.62,451.56 1043.05,455.80 1043.49,460.05 1043.93,464.30 1044.36,468.55 1044.80,472.80 1045.24,477.05 1045.67,481.28 1046.11,485.50 1046.55,489.70 1046.98,493.87 1047.42,498.02 1047.86,502.14 1048.29,506.22 1048.73,510.26 1049.17,514.26 1049.60,518.21 1050.04,522.11 1050.48,525.95 1050.91,529.73 1051.35,533.45 1051.79,537.11 1052.22,540.69 1052.66,544.20 1053.10,547.64 1053.53,550.99 1053.97,554.26 1054.41,557.44 1054.84,560.53 1055.28,563.53 1055.72,566.43 1056.15,569.23 1056.59,571.94 1057.03,574.53 1057.46,577.02 1057.90,579.40 1058.34,581.67 1058.77,583.82 1059.21,585.86 1059.65,587.78 1060.08,589.58 1060.52,591.26 1060.96,592.81 1061.39,594.24 1061.83,595.54 1062.27,596.71 1062.70,597.76 1063.14,598.67 1063.58,599.46 1064.01,600.11 1064.45,600.63 1064.89,601.02 1065.32,601.27 1065.76,601.39 1066.20,601.38 1066.63,601.23 1067.07,600.95 1067.51,600.53 1067.94,599.99 1068.38,599.31 1068.82,598.50 1069.25,597.56 1069.69,596.49 1070.13,595.29 1070.56,593.96 1071.00,592.51 1071.44,590.93 1071.87,589.23 1072.31,587.41 1072.75,585.46 1073.18,583.40 1073.62,581.22 1074.06,578.93 1074.49,576.53 1074.93,574.02 1075.37,571.40 1075.80,568.68 1076.24,565.86 1076.68,562.94 1077.11,559.92 1077.55,556.81 1077.99,553.61 1078.42,550.33 1078.86,546.96 1079.30,543.51 1079.73,539.98 1080.17,536.38 1080.61,532.72 1081.04,528.98 1081.48,525.19 1081.92,521.33 1082.35,517.42 1082.79,513.46 1083.23,509.46 1083.66,505.41 1084.10,501.32 1084.54,497.19 1084.97,493.04 1085.41,488.86 1085.85,484.66 1086.28,480.44 1086.72,476.20 1087.16,471.95 1087.59,467.70 1088.03,463.45 1088.47,459.20 1088.90,454.95 1089.34,450.72 1089.78,446.50 1090.21,442.30 1090.65,438.13 1091.09,433.98 1091.52,429.86 1091.96,425.78 1092.40,421.74 1092.83,417.74 1093.27,413.79 1093.71,409.89 1094.14,406.05 1094.58,402.27 1095.02,398.55 1095.45,394.89 1095.89,391.31 1096.33,387.80 1096.76,384.36 1097.20,381.01 1097.64,377.74 1098.07,374.56 1098.51,371.47 1098.95,368.47 1099.38,365.57 1099.82,362.77 1100.26,360.06 1100.69,357.47 1101.13,354.98 1101.57,352.60 1102.00,350.33 1102.44,348.18 1102.88,346.14 1103.31,344.22 1103.75,342.42 1104.19,340.74 1104.62,339.19 1105.06,337.76 1105.50,336.46 1105.93,335.29 1106.37,334.24 1106.81,333.33 1107.24,332.54 1107.68,331.89 1108.12,331.37 1108.55,330.98 1108.99,330.73 1109.43,330.61 1109.86,330.62 1110.30,330.77 1110.74,331.05 1111.17,331.47 1111.61,332.01 1112.05,332.69 1112.48,333.50 1112.92,334.44 1113.36,335.51 1113.79,336.71 1114.23,338.04 1114.67,339.49 1115.10,341.07 1115.54,342.77 1115.98,344.59 1116.41,346.54 1116.85,348.60 1117.29,350.78 1117.72,353.07 1118.16,355.47 1118.60,357.98 1119.03,360.60 1119.47,363.32 1119.91,366.14 1120.34,369.06 1120.78,372.08 1121.22,375.19 1121.65,378.39 1122.09,381.67 1122.53,385.04 1122.96,388.49 1123.40,392.02 1123.84,395.62 1124.27,399.28 1124.71,403.02 1125.15,406.81 1125.58,410.67 1126.02,414.58 1126.46,418.54 1126.89,422.54 1127.33,426.59 1127.77,430.68 1128.20,434.81 1128.64,438.96 1129.08,443.14 1129.51,447.34 1129.95,451.56 1130.39,455.80 1130.82,460.05 1131.26,464.30 1131.70,468.55 1132.13,472.80 1132.57,477.05 1133.01,481.28 1133.44,485.50 1133.88,489.70 1134.32,493.87 1134.75,498.02 1135.19,502.14 1135.63,506.22 1136.06,510.26 1136.50,514.26 1136.94,518.21 1137.37,522.11 1137.81,525.95 1138.25,529.73 1138.68,533.45 1139.12,537.11 1139.56,540.69 1139.99,544.20 1140.43,547.64 1140.87,550.99 1141.30,554.26 1141.74,557.44 1142.18,560.53 1142.61,563.53 1143.05,566.43 1143.49,569.23 1143.92,571.94 1144.36,574.53 1144.80,577.02 1145.23,579.40 1145.67,581.67 1146.11,583.82 1146.54,585.86 1146.98,587.78 1147.42,589.58 1147.85,591.26 1148.29,592.81 1148.73,594.24 1149.16,595.54 1149.60,596.71 1150.04,597.76 1150.47,598.67 1150.91,599.46 1151.35,600.11 1151.78,600.63 1152.22,601.02 1152.66,601.27 1153.09,601.39 1153.53,601.38 1153.97,601.23 1154.40,600.95 1154.84,600.53 1155.28,599.99 1155.71,599.31 1156.15,598.50 1156.59,597.56 1157.02,596.49 1157.46,595.29 1157.90,593.96 1158.33,592.51 1158.77,590.93 1159.21,589.23 1159.64,587.41 1160.08,585.46 1160.52,583.40 1160.95,581.22 1161.39,578.93 1161.83,576.53 1162.26,574.02 1162.70,571.40 1163.14,568.68 1163.57,565.86 1164.01,562.94 1164.45,559.92 1164.88,556.81 1165.32,553.61 1165.76,550.33 1166.19,546.96 1166.63,543.51 1167.07,539.98 1167.50,536.38 1167.94,532.72 1168.38,528.98 1168.81,525.19 1169.25,521.33 1169.69,517.42 1170.12,513.46 1170.56,509.46 1171.00,505.41 1171.43,501.32 1171.87,497.19 1172.31,493.04 1172.74,488.86 1173.18,484.66 1173.62,480.44 1174.05,476.20 1174.49,471.95 1174.93,467.70 1175.36,463.45 1175.80,459.20 1176.24,454.95 1176.67,450.72 1177.11,446.50 1177.55,442.30 1177.98,438.13 1178.42,433.98 1178.86,429.86 1179.29,425.78 1179.73,421.74 1180.17,417.74 1180.60,413.79 1181.04,409.89 1181.48,406.05 1181.91,402.27 1182.35,398.55 1182.79,394.89 1183.22,391.31 1183.66,387.80 1184.10,384.36 1184.53,381.01 1184.97,377.74 1185.41,374.56 1185.84,371.47 1186.28,368.47 1186.72,365.57 1187.15,362.77 1187.59,360.06 1188.03,357.47 1188.46,354.98 1188.90,352.60 1189.34,350.33 1189.77,348.18 1190.21,346.14 1190.65,344.22 1191.08,342.42 1191.52,340.74 1191.96,339.19 1192.39,337.76 1192.83,336.46 1193.27,335.29 1193.70,334.24 1194.14,333.33 1194.58,332.54 1195.01,331.89 1195.45,331.37 1195.89,330.98 1196.32,330.73 1196.76,330.61 1197.20,330.62 1197.63,330.77 1198.07,331.05 1198.51,331.47 1198.94,332.01 1199.38,332.69 1199.82,333.50 1200.25,334.44 1200.69,335.51 1201.13,336.71 1201.56,338.04 1202.00,339.49 1202.44,341.07 1202.87,342.77 1203.31,344.59 1203.75,346.54 1204.18,348.60 1204.62,350.78 1205.06,353.07 1205.49,355.47 1205.93,357.98 1206.37,360.60 1206.80,363.32 1207.24,366.14 1207.68,369.06 1208.11,372.08 1208.55,375.19 1208.99,378.39 1209.42,381.67 1209.86,385.04 1210.30,388.49 1210.73,392.02 1211.17,395.62 1211.61,399.28 1212.04,403.02 1212.48,406.81 1212.92,410.67 1213.35,414.58 1213.79,418.54 1214.23,422.54 1214.66,426.59 1215.10,430.68 1215.54,434.81 1215.97,438.96 1216.41,443.14 1216.85,447.34 1217.28,451.56 1217.72,455.80 1218.16,460.05 1218.59,464.30 1219.03,468.55 1219.47,472.80 1219.90,477.05 1220.34,481.28 1220.78,485.50 1221.21,489.70 1221.65,493.87 1222.09,498.02 1222.52,502.14 1222.96,506.22 1223.40,510.26 1223.83,514.26 1224.27,518.21 1224.71,522.11 1225.14,525.95 1225.58,529.73 1226.02,533.45 1226.45,537.11 1226.89,540.69 1227.33,544.20 1227.76,547.64 1228.20,550.99 1228.64,554.26 1229.07,557.44 1229.51,560.53 1229.95,563.53 1230.38,566.43 1230.82,569.23 1231.26,571.94 1231.69,574.53 1232.13,577.02 1232.57,579.40 1233.00,581.67 1233.44,583.82 1233.88,585.86 1234.31,587.78 1234.75,589.58 1235.19,591.26 1235.62,592.81 1236.06,594.24 1236.50,595.54 1236.93,596.71 1237.37,597.76 1237.81,598.67 1238.24,599.46 1238.68,600.11 1239.12,600.63 1239.55,601.02 1239.99,601.27 1240.43,601.39 1240.86,601.38 1241.30,601.23 1241.74,600.95 1242.17,600.53 1242.61,599.99 1243.05,599.31 1243.48,598.50 1243.92,597.56 1244.36,596.49 1244.79,595.29 1245.23,593.96 1245.67,592.51 1246.10,590.93 1246.54,589.23 1246.98,587.41 1247.41,585.46 1247.85,583.40 1248.29,581.22 1248.72,578.93 1249.16,576.53 1249.60,574.02 1250.03,571.40 1250.47,568.68 1250.91,565.86 1251.34,562.94 1251.78,559.92 1252.22,556.81 1252.65,553.61 1253.09,550.33 1253.53,546.96 1253.96,543.51 1254.40,539.98 1254.84,536.38 1255.27,532.72 1255.71,528.98 1256.15,525.19 1256.58,521.33 1257.02,517.42 1257.46,513.46 1257.89,509.46 1258.33,505.41 1258.77,501.32 1259.20,497.19 1259.64,493.04 1260.08,488.86 1260.51,484.66 1260.95,480.44 1261.39,476.20 1261.82,471.95 1262.26,467.70 1262.70,463.45 1263.13,459.20 1263.57,454.95 1264.01,450.72 1264.44,446.50 1264.88,442.30 1265.32,438.13 1265.75,433.98 1266.19,429.86 1266.63,425.78 1267.06,421.74 1267.50,417.74 1267.94,413.79 1268.37,409.89 1268.81,406.05 1269.25,402.27 1269.68,398.55 1270.12,394.89 1270.56,391.31 1270.99,387.80 1271.43,384.36 1271.87,381.01 1272.30,377.74 1272.74,374.56 1273.18,371.47 1273.61,368.47 1274.05,365.57 1274.49,362.77 1274.92,360.06 1275.36,357.47 1275.80,354.98 1276.23,352.60 1276.67,350.33 1277.11,348.18 1277.54,346.14 1277.98,344.22 1278.42,342.42 1278.85,340.74 1279.29,339.19 1279.73,337.76 1280.16,336.46 1280.60,335.29 1281.04,334.24 1281.47,333.33 1281.91,332.54 1282.35,331.89 1282.78,331.37 1283.22,330.98 1283.66,330.73 1284.09,330.61 1284.53,330.62 1284.97,330.77 1285.40,331.05 1285.84,331.47 1286.28,332.01 1286.71,332.69 1287.15,333.50 1287.59,334.44 1288.02,335.51 1288.46,336.71 1288.90,338.04 1289.33,339.49 1289.77,341.07 1290.21,342.77 1290.64,344.59 1291.08,346.54 1291.52,348.60 1291.95,350.78 1292.39,353.07 1292.83,355.47 1293.26,357.98 1293.70,360.60 1294.14,363.32 1294.57,366.14 1295.01,369.06 1295.45,372.08 1295.88,375.19 1296.32,378.39 1296.76,381.67 1297.19,385.04 1297.63,388.49 1298.07,392.02 1298.50,395.62 1298.94,399.28 1299.38,403.02 1299.81,406.81 1300.25,410.67 1300.69,414.58 1301.12,418.54 1301.56,422.54 1302.00,426.59 1302.43,430.68 1302.87,434.81 1303.31,438.96 1303.74,443.14 1304.18,447.34 1304.62,451.56 1305.05,455.80 1305.49,460.05 1305.93,464.30 1306.36,468.55 1306.80,472.80 1307.24,477.05 1307.67,481.28 1308.11,485.50 1308.55,489.70 1308.98,493.87 1309.42,498.02 1309.86,502.14 1310.29,506.22 1310.73,510.26 1311.17,514.26 1311.60,518.21 1312.04,522.11 1312.48,525.95 1312.91,529.73 1313.35,533.45 1313.79,537.11 1314.22,540.69 1314.66,544.20 1315.10,547.64 1315.53,550.99 1315.97,554.26 1316.41,557.44 1316.84,560.53 1317.28,563.53 1317.72,566.43 1318.15,569.23 1318.59,571.94 1319.03,574.53 1319.46,577.02 1319.90,579.40 1320.34,581.67 1320.77,583.82 1321.21,585.86 1321.65,587.78 1322.08,589.58 1322.52,591.26 1322.96,592.81 1323.39,594.24 1323.83,595.54 1324.27,596.71 1324.70,597.76 1325.14,598.67 1325.58,599.46 1326.01,600.11 1326.45,600.63 1326.89,601.02 1327.32,601.27 1327.76,601.39 1328.20,601.38 1328.63,601.23 1329.07,600.95 1329.51,600.53 1329.94,599.99 1330.38,599.31 1330.82,598.50 1331.25,597.56 1331.69,596.49 1332.13,595.29 1332.56,593.96 1333.00,592.51 1333.44,590.93 1333.87,589.23 1334.31,587.41 1334.75,585.46 1335.18,583.40 1335.62,581.22 1336.06,578.93 1336.49,576.53 1336.93,574.02 1337.37,571.40 1337.80,568.68 1338.24,565.86 1338.68,562.94 1339.11,559.92 1339.55,556.81 1339.99,553.61 1340.42,550.33 1340.86,546.96 1341.30,543.51 1341.73,539.98 1342.17,536.38 1342.61,532.72 1343.04,528.98 1343.48,525.19 1343.92,521.33 1344.35,517.42 1344.79,513.46 1345.23,509.46 1345.66,505.41 1346.10,501.32 1346.54,497.19 1346.97,493.04 1347.41,488.86 1347.85,484.66 1348.28,480.44 1348.72,476.20 1349.16,471.95 1349.59,467.70 1350.03,463.45 1350.47,459.20 1350.90,454.95 1351.34,450.72 1351.78,446.50 1352.21,442.30 1352.65,438.13 1353.09,433.98 1353.52,429.86 1353.96,425.78 1354.40,421.74 1354.83,417.74 1355.27,413.79 1355.71,409.89 1356.14,406.05 1356.58,402.27 1357.02,398.55 1357.45,394.89 1357.89,391.31 1358.33,387.80 1358.76,384.36 1359.20,381.01 1359.64,377.74 1360.07,374.56 1360.51,371.47 1360.95,368.47 1361.38,365.57 1361.82,362.77 1362.26,360.06 1362.69,357.47 1363.13,354.98 1363.57,352.60 1364.00,350.33 1364.44,348.18 1364.88,346.14 1365.31,344.22 1365.75,342.42 1366.19,340.74 1366.62,339.19 1367.06,337.76 1367.50,336.46 1367.93,335.29 1368.37,334.24 1368.81,333.33 1369.24,332.54 1369.68,331.89 1370.12,331.37 1370.55,330.98 1370.99,330.73 1371.43,330.61 1371.86,330.62 1372.30,330.77 1372.74,331.05 1373.17,331.47 1373.61,332.01 1374.05,332.69 1374.48,333.50 1374.92,334.44 1375.36,335.51 1375.79,336.71 1376.23,338.04 1376.67,339.49 1377.10,341.07 1377.54,342.77 1377.98,344.59 1378.41,346.54 1378.85,348.60 1379.29,350.78 1379.72,353.07 1380.16,355.47 1380.60,357.98 1381.03,360.60 1381.47,363.32 1381.91,366.14 1382.34,369.06 1382.78,372.08 1383.22,375.19 1383.65,378.39 1384.09,381.67 1384.53,385.04 1384.96,388.49 1385.40,392.02 1385.84,395.62 1386.27,399.28 1386.71,403.02 1387.15,406.81 1387.58,410.67 1388.02,414.58 1388.46,418.54 1388.89,422.54 1389.33,426.59 1389.77,430.68 1390.20,434.81 1390.64,438.96 1391.08,443.14 1391.51,447.34 1391.95,451.56 1392.39,455.80 1392.82,460.05 1393.26,464.30 1393.70,468.55 1394.13,472.80 1394.57,477.05 1395.01,481.28 1395.44,485.50 1395.88,489.70 1396.32,493.87 1396.75,498.02 1397.19,502.14 1397.63,506.22 1398.06,510.26 1398.50,514.26 1398.94,518.21 1399.37,522.11 1399.81,525.95 1400.25,529.73 1400.68,533.45 1401.12,537.11 1401.56,540.69 1401.99,544.20 1402.43,547.64 1402.87,550.99 1403.30,554.26 1403.74,557.44 1404.18,560.53 1404.61,563.53 1405.05,566.43 1405.49,569.23 1405.92,571.94 1406.36,574.53 1406.80,577.02 1407.23,579.40 1407.67,581.67 1408.11,583.82 1408.54,585.86 1408.98,587.78 1409.42,589.58 1409.85,591.26 1410.29,592.81 1410.73,594.24 1411.16,595.54 1411.60,596.71 1412.04,597.76 1412.47,598.67 1412.91,599.46 1413.35,600.11 1413.78,600.63 1414.22,601.02 1414.66,601.27 1415.09,601.39 1415.53,601.38 1415.97,601.23 1416.40,600.95 1416.84,600.53 1417.28,599.99 1417.71,599.31 1418.15,598.50 1418.59,597.56 1419.02,596.49 1419.46,595.29 1419.90,593.96 1420.33,592.51 1420.77,590.93 1421.21,589.23 1421.64,587.41 1422.08,585.46 1422.52,583.40 1422.95,581.22 1423.39,578.93 1423.83,576.53 1424.26,574.02 1424.70,571.40 1425.14,568.68 1425.57,565.86 1426.01,562.94 1426.45,559.92 1426.88,556.81 1427.32,553.61 1427.76,550.33 1428.19,546.96 1428.63,543.51 1429.07,539.98 1429.50,536.38 1429.94,532.72 1430.38,528.98 1430.81,525.19 1431.25,521.33 1431.69,517.42 1432.12,513.46 1432.56,509.46 1433.00,505.41 1433.43,501.32 1433.87,497.19 1434.31,493.04 1434.74,488.86 1435.18,484.66 1435.62,480.44 1436.05,476.20 1436.49,471.95 1436.93,467.70 1437.36,463.45 1437.80,459.20 1438.24,454.95 1438.67,450.72 1439.11,446.50 1439.55,442.30 1439.98,438.13 1440.42,433.98 1440.86,429.86 1441.29,425.78 1441.73,421.74 1442.17,417.74 1442.60,413.79 1443.04,409.89 1443.48,406.05 1443.91,402.27 1444.35,398.55 1444.79,394.89 1445.22,391.31 1445.66,387.80 1446.10,384.36 1446.53,381.01 1446.97,377.74 1447.41,374.56 1447.84,371.47 1448.28,368.47 1448.72,365.57 1449.15,362.77 1449.59,360.06 1450.03,357.47 1450.46,354.98 1450.90,352.60 1451.34,350.33 1451.77,348.18 1452.21,346.14 1452.65,344.22 1453.08,342.42 1453.52,340.74 1453.96,339.19 1454.39,337.76 1454.83,336.46 1455.27,335.29 1455.70,334.24 1456.14,333.33 1456.58,332.54 1457.01,331.89 1457.45,331.37 1457.89,330.98 1458.32,330.73 1458.76,330.61 1459.20,330.62 1459.63,330.77 1460.07,331.05 1460.51,331.47 1460.94,332.01 1461.38,332.69 1461.82,333.50 1462.25,334.44 1462.69,335.51 1463.13,336.71 1463.56,338.04 1464.00,339.49" fill="none" stroke="#d2581f" stroke-width="1.1"/><polyline points="940.00,487.46 940.44,483.25 940.87,479.02 941.31,474.78 941.75,470.54 942.18,466.28 942.62,462.03 943.06,457.78 943.49,453.54 943.93,449.31 944.37,445.10 944.80,440.91 945.24,436.74 945.68,432.60 946.11,428.50 946.55,424.43 946.99,420.40 947.42,416.42 947.86,412.49 948.30,408.61 948.73,404.78 949.17,401.02 949.61,397.32 950.04,393.69 950.48,390.13 950.92,386.64 951.35,383.24 951.79,379.91 952.23,376.67 952.66,373.52 953.10,370.46 953.54,367.49 953.97,364.62 954.41,361.85 954.85,359.19 955.28,356.63 955.72,354.17 956.16,351.83 956.59,349.60 957.03,347.48 957.47,345.49 957.90,343.61 958.34,341.85 958.78,340.21 959.21,338.70 959.65,337.31 960.09,336.06 960.52,334.92 960.96,333.92 961.40,333.05 961.83,332.31 962.27,331.70 962.71,331.23 963.14,330.89 963.58,330.68 964.02,330.60 964.45,330.66 964.89,330.85 965.33,331.17 965.76,331.63 966.20,332.22 966.64,332.95 967.07,333.80 967.51,334.78 967.95,335.90 968.38,337.14 968.82,338.51 969.26,340.00 969.69,341.62 970.13,343.37 970.57,345.23 971.00,347.21 971.44,349.31 971.88,351.53 972.31,353.85 972.75,356.29 973.19,358.84 973.62,361.49 974.06,364.25 974.50,367.10 974.93,370.06 975.37,373.11 975.81,376.25 976.24,379.47 976.68,382.79 977.12,386.18 977.55,389.66 977.99,393.21 978.43,396.83 978.86,400.52 979.30,404.28 979.74,408.09 980.17,411.97 980.61,415.89 981.05,419.87 981.48,423.89 981.92,427.95 982.36,432.05 982.79,436.19 983.23,440.35 983.67,444.54 984.10,448.75 984.54,452.98 984.98,457.22 985.41,461.46 985.85,465.72 986.29,469.97 986.72,474.22 987.16,478.46 987.60,482.69 988.03,486.90 988.47,491.09 988.91,495.26 989.34,499.40 989.78,503.50 990.22,507.57 990.65,511.60 991.09,515.58 991.53,519.51 991.96,523.39 992.40,527.22 992.84,530.98 993.27,534.68 993.71,538.31 994.15,541.87 994.58,545.36 995.02,548.76 995.46,552.09 995.89,555.33 996.33,558.48 996.77,561.54 997.20,564.51 997.64,567.38 998.08,570.15 998.51,572.81 998.95,575.37 999.39,577.83 999.82,580.17 1000.26,582.40 1000.70,584.52 1001.13,586.51 1001.57,588.39 1002.01,590.15 1002.44,591.79 1002.88,593.30 1003.32,594.69 1003.75,595.94 1004.19,597.08 1004.63,598.08 1005.06,598.95 1005.50,599.69 1005.94,600.30 1006.37,600.77 1006.81,601.11 1007.25,601.32 1007.68,601.40 1008.12,601.34 1008.56,601.15 1008.99,600.83 1009.43,600.37 1009.87,599.78 1010.30,599.05 1010.74,598.20 1011.18,597.22 1011.61,596.10 1012.05,594.86 1012.49,593.49 1012.92,592.00 1013.36,590.38 1013.80,588.63 1014.23,586.77 1014.67,584.79 1015.11,582.69 1015.54,580.47 1015.98,578.15 1016.42,575.71 1016.85,573.16 1017.29,570.51 1017.73,567.75 1018.16,564.90 1018.60,561.94 1019.04,558.89 1019.47,555.75 1019.91,552.53 1020.35,549.21 1020.78,545.82 1021.22,542.34 1021.66,538.79 1022.09,535.17 1022.53,531.48 1022.97,527.72 1023.40,523.91 1023.84,520.03 1024.28,516.11 1024.71,512.13 1025.15,508.11 1025.59,504.05 1026.02,499.95 1026.46,495.81 1026.90,491.65 1027.33,487.46 1027.77,483.25 1028.21,479.02 1028.64,474.78 1029.08,470.54 1029.52,466.28 1029.95,462.03 1030.39,457.78 1030.83,453.54 1031.26,449.31 1031.70,445.10 1032.14,440.91 1032.57,436.74 1033.01,432.60 1033.45,428.50 1033.88,424.43 1034.32,420.40 1034.76,416.42 1035.19,412.49 1035.63,408.61 1036.07,404.78 1036.50,401.02 1036.94,397.32 1037.38,393.69 1037.81,390.13 1038.25,386.64 1038.69,383.24 1039.12,379.91 1039.56,376.67 1040.00,373.52 1040.43,370.46 1040.87,367.49 1041.31,364.62 1041.74,361.85 1042.18,359.19 1042.62,356.63 1043.05,354.17 1043.49,351.83 1043.93,349.60 1044.36,347.48 1044.80,345.49 1045.24,343.61 1045.67,341.85 1046.11,340.21 1046.55,338.70 1046.98,337.31 1047.42,336.06 1047.86,334.92 1048.29,333.92 1048.73,333.05 1049.17,332.31 1049.60,331.70 1050.04,331.23 1050.48,330.89 1050.91,330.68 1051.35,330.60 1051.79,330.66 1052.22,330.85 1052.66,331.17 1053.10,331.63 1053.53,332.22 1053.97,332.95 1054.41,333.80 1054.84,334.78 1055.28,335.90 1055.72,337.14 1056.15,338.51 1056.59,340.00 1057.03,341.62 1057.46,343.37 1057.90,345.23 1058.34,347.21 1058.77,349.31 1059.21,351.53 1059.65,353.85 1060.08,356.29 1060.52,358.84 1060.96,361.49 1061.39,364.25 1061.83,367.10 1062.27,370.06 1062.70,373.11 1063.14,376.25 1063.58,379.47 1064.01,382.79 1064.45,386.18 1064.89,389.66 1065.32,393.21 1065.76,396.83 1066.20,400.52 1066.63,404.28 1067.07,408.09 1067.51,411.97 1067.94,415.89 1068.38,419.87 1068.82,423.89 1069.25,427.95 1069.69,432.05 1070.13,436.19 1070.56,440.35 1071.00,444.54 1071.44,448.75 1071.87,452.98 1072.31,457.22 1072.75,461.46 1073.18,465.72 1073.62,469.97 1074.06,474.22 1074.49,478.46 1074.93,482.69 1075.37,486.90 1075.80,491.09 1076.24,495.26 1076.68,499.40 1077.11,503.50 1077.55,507.57 1077.99,511.60 1078.42,515.58 1078.86,519.51 1079.30,523.39 1079.73,527.22 1080.17,530.98 1080.61,534.68 1081.04,538.31 1081.48,541.87 1081.92,545.36 1082.35,548.76 1082.79,552.09 1083.23,555.33 1083.66,558.48 1084.10,561.54 1084.54,564.51 1084.97,567.38 1085.41,570.15 1085.85,572.81 1086.28,575.37 1086.72,577.83 1087.16,580.17 1087.59,582.40 1088.03,584.52 1088.47,586.51 1088.90,588.39 1089.34,590.15 1089.78,591.79 1090.21,593.30 1090.65,594.69 1091.09,595.94 1091.52,597.08 1091.96,598.08 1092.40,598.95 1092.83,599.69 1093.27,600.30 1093.71,600.77 1094.14,601.11 1094.58,601.32 1095.02,601.40 1095.45,601.34 1095.89,601.15 1096.33,600.83 1096.76,600.37 1097.20,599.78 1097.64,599.05 1098.07,598.20 1098.51,597.22 1098.95,596.10 1099.38,594.86 1099.82,593.49 1100.26,592.00 1100.69,590.38 1101.13,588.63 1101.57,586.77 1102.00,584.79 1102.44,582.69 1102.88,580.47 1103.31,578.15 1103.75,575.71 1104.19,573.16 1104.62,570.51 1105.06,567.75 1105.50,564.90 1105.93,561.94 1106.37,558.89 1106.81,555.75 1107.24,552.53 1107.68,549.21 1108.12,545.82 1108.55,542.34 1108.99,538.79 1109.43,535.17 1109.86,531.48 1110.30,527.72 1110.74,523.91 1111.17,520.03 1111.61,516.11 1112.05,512.13 1112.48,508.11 1112.92,504.05 1113.36,499.95 1113.79,495.81 1114.23,491.65 1114.67,487.46 1115.10,483.25 1115.54,479.02 1115.98,474.78 1116.41,470.54 1116.85,466.28 1117.29,462.03 1117.72,457.78 1118.16,453.54 1118.60,449.31 1119.03,445.10 1119.47,440.91 1119.91,436.74 1120.34,432.60 1120.78,428.50 1121.22,424.43 1121.65,420.40 1122.09,416.42 1122.53,412.49 1122.96,408.61 1123.40,404.78 1123.84,401.02 1124.27,397.32 1124.71,393.69 1125.15,390.13 1125.58,386.64 1126.02,383.24 1126.46,379.91 1126.89,376.67 1127.33,373.52 1127.77,370.46 1128.20,367.49 1128.64,364.62 1129.08,361.85 1129.51,359.19 1129.95,356.63 1130.39,354.17 1130.82,351.83 1131.26,349.60 1131.70,347.48 1132.13,345.49 1132.57,343.61 1133.01,341.85 1133.44,340.21 1133.88,338.70 1134.32,337.31 1134.75,336.06 1135.19,334.92 1135.63,333.92 1136.06,333.05 1136.50,332.31 1136.94,331.70 1137.37,331.23 1137.81,330.89 1138.25,330.68 1138.68,330.60 1139.12,330.66 1139.56,330.85 1139.99,331.17 1140.43,331.63 1140.87,332.22 1141.30,332.95 1141.74,333.80 1142.18,334.78 1142.61,335.90 1143.05,337.14 1143.49,338.51 1143.92,340.00 1144.36,341.62 1144.80,343.37 1145.23,345.23 1145.67,347.21 1146.11,349.31 1146.54,351.53 1146.98,353.85 1147.42,356.29 1147.85,358.84 1148.29,361.49 1148.73,364.25 1149.16,367.10 1149.60,370.06 1150.04,373.11 1150.47,376.25 1150.91,379.47 1151.35,382.79 1151.78,386.18 1152.22,389.66 1152.66,393.21 1153.09,396.83 1153.53,400.52 1153.97,404.28 1154.40,408.09 1154.84,411.97 1155.28,415.89 1155.71,419.87 1156.15,423.89 1156.59,427.95 1157.02,432.05 1157.46,436.19 1157.90,440.35 1158.33,444.54 1158.77,448.75 1159.21,452.98 1159.64,457.22 1160.08,461.46 1160.52,465.72 1160.95,469.97 1161.39,474.22 1161.83,478.46 1162.26,482.69 1162.70,486.90 1163.14,491.09 1163.57,495.26 1164.01,499.40 1164.45,503.50 1164.88,507.57 1165.32,511.60 1165.76,515.58 1166.19,519.51 1166.63,523.39 1167.07,527.22 1167.50,530.98 1167.94,534.68 1168.38,538.31 1168.81,541.87 1169.25,545.36 1169.69,548.76 1170.12,552.09 1170.56,555.33 1171.00,558.48 1171.43,561.54 1171.87,564.51 1172.31,567.38 1172.74,570.15 1173.18,572.81 1173.62,575.37 1174.05,577.83 1174.49,580.17 1174.93,582.40 1175.36,584.52 1175.80,586.51 1176.24,588.39 1176.67,590.15 1177.11,591.79 1177.55,593.30 1177.98,594.69 1178.42,595.94 1178.86,597.08 1179.29,598.08 1179.73,598.95 1180.17,599.69 1180.60,600.30 1181.04,600.77 1181.48,601.11 1181.91,601.32 1182.35,601.40 1182.79,601.34 1183.22,601.15 1183.66,600.83 1184.10,600.37 1184.53,599.78 1184.97,599.05 1185.41,598.20 1185.84,597.22 1186.28,596.10 1186.72,594.86 1187.15,593.49 1187.59,592.00 1188.03,590.38 1188.46,588.63 1188.90,586.77 1189.34,584.79 1189.77,582.69 1190.21,580.47 1190.65,578.15 1191.08,575.71 1191.52,573.16 1191.96,570.51 1192.39,567.75 1192.83,564.90 1193.27,561.94 1193.70,558.89 1194.14,555.75 1194.58,552.53 1195.01,549.21 1195.45,545.82 1195.89,542.34 1196.32,538.79 1196.76,535.17 1197.20,531.48 1197.63,527.72 1198.07,523.91 1198.51,520.03 1198.94,516.11 1199.38,512.13 1199.82,508.11 1200.25,504.05 1200.69,499.95 1201.13,495.81 1201.56,491.65 1202.00,487.46 1202.44,483.25 1202.87,479.02 1203.31,474.78 1203.75,470.54 1204.18,466.28 1204.62,462.03 1205.06,457.78 1205.49,453.54 1205.93,449.31 1206.37,445.10 1206.80,440.91 1207.24,436.74 1207.68,432.60 1208.11,428.50 1208.55,424.43 1208.99,420.40 1209.42,416.42 1209.86,412.49 1210.30,408.61 1210.73,404.78 1211.17,401.02 1211.61,397.32 1212.04,393.69 1212.48,390.13 1212.92,386.64 1213.35,383.24 1213.79,379.91 1214.23,376.67 1214.66,373.52 1215.10,370.46 1215.54,367.49 1215.97,364.62 1216.41,361.85 1216.85,359.19 1217.28,356.63 1217.72,354.17 1218.16,351.83 1218.59,349.60 1219.03,347.48 1219.47,345.49 1219.90,343.61 1220.34,341.85 1220.78,340.21 1221.21,338.70 1221.65,337.31 1222.09,336.06 1222.52,334.92 1222.96,333.92 1223.40,333.05 1223.83,332.31 1224.27,331.70 1224.71,331.23 1225.14,330.89 1225.58,330.68 1226.02,330.60 1226.45,330.66 1226.89,330.85 1227.33,331.17 1227.76,331.63 1228.20,332.22 1228.64,332.95 1229.07,333.80 1229.51,334.78 1229.95,335.90 1230.38,337.14 1230.82,338.51 1231.26,340.00 1231.69,341.62 1232.13,343.37 1232.57,345.23 1233.00,347.21 1233.44,349.31 1233.88,351.53 1234.31,353.85 1234.75,356.29 1235.19,358.84 1235.62,361.49 1236.06,364.25 1236.50,367.10 1236.93,370.06 1237.37,373.11 1237.81,376.25 1238.24,379.47 1238.68,382.79 1239.12,386.18 1239.55,389.66 1239.99,393.21 1240.43,396.83 1240.86,400.52 1241.30,404.28 1241.74,408.09 1242.17,411.97 1242.61,415.89 1243.05,419.87 1243.48,423.89 1243.92,427.95 1244.36,432.05 1244.79,436.19 1245.23,440.35 1245.67,444.54 1246.10,448.75 1246.54,452.98 1246.98,457.22 1247.41,461.46 1247.85,465.72 1248.29,469.97 1248.72,474.22 1249.16,478.46 1249.60,482.69 1250.03,486.90 1250.47,491.09 1250.91,495.26 1251.34,499.40 1251.78,503.50 1252.22,507.57 1252.65,511.60 1253.09,515.58 1253.53,519.51 1253.96,523.39 1254.40,527.22 1254.84,530.98 1255.27,534.68 1255.71,538.31 1256.15,541.87 1256.58,545.36 1257.02,548.76 1257.46,552.09 1257.89,555.33 1258.33,558.48 1258.77,561.54 1259.20,564.51 1259.64,567.38 1260.08,570.15 1260.51,572.81 1260.95,575.37 1261.39,577.83 1261.82,580.17 1262.26,582.40 1262.70,584.52 1263.13,586.51 1263.57,588.39 1264.01,590.15 1264.44,591.79 1264.88,593.30 1265.32,594.69 1265.75,595.94 1266.19,597.08 1266.63,598.08 1267.06,598.95 1267.50,599.69 1267.94,600.30 1268.37,600.77 1268.81,601.11 1269.25,601.32 1269.68,601.40 1270.12,601.34 1270.56,601.15 1270.99,600.83 1271.43,600.37 1271.87,599.78 1272.30,599.05 1272.74,598.20 1273.18,597.22 1273.61,596.10 1274.05,594.86 1274.49,593.49 1274.92,592.00 1275.36,590.38 1275.80,588.63 1276.23,586.77 1276.67,584.79 1277.11,582.69 1277.54,580.47 1277.98,578.15 1278.42,575.71 1278.85,573.16 1279.29,570.51 1279.73,567.75 1280.16,564.90 1280.60,561.94 1281.04,558.89 1281.47,555.75 1281.91,552.53 1282.35,549.21 1282.78,545.82 1283.22,542.34 1283.66,538.79 1284.09,535.17 1284.53,531.48 1284.97,527.72 1285.40,523.91 1285.84,520.03 1286.28,516.11 1286.71,512.13 1287.15,508.11 1287.59,504.05 1288.02,499.95 1288.46,495.81 1288.90,491.65 1289.33,487.46 1289.77,483.25 1290.21,479.02 1290.64,474.78 1291.08,470.54 1291.52,466.28 1291.95,462.03 1292.39,457.78 1292.83,453.54 1293.26,449.31 1293.70,445.10 1294.14,440.91 1294.57,436.74 1295.01,432.60 1295.45,428.50 1295.88,424.43 1296.32,420.40 1296.76,416.42 1297.19,412.49 1297.63,408.61 1298.07,404.78 1298.50,401.02 1298.94,397.32 1299.38,393.69 1299.81,390.13 1300.25,386.64 1300.69,383.24 1301.12,379.91 1301.56,376.67 1302.00,373.52 1302.43,370.46 1302.87,367.49 1303.31,364.62 1303.74,361.85 1304.18,359.19 1304.62,356.63 1305.05,354.17 1305.49,351.83 1305.93,349.60 1306.36,347.48 1306.80,345.49 1307.24,343.61 1307.67,341.85 1308.11,340.21 1308.55,338.70 1308.98,337.31 1309.42,336.06 1309.86,334.92 1310.29,333.92 1310.73,333.05 1311.17,332.31 1311.60,331.70 1312.04,331.23 1312.48,330.89 1312.91,330.68 1313.35,330.60 1313.79,330.66 1314.22,330.85 1314.66,331.17 1315.10,331.63 1315.53,332.22 1315.97,332.95 1316.41,333.80 1316.84,334.78 1317.28,335.90 1317.72,337.14 1318.15,338.51 1318.59,340.00 1319.03,341.62 1319.46,343.37 1319.90,345.23 1320.34,347.21 1320.77,349.31 1321.21,351.53 1321.65,353.85 1322.08,356.29 1322.52,358.84 1322.96,361.49 1323.39,364.25 1323.83,367.10 1324.27,370.06 1324.70,373.11 1325.14,376.25 1325.58,379.47 1326.01,382.79 1326.45,386.18 1326.89,389.66 1327.32,393.21 1327.76,396.83 1328.20,400.52 1328.63,404.28 1329.07,408.09 1329.51,411.97 1329.94,415.89 1330.38,419.87 1330.82,423.89 1331.25,427.95 1331.69,432.05 1332.13,436.19 1332.56,440.35 1333.00,444.54 1333.44,448.75 1333.87,452.98 1334.31,457.22 1334.75,461.46 1335.18,465.72 1335.62,469.97 1336.06,474.22 1336.49,478.46 1336.93,482.69 1337.37,486.90 1337.80,491.09 1338.24,495.26 1338.68,499.40 1339.11,503.50 1339.55,507.57 1339.99,511.60 1340.42,515.58 1340.86,519.51 1341.30,523.39 1341.73,527.22 1342.17,530.98 1342.61,534.68 1343.04,538.31 1343.48,541.87 1343.92,545.36 1344.35,548.76 1344.79,552.09 1345.23,555.33 1345.66,558.48 1346.10,561.54 1346.54,564.51 1346.97,567.38 1347.41,570.15 1347.85,572.81 1348.28,575.37 1348.72,577.83 1349.16,580.17 1349.59,582.40 1350.03,584.52 1350.47,586.51 1350.90,588.39 1351.34,590.15 1351.78,591.79 1352.21,593.30 1352.65,594.69 1353.09,595.94 1353.52,597.08 1353.96,598.08 1354.40,598.95 1354.83,599.69 1355.27,600.30 1355.71,600.77 1356.14,601.11 1356.58,601.32 1357.02,601.40 1357.45,601.34 1357.89,601.15 1358.33,600.83 1358.76,600.37 1359.20,599.78 1359.64,599.05 1360.07,598.20 1360.51,597.22 1360.95,596.10 1361.38,594.86 1361.82,593.49 1362.26,592.00 1362.69,590.38 1363.13,588.63 1363.57,586.77 1364.00,584.79 1364.44,582.69 1364.88,580.47 1365.31,578.15 1365.75,575.71 1366.19,573.16 1366.62,570.51 1367.06,567.75 1367.50,564.90 1367.93,561.94 1368.37,558.89 1368.81,555.75 1369.24,552.53 1369.68,549.21 1370.12,545.82 1370.55,542.34 1370.99,538.79 1371.43,535.17 1371.86,531.48 1372.30,527.72 1372.74,523.91 1373.17,520.03 1373.61,516.11 1374.05,512.13 1374.48,508.11 1374.92,504.05 1375.36,499.95 1375.79,495.81 1376.23,491.65 1376.67,487.46 1377.10,483.25 1377.54,479.02 1377.98,474.78 1378.41,470.54 1378.85,466.28 1379.29,462.03 1379.72,457.78 1380.16,453.54 1380.60,449.31 1381.03,445.10 1381.47,440.91 1381.91,436.74 1382.34,432.60 1382.78,428.50 1383.22,424.43 1383.65,420.40 1384.09,416.42 1384.53,412.49 1384.96,408.61 1385.40,404.78 1385.84,401.02 1386.27,397.32 1386.71,393.69 1387.15,390.13 1387.58,386.64 1388.02,383.24 1388.46,379.91 1388.89,376.67 1389.33,373.52 1389.77,370.46 1390.20,367.49 1390.64,364.62 1391.08,361.85 1391.51,359.19 1391.95,356.63 1392.39,354.17 1392.82,351.83 1393.26,349.60 1393.70,347.48 1394.13,345.49 1394.57,343.61 1395.01,341.85 1395.44,340.21 1395.88,338.70 1396.32,337.31 1396.75,336.06 1397.19,334.92 1397.63,333.92 1398.06,333.05 1398.50,332.31 1398.94,331.70 1399.37,331.23 1399.81,330.89 1400.25,330.68 1400.68,330.60 1401.12,330.66 1401.56,330.85 1401.99,331.17 1402.43,331.63 1402.87,332.22 1403.30,332.95 1403.74,333.80 1404.18,334.78 1404.61,335.90 1405.05,337.14 1405.49,338.51 1405.92,340.00 1406.36,341.62 1406.80,343.37 1407.23,345.23 1407.67,347.21 1408.11,349.31 1408.54,351.53 1408.98,353.85 1409.42,356.29 1409.85,358.84 1410.29,361.49 1410.73,364.25 1411.16,367.10 1411.60,370.06 1412.04,373.11 1412.47,376.25 1412.91,379.47 1413.35,382.79 1413.78,386.18 1414.22,389.66 1414.66,393.21 1415.09,396.83 1415.53,400.52 1415.97,404.28 1416.40,408.09 1416.84,411.97 1417.28,415.89 1417.71,419.87 1418.15,423.89 1418.59,427.95 1419.02,432.05 1419.46,436.19 1419.90,440.35 1420.33,444.54 1420.77,448.75 1421.21,452.98 1421.64,457.22 1422.08,461.46 1422.52,465.72 1422.95,469.97 1423.39,474.22 1423.83,478.46 1424.26,482.69 1424.70,486.90 1425.14,491.09 1425.57,495.26 1426.01,499.40 1426.45,503.50 1426.88,507.57 1427.32,511.60 1427.76,515.58 1428.19,519.51 1428.63,523.39 1429.07,527.22 1429.50,530.98 1429.94,534.68 1430.38,538.31 1430.81,541.87 1431.25,545.36 1431.69,548.76 1432.12,552.09 1432.56,555.33 1433.00,558.48 1433.43,561.54 1433.87,564.51 1434.31,567.38 1434.74,570.15 1435.18,572.81 1435.62,575.37 1436.05,577.83 1436.49,580.17 1436.93,582.40 1437.36,584.52 1437.80,586.51 1438.24,588.39 1438.67,590.15 1439.11,591.79 1439.55,593.30 1439.98,594.69 1440.42,595.94 1440.86,597.08 1441.29,598.08 1441.73,598.95 1442.17,599.69 1442.60,600.30 1443.04,600.77 1443.48,601.11 1443.91,601.32 1444.35,601.40 1444.79,601.34 1445.22,601.15 1445.66,600.83 1446.10,600.37 1446.53,599.78 1446.97,599.05 1447.41,598.20 1447.84,597.22 1448.28,596.10 1448.72,594.86 1449.15,593.49 1449.59,592.00 1450.03,590.38 1450.46,588.63 1450.90,586.77 1451.34,584.79 1451.77,582.69 1452.21,580.47 1452.65,578.15 1453.08,575.71 1453.52,573.16 1453.96,570.51 1454.39,567.75 1454.83,564.90 1455.27,561.94 1455.70,558.89 1456.14,555.75 1456.58,552.53 1457.01,549.21 1457.45,545.82 1457.89,542.34 1458.32,538.79 1458.76,535.17 1459.20,531.48 1459.63,527.72 1460.07,523.91 1460.51,520.03 1460.94,516.11 1461.38,512.13 1461.82,508.11 1462.25,504.05 1462.69,499.95 1463.13,495.81 1463.56,491.65 1464.00,487.46" fill="none" stroke="#d8c22a" stroke-width="1.1"/><polyline points="940.00,571.05 940.44,573.68 940.87,576.20 941.31,578.62 941.75,580.93 942.18,583.12 942.62,585.19 943.06,587.15 943.49,588.99 943.93,590.71 944.37,592.30 944.80,593.78 945.24,595.12 945.68,596.34 946.11,597.42 946.55,598.38 946.99,599.21 947.42,599.91 947.86,600.47 948.30,600.90 948.73,601.20 949.17,601.36 949.61,601.40 950.04,601.29 950.48,601.06 950.92,600.69 951.35,600.19 951.79,599.55 952.23,598.78 952.66,597.89 953.10,596.86 953.54,595.70 953.97,594.42 954.41,593.01 954.85,591.47 955.28,589.81 955.72,588.03 956.16,586.12 956.59,584.10 957.03,581.96 957.47,579.71 957.90,577.35 958.34,574.87 958.78,572.29 959.21,569.60 959.65,566.81 960.09,563.92 960.52,560.94 960.96,557.86 961.40,554.69 961.83,551.43 962.27,548.09 962.71,544.67 963.14,541.17 963.58,537.59 964.02,533.95 964.45,530.23 964.89,526.46 965.33,522.62 965.76,518.73 966.20,514.79 966.64,510.80 967.07,506.76 967.51,502.68 967.95,498.57 968.38,494.43 968.82,490.26 969.26,486.06 969.69,481.84 970.13,477.61 970.57,473.37 971.00,469.12 971.44,464.87 971.88,460.61 972.31,456.37 972.75,452.13 973.19,447.91 973.62,443.70 974.06,439.52 974.50,435.36 974.93,431.23 975.37,427.14 975.81,423.08 976.24,419.07 976.68,415.10 977.12,411.19 977.55,407.33 977.99,403.52 978.43,399.78 978.86,396.10 979.30,392.49 979.74,388.96 980.17,385.50 980.61,382.12 981.05,378.82 981.48,375.61 981.92,372.49 982.36,369.46 982.79,366.52 983.23,363.69 983.67,360.95 984.10,358.32 984.54,355.80 984.98,353.38 985.41,351.07 985.85,348.88 986.29,346.81 986.72,344.85 987.16,343.01 987.60,341.29 988.03,339.70 988.47,338.22 988.91,336.88 989.34,335.66 989.78,334.58 990.22,333.62 990.65,332.79 991.09,332.09 991.53,331.53 991.96,331.10 992.40,330.80 992.84,330.64 993.27,330.60 993.71,330.71 994.15,330.94 994.58,331.31 995.02,331.81 995.46,332.45 995.89,333.22 996.33,334.11 996.77,335.14 997.20,336.30 997.64,337.58 998.08,338.99 998.51,340.53 998.95,342.19 999.39,343.97 999.82,345.88 1000.26,347.90 1000.70,350.04 1001.13,352.29 1001.57,354.65 1002.01,357.13 1002.44,359.71 1002.88,362.40 1003.32,365.19 1003.75,368.08 1004.19,371.06 1004.63,374.14 1005.06,377.31 1005.50,380.57 1005.94,383.91 1006.37,387.33 1006.81,390.83 1007.25,394.41 1007.68,398.05 1008.12,401.77 1008.56,405.54 1008.99,409.38 1009.43,413.27 1009.87,417.21 1010.30,421.20 1010.74,425.24 1011.18,429.32 1011.61,433.43 1012.05,437.57 1012.49,441.74 1012.92,445.94 1013.36,450.16 1013.80,454.39 1014.23,458.63 1014.67,462.88 1015.11,467.13 1015.54,471.39 1015.98,475.63 1016.42,479.87 1016.85,484.09 1017.29,488.30 1017.73,492.48 1018.16,496.64 1018.60,500.77 1019.04,504.86 1019.47,508.92 1019.91,512.93 1020.35,516.90 1020.78,520.81 1021.22,524.67 1021.66,528.48 1022.09,532.22 1022.53,535.90 1022.97,539.51 1023.40,543.04 1023.84,546.50 1024.28,549.88 1024.71,553.18 1025.15,556.39 1025.59,559.51 1026.02,562.54 1026.46,565.48 1026.90,568.31 1027.33,571.05 1027.77,573.68 1028.21,576.20 1028.64,578.62 1029.08,580.93 1029.52,583.12 1029.95,585.19 1030.39,587.15 1030.83,588.99 1031.26,590.71 1031.70,592.30 1032.14,593.78 1032.57,595.12 1033.01,596.34 1033.45,597.42 1033.88,598.38 1034.32,599.21 1034.76,599.91 1035.19,600.47 1035.63,600.90 1036.07,601.20 1036.50,601.36 1036.94,601.40 1037.38,601.29 1037.81,601.06 1038.25,600.69 1038.69,600.19 1039.12,599.55 1039.56,598.78 1040.00,597.89 1040.43,596.86 1040.87,595.70 1041.31,594.42 1041.74,593.01 1042.18,591.47 1042.62,589.81 1043.05,588.03 1043.49,586.12 1043.93,584.10 1044.36,581.96 1044.80,579.71 1045.24,577.35 1045.67,574.87 1046.11,572.29 1046.55,569.60 1046.98,566.81 1047.42,563.92 1047.86,560.94 1048.29,557.86 1048.73,554.69 1049.17,551.43 1049.60,548.09 1050.04,544.67 1050.48,541.17 1050.91,537.59 1051.35,533.95 1051.79,530.23 1052.22,526.46 1052.66,522.62 1053.10,518.73 1053.53,514.79 1053.97,510.80 1054.41,506.76 1054.84,502.68 1055.28,498.57 1055.72,494.43 1056.15,490.26 1056.59,486.06 1057.03,481.84 1057.46,477.61 1057.90,473.37 1058.34,469.12 1058.77,464.87 1059.21,460.61 1059.65,456.37 1060.08,452.13 1060.52,447.91 1060.96,443.70 1061.39,439.52 1061.83,435.36 1062.27,431.23 1062.70,427.14 1063.14,423.08 1063.58,419.07 1064.01,415.10 1064.45,411.19 1064.89,407.33 1065.32,403.52 1065.76,399.78 1066.20,396.10 1066.63,392.49 1067.07,388.96 1067.51,385.50 1067.94,382.12 1068.38,378.82 1068.82,375.61 1069.25,372.49 1069.69,369.46 1070.13,366.52 1070.56,363.69 1071.00,360.95 1071.44,358.32 1071.87,355.80 1072.31,353.38 1072.75,351.07 1073.18,348.88 1073.62,346.81 1074.06,344.85 1074.49,343.01 1074.93,341.29 1075.37,339.70 1075.80,338.22 1076.24,336.88 1076.68,335.66 1077.11,334.58 1077.55,333.62 1077.99,332.79 1078.42,332.09 1078.86,331.53 1079.30,331.10 1079.73,330.80 1080.17,330.64 1080.61,330.60 1081.04,330.71 1081.48,330.94 1081.92,331.31 1082.35,331.81 1082.79,332.45 1083.23,333.22 1083.66,334.11 1084.10,335.14 1084.54,336.30 1084.97,337.58 1085.41,338.99 1085.85,340.53 1086.28,342.19 1086.72,343.97 1087.16,345.88 1087.59,347.90 1088.03,350.04 1088.47,352.29 1088.90,354.65 1089.34,357.13 1089.78,359.71 1090.21,362.40 1090.65,365.19 1091.09,368.08 1091.52,371.06 1091.96,374.14 1092.40,377.31 1092.83,380.57 1093.27,383.91 1093.71,387.33 1094.14,390.83 1094.58,394.41 1095.02,398.05 1095.45,401.77 1095.89,405.54 1096.33,409.38 1096.76,413.27 1097.20,417.21 1097.64,421.20 1098.07,425.24 1098.51,429.32 1098.95,433.43 1099.38,437.57 1099.82,441.74 1100.26,445.94 1100.69,450.16 1101.13,454.39 1101.57,458.63 1102.00,462.88 1102.44,467.13 1102.88,471.39 1103.31,475.63 1103.75,479.87 1104.19,484.09 1104.62,488.30 1105.06,492.48 1105.50,496.64 1105.93,500.77 1106.37,504.86 1106.81,508.92 1107.24,512.93 1107.68,516.90 1108.12,520.81 1108.55,524.67 1108.99,528.48 1109.43,532.22 1109.86,535.90 1110.30,539.51 1110.74,543.04 1111.17,546.50 1111.61,549.88 1112.05,553.18 1112.48,556.39 1112.92,559.51 1113.36,562.54 1113.79,565.48 1114.23,568.31 1114.67,571.05 1115.10,573.68 1115.54,576.20 1115.98,578.62 1116.41,580.93 1116.85,583.12 1117.29,585.19 1117.72,587.15 1118.16,588.99 1118.60,590.71 1119.03,592.30 1119.47,593.78 1119.91,595.12 1120.34,596.34 1120.78,597.42 1121.22,598.38 1121.65,599.21 1122.09,599.91 1122.53,600.47 1122.96,600.90 1123.40,601.20 1123.84,601.36 1124.27,601.40 1124.71,601.29 1125.15,601.06 1125.58,600.69 1126.02,600.19 1126.46,599.55 1126.89,598.78 1127.33,597.89 1127.77,596.86 1128.20,595.70 1128.64,594.42 1129.08,593.01 1129.51,591.47 1129.95,589.81 1130.39,588.03 1130.82,586.12 1131.26,584.10 1131.70,581.96 1132.13,579.71 1132.57,577.35 1133.01,574.87 1133.44,572.29 1133.88,569.60 1134.32,566.81 1134.75,563.92 1135.19,560.94 1135.63,557.86 1136.06,554.69 1136.50,551.43 1136.94,548.09 1137.37,544.67 1137.81,541.17 1138.25,537.59 1138.68,533.95 1139.12,530.23 1139.56,526.46 1139.99,522.62 1140.43,518.73 1140.87,514.79 1141.30,510.80 1141.74,506.76 1142.18,502.68 1142.61,498.57 1143.05,494.43 1143.49,490.26 1143.92,486.06 1144.36,481.84 1144.80,477.61 1145.23,473.37 1145.67,469.12 1146.11,464.87 1146.54,460.61 1146.98,456.37 1147.42,452.13 1147.85,447.91 1148.29,443.70 1148.73,439.52 1149.16,435.36 1149.60,431.23 1150.04,427.14 1150.47,423.08 1150.91,419.07 1151.35,415.10 1151.78,411.19 1152.22,407.33 1152.66,403.52 1153.09,399.78 1153.53,396.10 1153.97,392.49 1154.40,388.96 1154.84,385.50 1155.28,382.12 1155.71,378.82 1156.15,375.61 1156.59,372.49 1157.02,369.46 1157.46,366.52 1157.90,363.69 1158.33,360.95 1158.77,358.32 1159.21,355.80 1159.64,353.38 1160.08,351.07 1160.52,348.88 1160.95,346.81 1161.39,344.85 1161.83,343.01 1162.26,341.29 1162.70,339.70 1163.14,338.22 1163.57,336.88 1164.01,335.66 1164.45,334.58 1164.88,333.62 1165.32,332.79 1165.76,332.09 1166.19,331.53 1166.63,331.10 1167.07,330.80 1167.50,330.64 1167.94,330.60 1168.38,330.71 1168.81,330.94 1169.25,331.31 1169.69,331.81 1170.12,332.45 1170.56,333.22 1171.00,334.11 1171.43,335.14 1171.87,336.30 1172.31,337.58 1172.74,338.99 1173.18,340.53 1173.62,342.19 1174.05,343.97 1174.49,345.88 1174.93,347.90 1175.36,350.04 1175.80,352.29 1176.24,354.65 1176.67,357.13 1177.11,359.71 1177.55,362.40 1177.98,365.19 1178.42,368.08 1178.86,371.06 1179.29,374.14 1179.73,377.31 1180.17,380.57 1180.60,383.91 1181.04,387.33 1181.48,390.83 1181.91,394.41 1182.35,398.05 1182.79,401.77 1183.22,405.54 1183.66,409.38 1184.10,413.27 1184.53,417.21 1184.97,421.20 1185.41,425.24 1185.84,429.32 1186.28,433.43 1186.72,437.57 1187.15,441.74 1187.59,445.94 1188.03,450.16 1188.46,454.39 1188.90,458.63 1189.34,462.88 1189.77,467.13 1190.21,471.39 1190.65,475.63 1191.08,479.87 1191.52,484.09 1191.96,488.30 1192.39,492.48 1192.83,496.64 1193.27,500.77 1193.70,504.86 1194.14,508.92 1194.58,512.93 1195.01,516.90 1195.45,520.81 1195.89,524.67 1196.32,528.48 1196.76,532.22 1197.20,535.90 1197.63,539.51 1198.07,543.04 1198.51,546.50 1198.94,549.88 1199.38,553.18 1199.82,556.39 1200.25,559.51 1200.69,562.54 1201.13,565.48 1201.56,568.31 1202.00,571.05 1202.44,573.68 1202.87,576.20 1203.31,578.62 1203.75,580.93 1204.18,583.12 1204.62,585.19 1205.06,587.15 1205.49,588.99 1205.93,590.71 1206.37,592.30 1206.80,593.78 1207.24,595.12 1207.68,596.34 1208.11,597.42 1208.55,598.38 1208.99,599.21 1209.42,599.91 1209.86,600.47 1210.30,600.90 1210.73,601.20 1211.17,601.36 1211.61,601.40 1212.04,601.29 1212.48,601.06 1212.92,600.69 1213.35,600.19 1213.79,599.55 1214.23,598.78 1214.66,597.89 1215.10,596.86 1215.54,595.70 1215.97,594.42 1216.41,593.01 1216.85,591.47 1217.28,589.81 1217.72,588.03 1218.16,586.12 1218.59,584.10 1219.03,581.96 1219.47,579.71 1219.90,577.35 1220.34,574.87 1220.78,572.29 1221.21,569.60 1221.65,566.81 1222.09,563.92 1222.52,560.94 1222.96,557.86 1223.40,554.69 1223.83,551.43 1224.27,548.09 1224.71,544.67 1225.14,541.17 1225.58,537.59 1226.02,533.95 1226.45,530.23 1226.89,526.46 1227.33,522.62 1227.76,518.73 1228.20,514.79 1228.64,510.80 1229.07,506.76 1229.51,502.68 1229.95,498.57 1230.38,494.43 1230.82,490.26 1231.26,486.06 1231.69,481.84 1232.13,477.61 1232.57,473.37 1233.00,469.12 1233.44,464.87 1233.88,460.61 1234.31,456.37 1234.75,452.13 1235.19,447.91 1235.62,443.70 1236.06,439.52 1236.50,435.36 1236.93,431.23 1237.37,427.14 1237.81,423.08 1238.24,419.07 1238.68,415.10 1239.12,411.19 1239.55,407.33 1239.99,403.52 1240.43,399.78 1240.86,396.10 1241.30,392.49 1241.74,388.96 1242.17,385.50 1242.61,382.12 1243.05,378.82 1243.48,375.61 1243.92,372.49 1244.36,369.46 1244.79,366.52 1245.23,363.69 1245.67,360.95 1246.10,358.32 1246.54,355.80 1246.98,353.38 1247.41,351.07 1247.85,348.88 1248.29,346.81 1248.72,344.85 1249.16,343.01 1249.60,341.29 1250.03,339.70 1250.47,338.22 1250.91,336.88 1251.34,335.66 1251.78,334.58 1252.22,333.62 1252.65,332.79 1253.09,332.09 1253.53,331.53 1253.96,331.10 1254.40,330.80 1254.84,330.64 1255.27,330.60 1255.71,330.71 1256.15,330.94 1256.58,331.31 1257.02,331.81 1257.46,332.45 1257.89,333.22 1258.33,334.11 1258.77,335.14 1259.20,336.30 1259.64,337.58 1260.08,338.99 1260.51,340.53 1260.95,342.19 1261.39,343.97 1261.82,345.88 1262.26,347.90 1262.70,350.04 1263.13,352.29 1263.57,354.65 1264.01,357.13 1264.44,359.71 1264.88,362.40 1265.32,365.19 1265.75,368.08 1266.19,371.06 1266.63,374.14 1267.06,377.31 1267.50,380.57 1267.94,383.91 1268.37,387.33 1268.81,390.83 1269.25,394.41 1269.68,398.05 1270.12,401.77 1270.56,405.54 1270.99,409.38 1271.43,413.27 1271.87,417.21 1272.30,421.20 1272.74,425.24 1273.18,429.32 1273.61,433.43 1274.05,437.57 1274.49,441.74 1274.92,445.94 1275.36,450.16 1275.80,454.39 1276.23,458.63 1276.67,462.88 1277.11,467.13 1277.54,471.39 1277.98,475.63 1278.42,479.87 1278.85,484.09 1279.29,488.30 1279.73,492.48 1280.16,496.64 1280.60,500.77 1281.04,504.86 1281.47,508.92 1281.91,512.93 1282.35,516.90 1282.78,520.81 1283.22,524.67 1283.66,528.48 1284.09,532.22 1284.53,535.90 1284.97,539.51 1285.40,543.04 1285.84,546.50 1286.28,549.88 1286.71,553.18 1287.15,556.39 1287.59,559.51 1288.02,562.54 1288.46,565.48 1288.90,568.31 1289.33,571.05 1289.77,573.68 1290.21,576.20 1290.64,578.62 1291.08,580.93 1291.52,583.12 1291.95,585.19 1292.39,587.15 1292.83,588.99 1293.26,590.71 1293.70,592.30 1294.14,593.78 1294.57,595.12 1295.01,596.34 1295.45,597.42 1295.88,598.38 1296.32,599.21 1296.76,599.91 1297.19,600.47 1297.63,600.90 1298.07,601.20 1298.50,601.36 1298.94,601.40 1299.38,601.29 1299.81,601.06 1300.25,600.69 1300.69,600.19 1301.12,599.55 1301.56,598.78 1302.00,597.89 1302.43,596.86 1302.87,595.70 1303.31,594.42 1303.74,593.01 1304.18,591.47 1304.62,589.81 1305.05,588.03 1305.49,586.12 1305.93,584.10 1306.36,581.96 1306.80,579.71 1307.24,577.35 1307.67,574.87 1308.11,572.29 1308.55,569.60 1308.98,566.81 1309.42,563.92 1309.86,560.94 1310.29,557.86 1310.73,554.69 1311.17,551.43 1311.60,548.09 1312.04,544.67 1312.48,541.17 1312.91,537.59 1313.35,533.95 1313.79,530.23 1314.22,526.46 1314.66,522.62 1315.10,518.73 1315.53,514.79 1315.97,510.80 1316.41,506.76 1316.84,502.68 1317.28,498.57 1317.72,494.43 1318.15,490.26 1318.59,486.06 1319.03,481.84 1319.46,477.61 1319.90,473.37 1320.34,469.12 1320.77,464.87 1321.21,460.61 1321.65,456.37 1322.08,452.13 1322.52,447.91 1322.96,443.70 1323.39,439.52 1323.83,435.36 1324.27,431.23 1324.70,427.14 1325.14,423.08 1325.58,419.07 1326.01,415.10 1326.45,411.19 1326.89,407.33 1327.32,403.52 1327.76,399.78 1328.20,396.10 1328.63,392.49 1329.07,388.96 1329.51,385.50 1329.94,382.12 1330.38,378.82 1330.82,375.61 1331.25,372.49 1331.69,369.46 1332.13,366.52 1332.56,363.69 1333.00,360.95 1333.44,358.32 1333.87,355.80 1334.31,353.38 1334.75,351.07 1335.18,348.88 1335.62,346.81 1336.06,344.85 1336.49,343.01 1336.93,341.29 1337.37,339.70 1337.80,338.22 1338.24,336.88 1338.68,335.66 1339.11,334.58 1339.55,333.62 1339.99,332.79 1340.42,332.09 1340.86,331.53 1341.30,331.10 1341.73,330.80 1342.17,330.64 1342.61,330.60 1343.04,330.71 1343.48,330.94 1343.92,331.31 1344.35,331.81 1344.79,332.45 1345.23,333.22 1345.66,334.11 1346.10,335.14 1346.54,336.30 1346.97,337.58 1347.41,338.99 1347.85,340.53 1348.28,342.19 1348.72,343.97 1349.16,345.88 1349.59,347.90 1350.03,350.04 1350.47,352.29 1350.90,354.65 1351.34,357.13 1351.78,359.71 1352.21,362.40 1352.65,365.19 1353.09,368.08 1353.52,371.06 1353.96,374.14 1354.40,377.31 1354.83,380.57 1355.27,383.91 1355.71,387.33 1356.14,390.83 1356.58,394.41 1357.02,398.05 1357.45,401.77 1357.89,405.54 1358.33,409.38 1358.76,413.27 1359.20,417.21 1359.64,421.20 1360.07,425.24 1360.51,429.32 1360.95,433.43 1361.38,437.57 1361.82,441.74 1362.26,445.94 1362.69,450.16 1363.13,454.39 1363.57,458.63 1364.00,462.88 1364.44,467.13 1364.88,471.39 1365.31,475.63 1365.75,479.87 1366.19,484.09 1366.62,488.30 1367.06,492.48 1367.50,496.64 1367.93,500.77 1368.37,504.86 1368.81,508.92 1369.24,512.93 1369.68,516.90 1370.12,520.81 1370.55,524.67 1370.99,528.48 1371.43,532.22 1371.86,535.90 1372.30,539.51 1372.74,543.04 1373.17,546.50 1373.61,549.88 1374.05,553.18 1374.48,556.39 1374.92,559.51 1375.36,562.54 1375.79,565.48 1376.23,568.31 1376.67,571.05 1377.10,573.68 1377.54,576.20 1377.98,578.62 1378.41,580.93 1378.85,583.12 1379.29,585.19 1379.72,587.15 1380.16,588.99 1380.60,590.71 1381.03,592.30 1381.47,593.78 1381.91,595.12 1382.34,596.34 1382.78,597.42 1383.22,598.38 1383.65,599.21 1384.09,599.91 1384.53,600.47 1384.96,600.90 1385.40,601.20 1385.84,601.36 1386.27,601.40 1386.71,601.29 1387.15,601.06 1387.58,600.69 1388.02,600.19 1388.46,599.55 1388.89,598.78 1389.33,597.89 1389.77,596.86 1390.20,595.70 1390.64,594.42 1391.08,593.01 1391.51,591.47 1391.95,589.81 1392.39,588.03 1392.82,586.12 1393.26,584.10 1393.70,581.96 1394.13,579.71 1394.57,577.35 1395.01,574.87 1395.44,572.29 1395.88,569.60 1396.32,566.81 1396.75,563.92 1397.19,560.94 1397.63,557.86 1398.06,554.69 1398.50,551.43 1398.94,548.09 1399.37,544.67 1399.81,541.17 1400.25,537.59 1400.68,533.95 1401.12,530.23 1401.56,526.46 1401.99,522.62 1402.43,518.73 1402.87,514.79 1403.30,510.80 1403.74,506.76 1404.18,502.68 1404.61,498.57 1405.05,494.43 1405.49,490.26 1405.92,486.06 1406.36,481.84 1406.80,477.61 1407.23,473.37 1407.67,469.12 1408.11,464.87 1408.54,460.61 1408.98,456.37 1409.42,452.13 1409.85,447.91 1410.29,443.70 1410.73,439.52 1411.16,435.36 1411.60,431.23 1412.04,427.14 1412.47,423.08 1412.91,419.07 1413.35,415.10 1413.78,411.19 1414.22,407.33 1414.66,403.52 1415.09,399.78 1415.53,396.10 1415.97,392.49 1416.40,388.96 1416.84,385.50 1417.28,382.12 1417.71,378.82 1418.15,375.61 1418.59,372.49 1419.02,369.46 1419.46,366.52 1419.90,363.69 1420.33,360.95 1420.77,358.32 1421.21,355.80 1421.64,353.38 1422.08,351.07 1422.52,348.88 1422.95,346.81 1423.39,344.85 1423.83,343.01 1424.26,341.29 1424.70,339.70 1425.14,338.22 1425.57,336.88 1426.01,335.66 1426.45,334.58 1426.88,333.62 1427.32,332.79 1427.76,332.09 1428.19,331.53 1428.63,331.10 1429.07,330.80 1429.50,330.64 1429.94,330.60 1430.38,330.71 1430.81,330.94 1431.25,331.31 1431.69,331.81 1432.12,332.45 1432.56,333.22 1433.00,334.11 1433.43,335.14 1433.87,336.30 1434.31,337.58 1434.74,338.99 1435.18,340.53 1435.62,342.19 1436.05,343.97 1436.49,345.88 1436.93,347.90 1437.36,350.04 1437.80,352.29 1438.24,354.65 1438.67,357.13 1439.11,359.71 1439.55,362.40 1439.98,365.19 1440.42,368.08 1440.86,371.06 1441.29,374.14 1441.73,377.31 1442.17,380.57 1442.60,383.91 1443.04,387.33 1443.48,390.83 1443.91,394.41 1444.35,398.05 1444.79,401.77 1445.22,405.54 1445.66,409.38 1446.10,413.27 1446.53,417.21 1446.97,421.20 1447.41,425.24 1447.84,429.32 1448.28,433.43 1448.72,437.57 1449.15,441.74 1449.59,445.94 1450.03,450.16 1450.46,454.39 1450.90,458.63 1451.34,462.88 1451.77,467.13 1452.21,471.39 1452.65,475.63 1453.08,479.87 1453.52,484.09 1453.96,488.30 1454.39,492.48 1454.83,496.64 1455.27,500.77 1455.70,504.86 1456.14,508.92 1456.58,512.93 1457.01,516.90 1457.45,520.81 1457.89,524.67 1458.32,528.48 1458.76,532.22 1459.20,535.90 1459.63,539.51 1460.07,543.04 1460.51,546.50 1460.94,549.88 1461.38,553.18 1461.82,556.39 1462.25,559.51 1462.69,562.54 1463.13,565.48 1463.56,568.31 1464.00,571.05" fill="none" stroke="#2a86cc" stroke-width="1.1"/></g>
<rect x="940.0" y="344.0" width="524.0" height="257.0" fill="none" stroke="#a8a8a8" stroke-width="1"/>
<text x="937.5" y="607.2" font-size="11" text-anchor="end" fill="#b8b8b8" font-family='"Liberation Sans", sans-serif'>-1</text>
<text x="937.5" y="580.1" font-size="11" text-anchor="end" fill="#b8b8b8" font-family='"Liberation Sans", sans-serif'>-0.8</text>
<text x="937.5" y="553.0" font-size="11" text-anchor="end" fill="#b8b8b8" font-family='"Liberation Sans", sans-serif'>-0.6</text>
<text x="937.5" y="526.0" font-size="11" text-anchor="end" fill="#b8b8b8" font-family='"Liberation Sans", sans-serif'>-0.4</text>
<text x="937.5" y="498.9" font-size="11" text-anchor="end" fill="#b8b8b8" font-family='"Liberation Sans", sans-serif'>-0.2</text>
<text x="937.5" y="471.8" font-size="11" text-anchor="end" fill="#b8b8b8" font-family='"Liberation Sans", sans-serif'>0</text>
<text x="937.5" y="444.7" font-size="11" text-anchor="end" fill="#b8b8b8" font-family='"Liberation Sans", sans-serif'>0.2</text>
<text x="937.5" y="417.6" font-size="11" text-anchor="end" fill="#b8b8b8" font-family='"Liberation Sans", sans-serif'>0.4</text>
<text x="937.5" y="390.6" font-size="11" text-anchor="end" fill="#b8b8b8" font-family='"Liberation Sans", sans-serif'>0.6</text>
<text x="937.5" y="363.5" font-size="11" text-anchor="end" fill="#b8b8b8" font-family='"Liberation Sans", sans-serif'>0.8</text>
<text x="940.0" y="616" font-size="11" text-anchor="middle" fill="#b8b8b8" font-family='"Liberation Sans", sans-serif'>0</text>
<text x="1027.3" y="616" font-size="11" text-anchor="middle" fill="#b8b8b8" font-family='"Liberation Sans", sans-serif'>0.02</text>
<text x="1114.7" y="616" font-size="11" text-anchor="middle" fill="#b8b8b8" font-family='"Liberation Sans", sans-serif'>0.04</text>
<text x="1202.0" y="616" font-size="11" text-anchor="middle" fill="#b8b8b8" font-family='"Liberation Sans", sans-serif'>0.06</text>
<text x="1289.3" y="616" font-size="11" text-anchor="middle" fill="#b8b8b8" font-family='"Liberation Sans", sans-serif'>0.08</text>
<text x="1376.7" y="616" font-size="11" text-anchor="middle" fill="#b8b8b8" font-family='"Liberation Sans", sans-serif'>0.1</text>
<text x="1464.0" y="616" font-size="11" text-anchor="middle" fill="#b8b8b8" font-family='"Liberation Sans", sans-serif'>0.12</text>
</svg>
<div class="t" style="left:920px;top:628px;font-size:12px;color:#222;transform:scaleX(0.836);transform-origin:left">Ready</div>
<div class="a" style="left:1357px;top:627px;width:74px;height:18px;border-left:1px solid #d4d4d4;border-top:1px solid #e4e4e4"></div>
<div class="t" style="left:1360px;top:628px;font-size:11px;letter-spacing:-0.35px;color:#222;transform:scaleX(0.968);transform-origin:left">Sample based</div>
<div class="a" style="left:1433px;top:627px;width:46px;height:18px;border-left:1px solid #d4d4d4;border-top:1px solid #e4e4e4"></div>
<div class="t" style="left:1436px;top:628px;font-size:11px;letter-spacing:-0.3px;color:#222;transform:scaleX(0.966);transform-origin:left">T=0.120</div>
</body></html>
